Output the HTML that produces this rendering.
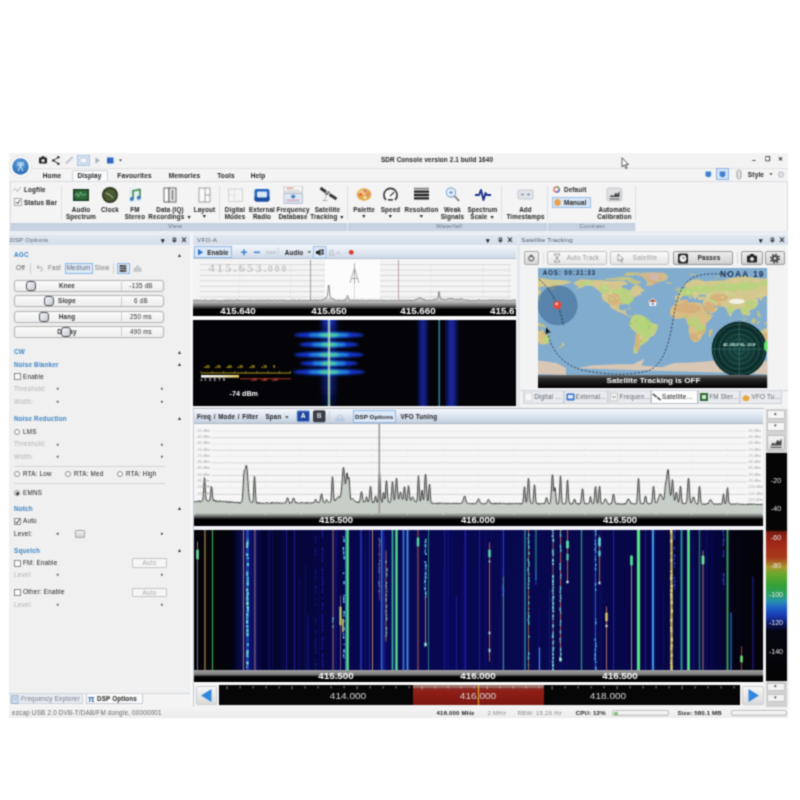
<!DOCTYPE html><html><head><meta charset="utf-8"><title>SDR Console</title><style>
*{margin:0;padding:0;box-sizing:border-box}
html,body{width:800px;height:800px;background:#fff;overflow:hidden}
body{position:relative;font-family:"Liberation Sans",sans-serif;font-size:6px;color:#222;line-height:1}
.a{position:absolute}
.t{position:absolute;white-space:nowrap;transform:translateX(-50%);text-align:center}
.l{position:absolute;white-space:nowrap}
.b{font-weight:bold}
.hdr{position:absolute;height:11px;background:linear-gradient(#e4eaf2,#d6dfea);color:#667;font-size:6px}
.blue{color:#3d84c6;font-weight:bold;font-size:6px}
.gray{color:#aaa}
</style></head><body><div id="app" style="position:absolute;left:0;top:0;width:800px;height:800px;background:#fff;filter:url(#softblur)">
<div class="a" style="left:9px;top:153px;width:779px;height:565px;background:#f3f3f3"></div>
<div class="t b" style="left:437px;top:157px;font-size:6.40px;color:#222;letter-spacing:0.1px">SDR Console version 2.1 build 1640</div>
<div class="l b" style="left:752px;top:156px;font-size:7.00px;color:#222;">–</div>
<div class="l b" style="left:765px;top:156px;font-size:6.30px;color:#222;letter-spacing:0.15px;">❐</div>
<div class="l b" style="left:778px;top:156px;font-size:6.30px;color:#222;letter-spacing:0.15px;">✕</div>
<svg class="a" style="left:38px;top:155px" width="90" height="11" viewBox="0 0 90 11"><rect x="1" y="2.5" width="8" height="6" rx="1" fill="#222"/><rect x="3.5" y="1.3" width="3" height="2" fill="#222"/><circle cx="5" cy="5.6" r="1.7" fill="#f1f1f1"/><path d="M20 2.5L15.5 5.5L20 8.5" stroke="#333" stroke-width="1" fill="none"/><circle cx="20.3" cy="2.3" r="1.3" fill="#333"/><circle cx="20.3" cy="8.7" r="1.3" fill="#333"/><circle cx="15.3" cy="5.5" r="1.3" fill="#333"/><path d="M28.5 8L34 2.5" stroke="#c4c8cc" stroke-width="2.2" stroke-linecap="round"/><rect x="39.5" y="0.5" width="12" height="10" fill="#d6e4f5" stroke="#9cbde4" stroke-width="0.8"/><rect x="42" y="3" width="7" height="5" rx="1" fill="#f4f8fc" stroke="#9aa9bb" stroke-width="0.6"/><path d="M57.5 2.5L62 5.5L57.5 8.5Z" fill="#a8adb3"/><rect x="69" y="2.5" width="6.5" height="6" fill="#2f66c4"/><path d="M81 4.5h3l-1.5 2z" fill="#333"/></svg>
<div class="a" style="left:9px;top:168px;width:779px;height:13px;background:#f4f4f4;border-top:1px solid #e3e3e3"></div>
<div class="a" style="left:72px;top:170px;width:36px;height:12px;background:#f8f9fa;border:1px solid #d0d4d9;border-bottom:none;border-radius:2px 2px 0 0"></div>
<div class="t b" style="left:52px;top:172.5px;font-size:6.51px;color:#222;letter-spacing:0.15px;">Home</div>
<div class="t b" style="left:89.5px;top:172.5px;font-size:6.51px;color:#222;letter-spacing:0.15px;">Display</div>
<div class="t b" style="left:134.5px;top:172.5px;font-size:6.51px;color:#222;letter-spacing:0.15px;">Favourites</div>
<div class="t b" style="left:184.5px;top:172.5px;font-size:6.51px;color:#222;letter-spacing:0.15px;">Memories</div>
<div class="t b" style="left:226px;top:172.5px;font-size:6.51px;color:#222;letter-spacing:0.15px;">Tools</div>
<div class="t b" style="left:258px;top:172.5px;font-size:6.51px;color:#222;letter-spacing:0.15px;">Help</div>
<div class="a" style="left:9px;top:155px;width:23px;height:23px;border-radius:50%;background:#fbfbfb;border:1px solid #e2e2e2"></div>
<svg class="a" style="left:12px;top:158px" width="17" height="17" viewBox="0 0 17 17"><defs><radialGradient id="ab" cx="50%" cy="35%" r="65%"><stop offset="0" stop-color="#6aa9e0"/><stop offset="1" stop-color="#2568b0"/></radialGradient></defs><circle cx="8.5" cy="8.5" r="8.2" fill="url(#ab)"/><path d="M5 5h7M5 7h7M8.5 5v4M6 13l2.5-5 2.5 5" stroke="#dbe9f8" stroke-width="1" fill="none"/></svg>
<div class="a" style="left:716px;top:168px;width:13px;height:12px;background:#d6e4f5;border:1px solid #8db4e6"></div>
<svg class="a" style="left:702px;top:168px" width="86" height="13" viewBox="0 0 86 13"><path d="M3.5 3.5h5.6v4.6l-2.8 1.4L3.5 8.1z" fill="#3f7fd0"/><path d="M17.7 3.5h5.6v4.6l-2.8 1.4l-2.8-1.4z" fill="#3f7fd0"/><rect x="35" y="2" width="4" height="9" rx="2" fill="none" stroke="#999" stroke-width="0.9"/><path d="M35 5h4M35 8h4" stroke="#999" stroke-width="0.6"/><path d="M67.5 5.2h3l-1.5 2z" fill="#333"/><circle cx="79" cy="6.5" r="3.2" fill="#c9cdd2"/><circle cx="79" cy="6.5" r="1.2" fill="#f1f1f1"/></svg>
<div class="t b" style="left:756px;top:171.5px;font-size:6.51px;color:#222;letter-spacing:0.15px;">Style</div>
<div class="a" style="left:10px;top:181px;width:778px;height:51px;background:#f4f4f5;border:1px solid #d9dce0;border-radius:0 0 3px 3px"></div>
<div class="a" style="left:10px;top:222.5px;width:625px;height:8px;background:linear-gradient(#c3d0df,#c8d4e2)"></div>
<div class="a" style="left:9px;top:231px;width:779px;height:2.5px;background:#e9eef4"></div>
<div class="t" style="left:175px;top:223.3px;font-size:6.20px;color:#6c7c94;letter-spacing:0.22px;">View</div>
<div class="t" style="left:449px;top:223.3px;font-size:6.20px;color:#6c7c94;letter-spacing:0.22px;">Waterfall</div>
<div class="t" style="left:592px;top:223.3px;font-size:6.20px;color:#6c7c94;letter-spacing:0.22px;">Contrast</div>
<div class="a" style="left:60.5px;top:186px;width:1px;height:34px;background:#dcdfe3"></div>
<div class="a" style="left:219px;top:186px;width:1px;height:34px;background:#dcdfe3"></div>
<div class="a" style="left:346.5px;top:186px;width:1px;height:34px;background:#dcdfe3"></div>
<div class="a" style="left:500.5px;top:186px;width:1px;height:34px;background:#dcdfe3"></div>
<div class="a" style="left:547px;top:186px;width:1px;height:34px;background:#dcdfe3"></div>
<div class="a" style="left:635px;top:186px;width:1px;height:34px;background:#dcdfe3"></div>
<div class="a" style="left:346.5px;top:222.5px;width:1px;height:8px;background:#e4e9f0"></div>
<div class="a" style="left:547px;top:222.5px;width:1px;height:8px;background:#e4e9f0"></div>
<div class="a" style="left:635px;top:222.5px;width:1px;height:8px;background:#e4e9f0"></div>
<svg class="a" style="left:12px;top:185px" width="12" height="22" viewBox="0 0 12 22"><path d="M1 6c2-3 3-3 4 0M5 7l4-5" stroke="#aaa" stroke-width="0.9" fill="none"/><rect x="2.5" y="13.5" width="7" height="7" fill="#fafafa" stroke="#9a9a9a" stroke-width="0.8"/><path d="M4 17l1.6 2L8 14.8" stroke="#444" stroke-width="1" fill="none"/></svg>
<div class="l b" style="left:24px;top:187px;font-size:6.30px;color:#222;letter-spacing:0.15px;">Logfile</div>
<div class="l b" style="left:24px;top:199.5px;font-size:6.30px;color:#222;letter-spacing:0.15px;">Status Bar</div>
<div class="t b" style="left:81px;top:207px;font-size:6.30px;color:#222;letter-spacing:0.15px;">Audio</div>
<div class="t b" style="left:81px;top:214px;font-size:6.30px;color:#222;letter-spacing:0.15px;">Spectrum</div>
<div class="t b" style="left:110px;top:207px;font-size:6.30px;color:#222;letter-spacing:0.15px;">Clock</div>
<div class="t b" style="left:135px;top:207px;font-size:6.30px;color:#222;letter-spacing:0.15px;">FM</div>
<div class="t b" style="left:135px;top:214px;font-size:6.30px;color:#222;letter-spacing:0.15px;">Stereo</div>
<div class="t b" style="left:170px;top:207px;font-size:6.30px;color:#222;letter-spacing:0.15px;">Data (IQ)</div>
<div class="t b" style="left:170px;top:214px;font-size:6.30px;color:#222;letter-spacing:0.15px;">Recordings <span style="font-size:5.2px;vertical-align:0.5px">▼</span></div>
<div class="t b" style="left:204.5px;top:207px;font-size:6.30px;color:#222;letter-spacing:0.15px;">Layout</div>
<div class="t b" style="left:204.5px;top:214px;font-size:6.30px;color:#222;letter-spacing:0.15px;"><span style="font-size:5.2px;vertical-align:1.5px">▼</span></div>
<div class="t b" style="left:235px;top:207px;font-size:6.30px;color:#222;letter-spacing:0.15px;">Digital</div>
<div class="t b" style="left:235px;top:214px;font-size:6.30px;color:#222;letter-spacing:0.15px;">Modes</div>
<div class="t b" style="left:262px;top:207px;font-size:6.30px;color:#222;letter-spacing:0.15px;">External</div>
<div class="t b" style="left:262px;top:214px;font-size:6.30px;color:#222;letter-spacing:0.15px;">Radio</div>
<div class="t b" style="left:293px;top:207px;font-size:6.30px;color:#222;letter-spacing:0.15px;">Frequency</div>
<div class="t b" style="left:293px;top:214px;font-size:6.30px;color:#222;letter-spacing:0.15px;">Database</div>
<div class="t b" style="left:327.5px;top:207px;font-size:6.30px;color:#222;letter-spacing:0.15px;">Satellite</div>
<div class="t b" style="left:327.5px;top:214px;font-size:6.30px;color:#222;letter-spacing:0.15px;">Tracking <span style="font-size:5.2px;vertical-align:0.5px">▼</span></div>
<div class="t b" style="left:364px;top:207px;font-size:6.30px;color:#222;letter-spacing:0.15px;">Palette</div>
<div class="t b" style="left:364px;top:214px;font-size:6.30px;color:#222;letter-spacing:0.15px;"><span style="font-size:5.2px;vertical-align:1.5px">▼</span></div>
<div class="t b" style="left:390.5px;top:207px;font-size:6.30px;color:#222;letter-spacing:0.15px;">Speed</div>
<div class="t b" style="left:390.5px;top:214px;font-size:6.30px;color:#222;letter-spacing:0.15px;"><span style="font-size:5.2px;vertical-align:1.5px">▼</span></div>
<div class="t b" style="left:421.5px;top:207px;font-size:6.30px;color:#222;letter-spacing:0.15px;">Resolution</div>
<div class="t b" style="left:421.5px;top:214px;font-size:6.30px;color:#222;letter-spacing:0.15px;"><span style="font-size:5.2px;vertical-align:1.5px">▼</span></div>
<div class="t b" style="left:452.5px;top:207px;font-size:6.30px;color:#222;letter-spacing:0.15px;">Weak</div>
<div class="t b" style="left:452.5px;top:214px;font-size:6.30px;color:#222;letter-spacing:0.15px;">Signals</div>
<div class="t b" style="left:482.5px;top:207px;font-size:6.30px;color:#222;letter-spacing:0.15px;">Spectrum</div>
<div class="t b" style="left:482.5px;top:214px;font-size:6.30px;color:#222;letter-spacing:0.15px;">Scale <span style="font-size:5.2px;vertical-align:0.5px">▼</span></div>
<div class="t b" style="left:525.5px;top:207px;font-size:6.30px;color:#222;letter-spacing:0.15px;">Add</div>
<div class="t b" style="left:525.5px;top:214px;font-size:6.30px;color:#222;letter-spacing:0.15px;">Timestamps</div>
<div class="t b" style="left:614.5px;top:207px;font-size:6.30px;color:#222;letter-spacing:0.15px;">Automatic</div>
<div class="t b" style="left:614.5px;top:214px;font-size:6.30px;color:#222;letter-spacing:0.15px;">Calibration</div>
<svg class="a" style="left:9px;top:186px" width="640" height="20" viewBox="0 0 640 20"><rect x="64" y="3" width="16" height="12" fill="#1f3b22"/><rect x="65.5" y="4.5" width="13" height="9" fill="#2f6a3a"/><path d="M66 10l2-3 1.5 4 2-5 2 4 2-2 2 1" stroke="#8fd39a" stroke-width="0.7" fill="none"/><circle cx="101" cy="9" r="8" fill="#2b3320"/><circle cx="101" cy="9" r="6.3" fill="#4a5a33"/><path d="M101 9l-4-2M101 9l3 3" stroke="#cfd8b0" stroke-width="0.9"/><rect x="120" y="2" width="12" height="14" fill="#e4eef2"/><path d="M124 13V5l7-1.5v8" stroke="#3d8a4a" stroke-width="1.6" fill="none"/><circle cx="122.8" cy="13" r="2" fill="#3c79c0"/><circle cx="129.8" cy="11.8" r="2" fill="#3c79c0"/><rect x="155" y="2" width="5" height="14" fill="#fff" stroke="#555" stroke-width="0.9"/><rect x="160" y="2" width="7" height="14" fill="#e8e8e8" stroke="#555" stroke-width="0.9"/><path d="M163.5 4v10" stroke="#777" stroke-width="1.5"/><rect x="190" y="2" width="11" height="14" fill="#fbfbfb" stroke="#8a8a8a" stroke-width="0.8"/><path d="M196 2v14M196 9h5" stroke="#8a8a8a" stroke-width="0.8"/><rect x="219.5" y="3" width="14" height="12.5" fill="#f3f3f3" stroke="#cbcbcb" stroke-width="0.8"/><path d="M225.5 3v12.5M219.5 9h6" stroke="#dadada" stroke-width="0.7"/><rect x="245.5" y="3" width="15" height="12.5" rx="2" fill="#2460c0"/><rect x="245.5" y="10" width="15" height="5.5" rx="2" fill="#1a4a9e"/><rect x="248" y="5.5" width="10" height="6" rx="1" fill="#dce9f8"/><rect x="275" y="0" width="18.5" height="6" fill="#f6f6f6" stroke="#aaa" stroke-width="0.6"/><path d="M277.5 2.2h7" stroke="#d55" stroke-width="0.8"/><path d="M277.5 4.2h13" stroke="#bbb" stroke-width="0.6"/><rect x="275" y="7.5" width="18.5" height="10" fill="#dfe9f5" stroke="#9aa4b5" stroke-width="0.6"/><circle cx="284.2" cy="10.5" r="2.1" fill="#4a86cc"/><path d="M277.5 14h13" stroke="#d77" stroke-width="0.7"/><path d="M277.5 15.8h13" stroke="#aab" stroke-width="0.6"/><path d="M311.5 2l5.5 4" stroke="#333" stroke-width="2.8"/><path d="M320.5 8.5l7 4.5" stroke="#333" stroke-width="2.8"/><path d="M316.5 8.8l4-3" stroke="#777" stroke-width="2.4"/><path d="M317 10.5l-1.5 3M313.5 14.5h5" stroke="#888" stroke-width="0.7"/><ellipse cx="355" cy="8.5" rx="7.3" ry="6.2" fill="#e2a94c"/><ellipse cx="353" cy="6.5" rx="4" ry="2.5" fill="#f0c878"/><circle cx="351.5" cy="8.5" r="1.6" fill="#d8605a"/><circle cx="356" cy="5.2" r="1.4" fill="#c87a9a"/><circle cx="359" cy="8.5" r="1.5" fill="#d88a8a"/><circle cx="356" cy="11.5" r="1.6" fill="#f3e3c2"/><path d="M376.6 13.4a6.6 6.6 0 1 1 9.8 0" fill="#f8f8f8" stroke="#2e2e2e" stroke-width="1.6" stroke-linecap="round"/><path d="M381.5 9.6l3.4-3.2" stroke="#2e2e2e" stroke-width="1.3" stroke-linecap="round"/><path d="M379 13.8h5" stroke="#2e2e2e" stroke-width="1.5"/><path d="M405 2.6h15" stroke="#777" stroke-width="1.6"/><path d="M405 5.6h15M405 9h15M405 12.4h15" stroke="#1c1c1c" stroke-width="2.3"/><circle cx="442" cy="6.5" r="4.6" fill="#eaf3fb" stroke="#7fa6cc" stroke-width="1.1"/><path d="M440 6.5h4M442 4.5v4" stroke="#4a86cc" stroke-width="0.9"/><path d="M445.5 10l4.5 5" stroke="#777" stroke-width="1.8"/><path d="M466 9h4l2-5 2.5 10 2-7 1.5 2h4" stroke="#1c2f8a" stroke-width="1.9" fill="none" stroke-linejoin="round"/><rect x="509" y="4" width="15" height="9" rx="1" fill="#e2e4e8" stroke="#b3b7bd" stroke-width="0.7"/><path d="M512 8.5h3M518 8.5h3" stroke="#7d93b5" stroke-width="1.6"/><rect x="598" y="2" width="15" height="13" rx="2" fill="#dedfe1" stroke="#b9bbbf" stroke-width="0.7"/><path d="M600.5 11l2-2 2 1 2-3 2 1 2-3v6h-10z" fill="#444"/><path d="M600.5 13h10" stroke="#444" stroke-width="1"/><circle cx="547.5" cy="3.4" r="2.6" fill="none" stroke="#d66" stroke-width="1.3"/><path d="M547.5 0.8a2.6 2.6 0 0 1 2.6 2.6" stroke="#5a5" stroke-width="1.3" fill="none"/><path d="M550.1 3.4a2.6 2.6 0 0 1 -2.6 2.6" stroke="#46c" stroke-width="1.3" fill="none"/></svg>
<div class="l b" style="left:564px;top:186.5px;font-size:6.30px;color:#222;letter-spacing:0.15px;">Default</div>
<div class="a" style="left:552px;top:197px;width:39px;height:11px;background:#d8e6f6;border:1px solid #9cc0ea"></div>
<svg class="a" style="left:553px;top:198px" width="9" height="9" viewBox="0 0 9 9"><ellipse cx="4.5" cy="4.5" rx="3.2" ry="3.6" fill="#e6a24a"/></svg>
<div class="l b" style="left:564px;top:199.5px;font-size:6.30px;color:#222;letter-spacing:0.15px;">Manual</div>
<svg class="a" style="left:621px;top:157px" width="9" height="13" viewBox="0 0 9 13"><path d="M1 0.8v9.2l2.2-2 1.6 3.6 1.4-.6-1.6-3.5h3z" fill="#fff" stroke="#333" stroke-width="0.8"/></svg>
<div class="a" style="left:9px;top:233.5px;width:181px;height:473px;background:#f0f0f0"></div>
<div class="a" style="left:9px;top:234.5px;width:181px;height:10.5px;background:linear-gradient(#e0e7f0,#d4deea)"></div>
<div class="l" style="left:10px;top:237px;font-size:6.25px;color:#5b6472;letter-spacing:0.22px;">DSP Options</div>
<div class="l b" style="left:160.5px;top:236.5px;font-size:7.00px;color:#222;">▾</div>
<svg class="a" style="left:171px;top:236px" width="18" height="8" viewBox="0 0 18 8"><path d="M2.2 2h2.4v2.8H2.2zM1.5 4.9h3.8M3.4 4.9v1.8" stroke="#222" stroke-width="0.9" fill="none"/><path d="M11 1.5l4 4.5M15 1.5l-4 4.5" stroke="#222" stroke-width="1.1"/></svg>
<div class="a" style="left:190px;top:233.5px;width:2.5px;height:473px;background:#f5f6f8"></div>
<div class="l b" style="left:14px;top:252.4px;font-size:6.41px;color:#3d86c8;letter-spacing:0.15px;">AGC</div>
<div class="l" style="left:177.5px;top:252.6px;font-size:5.78px;color:#333;letter-spacing:0.22px;">▴</div>
<div class="t" style="left:20.5px;top:265px;font-size:6.30px;color:#555;letter-spacing:0.22px;">Off</div>
<div class="a" style="left:29.5px;top:263px;width:1px;height:11px;background:#cfcfcf"></div>
<svg class="a" style="left:35px;top:264px" width="9" height="8" viewBox="0 0 9 8"><path d="M2 3.2h3.2a2 2 0 0 1 0 4M2 3.2l2-1.8M2 3.2l2 1.6" stroke="#999" stroke-width="0.8" fill="none"/></svg>
<div class="t" style="left:54.5px;top:265px;font-size:6.30px;color:#777;letter-spacing:0.22px;">Fast</div>
<div class="a" style="left:64.5px;top:262.7px;width:28px;height:11px;background:#dde9f6;border:1px solid #8eb6e4"></div>
<div class="t" style="left:78.5px;top:265px;font-size:6.30px;color:#667;letter-spacing:0.22px;">Medium</div>
<div class="t" style="left:102px;top:265px;font-size:6.30px;color:#777;letter-spacing:0.22px;">Slow</div>
<div class="a" style="left:113px;top:263px;width:1px;height:11px;background:#cfcfcf"></div>
<div class="a" style="left:116.5px;top:262.7px;width:13px;height:11px;background:#dde9f6;border:1px solid #8eb6e4"></div>
<svg class="a" style="left:118px;top:264px" width="26" height="9" viewBox="0 0 26 9"><path d="M1.5 2h7M1.5 4.5h7M1.5 7h7" stroke="#333" stroke-width="1.3"/><path d="M3 1v2M6.5 3.5v2M4 6v2" stroke="#333" stroke-width="1.3"/><path d="M16 8V4.5h2V8M18.5 8V2h2v6M21 8V4h2v4" stroke="#b5b9bd" stroke-width="0.8" fill="#d5d8db"/></svg>
<div class="a" style="left:14px;top:280.0px;width:150px;height:12px;background:linear-gradient(#fbfbfb,#ededed);border:1px solid #b4b4b4;border-radius:3px;box-shadow:0 0 1px #c4c4c4"></div>
<div class="a" style="left:120.5px;top:281.5px;width:1px;height:9px;background:#cdcdcd"></div>
<div class="t b" style="left:67px;top:283.0px;font-size:6.30px;color:#333;letter-spacing:0.15px;">Knee</div>
<div class="t" style="left:141px;top:283.0px;font-size:6.30px;color:#333;letter-spacing:0.22px;">-135 dB</div>
<div class="a" style="left:25.5px;top:281.0px;width:10px;height:10px;background:linear-gradient(135deg,#f6f6f8,#c4c8d0);border:1.4px solid #4c5058;border-radius:3px"></div>
<div class="a" style="left:14px;top:295.3px;width:150px;height:12px;background:linear-gradient(#fbfbfb,#ededed);border:1px solid #b4b4b4;border-radius:3px;box-shadow:0 0 1px #c4c4c4"></div>
<div class="a" style="left:120.5px;top:296.8px;width:1px;height:9px;background:#cdcdcd"></div>
<div class="t b" style="left:67px;top:298.3px;font-size:6.30px;color:#333;letter-spacing:0.15px;">Slope</div>
<div class="t" style="left:141px;top:298.3px;font-size:6.30px;color:#333;letter-spacing:0.22px;">6 dB</div>
<div class="a" style="left:43.5px;top:296.3px;width:10px;height:10px;background:linear-gradient(135deg,#f6f6f8,#c4c8d0);border:1.4px solid #4c5058;border-radius:3px"></div>
<div class="a" style="left:14px;top:310.6px;width:150px;height:12px;background:linear-gradient(#fbfbfb,#ededed);border:1px solid #b4b4b4;border-radius:3px;box-shadow:0 0 1px #c4c4c4"></div>
<div class="a" style="left:120.5px;top:312.1px;width:1px;height:9px;background:#cdcdcd"></div>
<div class="t b" style="left:67px;top:313.6px;font-size:6.30px;color:#333;letter-spacing:0.15px;">Hang</div>
<div class="t" style="left:141px;top:313.6px;font-size:6.30px;color:#333;letter-spacing:0.22px;">250 ms</div>
<div class="a" style="left:38.5px;top:311.6px;width:10px;height:10px;background:linear-gradient(135deg,#f6f6f8,#c4c8d0);border:1.4px solid #4c5058;border-radius:3px"></div>
<div class="a" style="left:14px;top:325.9px;width:150px;height:12px;background:linear-gradient(#fbfbfb,#ededed);border:1px solid #b4b4b4;border-radius:3px;box-shadow:0 0 1px #c4c4c4"></div>
<div class="a" style="left:120.5px;top:327.4px;width:1px;height:9px;background:#cdcdcd"></div>
<div class="t b" style="left:67px;top:328.9px;font-size:6.30px;color:#333;letter-spacing:0.15px;">Decay</div>
<div class="t" style="left:141px;top:328.9px;font-size:6.30px;color:#333;letter-spacing:0.22px;">490 ms</div>
<div class="a" style="left:61px;top:326.9px;width:10px;height:10px;background:linear-gradient(135deg,#f6f6f8,#c4c8d0);border:1.4px solid #4c5058;border-radius:3px"></div>
<div class="l b" style="left:14px;top:349.3px;font-size:6.41px;color:#3d86c8;letter-spacing:0.15px;">CW</div>
<div class="l" style="left:177.5px;top:349.5px;font-size:5.78px;color:#333;letter-spacing:0.22px;">▴</div>
<div class="l b" style="left:14px;top:361.8px;font-size:6.41px;color:#3d86c8;letter-spacing:0.15px;">Noise Blanker</div>
<div class="l" style="left:177.5px;top:362px;font-size:5.78px;color:#333;letter-spacing:0.22px;">▴</div>
<div class="a" style="left:14px;top:373.2px;width:7px;height:7px;background:#fafafa;border:0.8px solid #8e8e8e"></div>
<div class="l" style="left:23px;top:373.6px;font-size:6.30px;color:#222;letter-spacing:0.22px;">Enable</div>
<div class="l" style="left:14px;top:385.7px;font-size:6.30px;color:#b3b3b3;letter-spacing:0.22px;">Threshold:</div>
<div class="l" style="left:55.5px;top:386.09999999999997px;font-size:5.25px;color:#555;letter-spacing:0.22px;">◂</div>
<div class="l" style="left:160.5px;top:386.09999999999997px;font-size:5.25px;color:#555;letter-spacing:0.22px;">▸</div>
<div class="l" style="left:14px;top:399px;font-size:6.30px;color:#b3b3b3;letter-spacing:0.22px;">Width:</div>
<div class="l" style="left:55.5px;top:399.4px;font-size:5.25px;color:#555;letter-spacing:0.22px;">◂</div>
<div class="l" style="left:160.5px;top:399.4px;font-size:5.25px;color:#555;letter-spacing:0.22px;">▸</div>
<div class="l b" style="left:14px;top:416.1px;font-size:6.41px;color:#3d86c8;letter-spacing:0.15px;">Noise Reduction</div>
<div class="l" style="left:177.5px;top:416.3px;font-size:5.78px;color:#333;letter-spacing:0.22px;">▴</div>
<div class="a" style="left:14px;top:428.8px;width:6px;height:6px;background:#fafafa;border:0.8px solid #8e8e8e;border-radius:50%"></div>
<div class="l" style="left:23px;top:428.7px;font-size:6.30px;color:#222;letter-spacing:0.22px;">LMS</div>
<div class="l" style="left:14px;top:441.3px;font-size:6.30px;color:#b3b3b3;letter-spacing:0.22px;">Threshold:</div>
<div class="l" style="left:55.5px;top:441.7px;font-size:5.25px;color:#555;letter-spacing:0.22px;">◂</div>
<div class="l" style="left:160.5px;top:441.7px;font-size:5.25px;color:#555;letter-spacing:0.22px;">▸</div>
<div class="l" style="left:14px;top:454px;font-size:6.30px;color:#b3b3b3;letter-spacing:0.22px;">Width:</div>
<div class="l" style="left:55.5px;top:454.4px;font-size:5.25px;color:#555;letter-spacing:0.22px;">◂</div>
<div class="l" style="left:160.5px;top:454.4px;font-size:5.25px;color:#555;letter-spacing:0.22px;">▸</div>
<div class="a" style="left:14px;top:465.5px;width:151px;height:1px;background:#d4d4d4"></div>
<div class="a" style="left:14px;top:471.3px;width:6px;height:6px;background:#fafafa;border:0.8px solid #8e8e8e;border-radius:50%"></div>
<div class="l" style="left:23px;top:471.2px;font-size:6.30px;color:#222;letter-spacing:0.22px;">RTA: Low</div>
<div class="a" style="left:65px;top:471.3px;width:6px;height:6px;background:#fafafa;border:0.8px solid #8e8e8e;border-radius:50%"></div>
<div class="l" style="left:74px;top:471.2px;font-size:6.30px;color:#222;letter-spacing:0.22px;">RTA: Med</div>
<div class="a" style="left:117px;top:471.3px;width:6px;height:6px;background:#fafafa;border:0.8px solid #8e8e8e;border-radius:50%"></div>
<div class="l" style="left:126px;top:471.2px;font-size:6.30px;color:#222;letter-spacing:0.22px;">RTA: High</div>
<div class="a" style="left:14px;top:483px;width:151px;height:1px;background:#d4d4d4"></div>
<div class="a" style="left:14px;top:490.3px;width:6px;height:6px;background:#fafafa;border:0.8px solid #8e8e8e;border-radius:50%"></div>
<div class="a" style="left:15.5px;top:491.8px;width:3px;height:3px;background:#333;border-radius:50%"></div>
<div class="l" style="left:23px;top:490.2px;font-size:6.30px;color:#222;letter-spacing:0.22px;">EMNS</div>
<div class="l b" style="left:14px;top:506.1px;font-size:6.41px;color:#3d86c8;letter-spacing:0.15px;">Notch</div>
<div class="l" style="left:177.5px;top:506.3px;font-size:5.78px;color:#333;letter-spacing:0.22px;">▴</div>
<div class="a" style="left:14px;top:517.8px;width:7px;height:7px;background:#fafafa;border:0.8px solid #8e8e8e"></div>
<svg class="a" style="left:14px;top:517.8px" width="7" height="7" viewBox="0 0 7 7"><path d="M1.4 3.6l1.5 1.8L5.6 1.2" stroke="#333" stroke-width="1" fill="none"/></svg>
<div class="l" style="left:23px;top:518.2px;font-size:6.30px;color:#222;letter-spacing:0.22px;">Auto</div>
<div class="l" style="left:14px;top:530.7px;font-size:6.30px;color:#222;letter-spacing:0.22px;">Level:</div>
<div class="l" style="left:55.5px;top:531.1999999999999px;font-size:5.25px;color:#333;letter-spacing:0.22px;">◂</div>
<div class="l" style="left:160.5px;top:531.1999999999999px;font-size:5.25px;color:#333;letter-spacing:0.22px;">▸</div>
<div class="a" style="left:75px;top:529.5px;width:10px;height:8.5px;background:linear-gradient(#f0f0f0,#cfcfcf);border:1px solid #aaa;border-radius:1px"></div>
<div class="l b" style="left:14px;top:547.5999999999999px;font-size:6.41px;color:#3d86c8;letter-spacing:0.15px;">Squelch</div>
<div class="l" style="left:177.5px;top:547.8px;font-size:5.78px;color:#333;letter-spacing:0.22px;">▴</div>
<div class="a" style="left:14px;top:559.5px;width:7px;height:7px;background:#fafafa;border:0.8px solid #8e8e8e"></div>
<div class="l" style="left:23px;top:559.9px;font-size:6.30px;color:#222;letter-spacing:0.22px;">FM: Enable</div>
<div class="a" style="left:132px;top:558px;width:35px;height:9.5px;background:#f6f6f6;border:1px solid #c4c4c4;border-radius:1px"></div>
<div class="t" style="left:149.5px;top:560px;font-size:6.30px;color:#aaa;letter-spacing:0.22px;">Auto</div>
<div class="l" style="left:14px;top:572px;font-size:6.30px;color:#b3b3b3;letter-spacing:0.22px;">Level:</div>
<div class="l" style="left:55.5px;top:572.4px;font-size:5.25px;color:#555;letter-spacing:0.22px;">◂</div>
<div class="l" style="left:160.5px;top:572.4px;font-size:5.25px;color:#555;letter-spacing:0.22px;">▸</div>
<div class="a" style="left:14px;top:589.0px;width:7px;height:7px;background:#fafafa;border:0.8px solid #8e8e8e"></div>
<div class="l" style="left:23px;top:589.4px;font-size:6.30px;color:#222;letter-spacing:0.22px;">Other: Enable</div>
<div class="a" style="left:132px;top:587.5px;width:35px;height:9.5px;background:#f6f6f6;border:1px solid #c4c4c4;border-radius:1px"></div>
<div class="t" style="left:149.5px;top:589.5px;font-size:6.30px;color:#aaa;letter-spacing:0.22px;">Auto</div>
<div class="l" style="left:14px;top:602px;font-size:6.30px;color:#b3b3b3;letter-spacing:0.22px;">Level:</div>
<div class="l" style="left:55.5px;top:602.4px;font-size:5.25px;color:#555;letter-spacing:0.22px;">◂</div>
<div class="l" style="left:160.5px;top:602.4px;font-size:5.25px;color:#555;letter-spacing:0.22px;">▸</div>
<div class="a" style="left:9px;top:692.5px;width:181px;height:1px;background:#d2d6db"></div>
<div class="a" style="left:9px;top:693.5px;width:181px;height:13px;background:#f4f4f4"></div>
<div class="a" style="left:10px;top:693.5px;width:73px;height:10.5px;background:#e6ebf1;border:1px solid #d0d5dc;border-top:none"></div>
<div class="a" style="left:86px;top:693.5px;width:57px;height:10.5px;background:#fbfbfb;border:1px solid #c5cad1;border-top:none"></div>
<svg class="a" style="left:11px;top:695px" width="8" height="9" viewBox="0 0 8 9"><rect x="1" y="0.8" width="6" height="7.4" fill="#dfe9f5" stroke="#6f8fb8" stroke-width="0.7"/><path d="M2.3 3h3.4M2.3 5h3.4" stroke="#6f8fb8" stroke-width="0.6"/></svg>
<div class="l" style="left:21px;top:696px;font-size:6.30px;color:#778;letter-spacing:0.22px;">Frequency Explorer</div>
<div class="l b" style="left:88px;top:694.5px;font-size:8.50px;color:#2d5f9e;">π</div>
<div class="l b" style="left:97px;top:696px;font-size:6.30px;color:#222;letter-spacing:0.15px;">DSP Options</div>
<div class="a" style="left:192.5px;top:233.5px;width:324px;height:174px;background:#f3f3f3"></div>
<div class="a" style="left:192.5px;top:234.5px;width:324px;height:10.5px;background:linear-gradient(#e0e7f0,#d4deea)"></div>
<div class="l" style="left:197px;top:237px;font-size:6.25px;color:#5b6472;letter-spacing:0.22px;">VFO-A</div>
<div class="l b" style="left:486px;top:236.5px;font-size:7.00px;color:#222;">▾</div>
<svg class="a" style="left:496.5px;top:236px" width="18" height="8" viewBox="0 0 18 8"><path d="M2.2 2h2.4v2.8H2.2zM1.5 4.9h3.8M3.4 4.9v1.8" stroke="#222" stroke-width="0.9" fill="none"/><path d="M11 1.5l4 4.5M15 1.5l-4 4.5" stroke="#222" stroke-width="1.1"/></svg>
<div class="a" style="left:516.5px;top:233.5px;width:3px;height:174px;background:#e3e8ee"></div>
<div class="a" style="left:193px;top:245.5px;width:323px;height:13.5px;background:linear-gradient(#f1f5fa,#cfdae8);border-bottom:1px solid #b8c4d3"></div>
<div class="a" style="left:194px;top:246.3px;width:38px;height:12px;background:#dbe8f7;border:1px solid #95b9e6"></div>
<svg class="a" style="left:193px;top:246px" width="165" height="13" viewBox="0 0 165 13"><path d="M5 3l5 3.3L5 9.6z" fill="#2a72d0"/><path d="M48 6.3h6M51 3.3v6" stroke="#3c7fd2" stroke-width="1.5"/><path d="M61 6.3h6" stroke="#3c7fd2" stroke-width="1.5"/><path d="M85 1.5v10" stroke="#c5ccd6" stroke-width="0.8"/><path d="M114.8 5.3h3l-1.5 2z" fill="#333"/><rect x="120.5" y="0.5" width="12.5" height="11.5" fill="#dbe8f7" stroke="#95b9e6" stroke-width="0.8"/><path d="M123 5h2l2.5-2v7L125 8h-2z" fill="#222"/><rect x="128.3" y="3.5" width="2.5" height="2" fill="#222"/><rect x="128.3" y="6.5" width="2.5" height="2" fill="#222"/><path d="M137 9V5.5a1.5 1.5 0 0 1 3 0V9M136 9h6" stroke="#b5bac2" stroke-width="0.9" fill="none"/><path d="M144 9V6h2.5v3" stroke="#c4c8ce" stroke-width="0.8" fill="none"/><circle cx="158.3" cy="6.3" r="2.4" fill="#d8392b"/></svg>
<div class="t b" style="left:218px;top:249.5px;font-size:6.30px;color:#222;letter-spacing:0.15px;">Enable</div>
<div class="t b" style="left:271px;top:249.8px;font-size:5.78px;color:#b8bcc4;letter-spacing:0.15px;">xxx</div>
<div class="t b" style="left:294px;top:249.5px;font-size:6.30px;color:#222;letter-spacing:0.15px;">Audio</div>
<svg class="a" style="left:193px;top:259.5px" width="323" height="56" viewBox="0 0 323 56"><rect x="0" y="0" width="323" height="56" fill="#f4f4f4"/><rect x="132" y="0" width="55" height="41" fill="#fcfcfc"/><path d="M7 4.6H132M187 4.6H318" stroke="#d9d9d9" stroke-width="0.9"/><path d="M7 10.0H132M187 10.0H318" stroke="#d9d9d9" stroke-width="0.9"/><path d="M7 15.4H132M187 15.4H318" stroke="#d9d9d9" stroke-width="0.9"/><path d="M7 20.800000000000004H132M187 20.800000000000004H318" stroke="#d9d9d9" stroke-width="0.9"/><path d="M7 26.200000000000003H132M187 26.200000000000003H318" stroke="#d9d9d9" stroke-width="0.9"/><path d="M7 31.6H132M187 31.6H318" stroke="#d9d9d9" stroke-width="0.9"/><path d="M7 37.00000000000001H132M187 37.00000000000001H318" stroke="#d9d9d9" stroke-width="0.9"/><path d="M46 4V40" stroke="#d0d0d0" stroke-width="0.7" stroke-dasharray="1.5 2"/><path d="M97.5 4V40" stroke="#d0d0d0" stroke-width="0.7" stroke-dasharray="1.5 2"/><path d="M238 4V40" stroke="#d0d0d0" stroke-width="0.7" stroke-dasharray="1.5 2"/><path d="M290 4V40" stroke="#d0d0d0" stroke-width="0.7" stroke-dasharray="1.5 2"/><path d="M316 4V40" stroke="#d0d0d0" stroke-width="0.7" stroke-dasharray="1.5 2"/><defs><linearGradient id="vg" x1="0" y1="0" x2="0" y2="1"><stop offset="0" stop-color="#d2d2d2"/><stop offset="0.3" stop-color="#b4b4b4"/><stop offset="0.6" stop-color="#777"/><stop offset="0.9" stop-color="#1a1a1a"/><stop offset="1" stop-color="#000"/></linearGradient></defs><rect x="0" y="0" width="323" height="56" fill="#000"/><rect x="0" y="0" width="323" height="39.5" fill="#d0d0d0"/><rect x="0" y="39" width="323" height="10.5" fill="url(#vg)"/><polygon points="0,48 0,40.5 0.0,40.0 0.5,40.3 1.0,40.2 1.5,40.4 2.0,40.4 2.5,39.9 3.0,39.8 3.5,40.6 4.0,40.1 4.5,40.0 5.0,40.8 5.5,40.3 6.0,40.6 6.5,40.3 7.0,40.4 7.5,40.0 8.0,40.4 8.5,40.7 9.0,40.3 9.5,40.5 10.0,40.5 10.5,39.9 11.0,40.6 11.5,40.4 12.0,40.1 12.5,39.8 13.0,40.7 13.5,40.3 14.0,40.5 14.5,40.7 15.0,40.5 15.5,40.7 16.0,40.2 16.5,40.6 17.0,40.2 17.5,40.7 18.0,40.7 18.5,39.9 19.0,39.9 19.5,40.0 20.0,40.8 20.5,40.2 21.0,40.4 21.5,40.1 22.0,40.3 22.5,40.2 23.0,40.2 23.5,40.4 24.0,40.4 24.5,40.7 25.0,40.5 25.5,40.7 26.0,40.7 26.5,40.8 27.0,40.5 27.5,40.0 28.0,40.7 28.5,40.8 29.0,40.7 29.5,40.4 30.0,40.5 30.5,40.0 31.0,40.6 31.5,40.4 32.0,40.1 32.5,39.9 33.0,40.7 33.5,40.8 34.0,39.9 34.5,40.6 35.0,40.2 35.5,40.0 36.0,40.1 36.5,40.6 37.0,40.7 37.5,39.8 38.0,40.4 38.5,39.8 39.0,40.5 39.5,40.1 40.0,40.7 40.5,40.8 41.0,40.3 41.5,40.8 42.0,40.1 42.5,39.9 43.0,40.4 43.5,39.8 44.0,40.0 44.5,40.2 45.0,40.4 45.5,40.0 46.0,39.8 46.5,40.7 47.0,40.1 47.5,40.8 48.0,40.7 48.5,40.2 49.0,40.3 49.5,40.3 50.0,40.4 50.5,40.4 51.0,40.4 51.5,40.4 52.0,40.7 52.5,40.3 53.0,40.2 53.5,40.5 54.0,40.0 54.5,40.1 55.0,40.8 55.5,40.3 56.0,40.3 56.5,39.8 57.0,40.2 57.5,40.4 58.0,39.8 58.5,40.4 59.0,40.4 59.5,39.9 60.0,40.4 60.5,40.3 61.0,40.5 61.5,40.2 62.0,40.5 62.5,40.5 63.0,39.8 63.5,39.9 64.0,40.5 64.5,40.8 65.0,40.1 65.5,40.3 66.0,40.4 66.5,40.1 67.0,40.2 67.5,40.1 68.0,40.2 68.5,40.4 69.0,40.1 69.5,40.2 70.0,40.6 70.5,39.8 71.0,40.4 71.5,40.5 72.0,40.1 72.5,40.0 73.0,40.6 73.5,40.0 74.0,40.0 74.5,40.2 75.0,40.5 75.5,39.9 76.0,40.1 76.5,40.1 77.0,40.6 77.5,40.2 78.0,40.7 78.5,40.0 79.0,40.1 79.5,40.5 80.0,40.7 80.5,40.3 81.0,40.0 81.5,39.9 82.0,40.3 82.5,40.0 83.0,40.6 83.5,40.6 84.0,40.0 84.5,40.1 85.0,40.6 85.5,40.4 86.0,40.6 86.5,40.1 87.0,39.9 87.5,40.1 88.0,40.6 88.5,40.1 89.0,40.1 89.5,40.2 90.0,40.2 90.5,40.2 91.0,40.7 91.5,40.0 92.0,39.8 92.5,40.7 93.0,40.7 93.5,40.8 94.0,40.2 94.5,40.8 95.0,40.7 95.5,40.0 96.0,40.5 96.5,40.6 97.0,40.5 97.5,40.3 98.0,40.1 98.5,40.1 99.0,40.0 99.5,39.9 100.0,40.4 100.5,40.1 101.0,40.6 101.5,39.8 102.0,40.7 102.5,40.5 103.0,40.7 103.5,40.7 104.0,40.7 104.5,40.4 105.0,39.8 105.5,40.5 106.0,40.0 106.5,40.1 107.0,40.5 107.5,40.3 108.0,40.2 108.5,40.7 109.0,40.4 109.5,40.1 110.0,40.1 110.5,40.7 111.0,40.3 111.5,40.6 112.0,40.2 112.5,40.0 113.0,40.3 113.5,40.6 114.0,40.0 114.5,40.6 115.0,40.7 115.5,40.6 116.0,40.6 116.5,39.8 117.0,40.4 117.5,40.7 118.0,39.8 118.5,40.1 119.0,40.1 119.5,40.3 120.0,40.2 120.5,40.3 121.0,40.6 121.5,39.8 122.0,39.9 122.5,39.9 123.0,39.9 123.5,39.9 124.0,40.8 124.5,40.6 125.0,39.9 125.5,40.3 126.0,40.1 126.5,40.1 127.0,40.1 127.5,40.3 128.0,40.2 128.5,39.9 129.0,39.6 129.5,39.6 130.0,39.2 130.5,39.4 131.0,39.3 131.5,38.7 132.0,38.1 132.5,37.9 133.0,37.7 133.5,37.6 134.0,37.2 134.5,34.8 135.0,30.4 135.5,25.0 136.0,25.6 136.5,31.1 137.0,35.5 137.5,37.3 138.0,37.5 138.5,38.1 139.0,38.2 139.5,38.3 140.0,38.9 140.5,39.4 141.0,39.0 141.5,39.6 142.0,39.7 142.5,40.3 143.0,40.5 143.5,40.0 144.0,40.6 144.5,40.5 145.0,40.0 145.5,40.2 146.0,39.9 146.5,40.6 147.0,40.5 147.5,40.7 148.0,40.6 148.5,40.5 149.0,40.5 149.5,40.4 150.0,39.9 150.5,40.4 151.0,39.8 151.5,39.9 152.0,40.5 152.5,39.4 153.0,38.7 153.5,37.4 154.0,36.8 154.5,35.5 155.0,35.9 155.5,38.2 156.0,38.7 156.5,40.2 157.0,40.4 157.5,40.6 158.0,40.7 158.5,40.4 159.0,40.6 159.5,39.8 160.0,40.6 160.5,40.3 161.0,40.5 161.5,39.9 162.0,40.5 162.5,40.7 163.0,39.9 163.5,40.1 164.0,40.4 164.5,40.6 165.0,40.0 165.5,40.0 166.0,40.0 166.5,40.4 167.0,40.6 167.5,40.2 168.0,40.2 168.5,40.2 169.0,40.2 169.5,40.2 170.0,39.9 170.5,40.3 171.0,40.8 171.5,40.2 172.0,40.5 172.5,40.0 173.0,40.5 173.5,40.6 174.0,40.5 174.5,40.3 175.0,40.3 175.5,40.4 176.0,40.7 176.5,39.9 177.0,39.9 177.5,40.5 178.0,40.7 178.5,40.3 179.0,40.2 179.5,40.5 180.0,40.0 180.5,40.1 181.0,40.0 181.5,40.4 182.0,40.1 182.5,40.0 183.0,40.5 183.5,40.8 184.0,40.1 184.5,40.5 185.0,40.2 185.5,40.7 186.0,40.4 186.5,40.1 187.0,40.0 187.5,39.8 188.0,40.3 188.5,40.2 189.0,40.0 189.5,40.2 190.0,40.1 190.5,40.6 191.0,39.9 191.5,40.8 192.0,40.3 192.5,40.4 193.0,40.3 193.5,40.6 194.0,40.6 194.5,40.4 195.0,40.3 195.5,40.5 196.0,40.7 196.5,40.2 197.0,40.5 197.5,40.8 198.0,40.3 198.5,40.0 199.0,40.0 199.5,40.5 200.0,40.5 200.5,40.8 201.0,40.7 201.5,40.0 202.0,40.0 202.5,40.1 203.0,40.0 203.5,40.5 204.0,40.7 204.5,40.7 205.0,40.1 205.5,40.7 206.0,40.1 206.5,40.2 207.0,40.5 207.5,39.9 208.0,39.9 208.5,40.6 209.0,40.1 209.5,40.2 210.0,40.4 210.5,40.5 211.0,39.8 211.5,40.1 212.0,40.2 212.5,40.3 213.0,40.0 213.5,40.4 214.0,40.8 214.5,40.2 215.0,40.3 215.5,39.9 216.0,40.1 216.5,40.5 217.0,39.9 217.5,40.7 218.0,40.7 218.5,39.9 219.0,40.7 219.5,40.1 220.0,40.4 220.5,40.4 221.0,39.8 221.5,40.1 222.0,39.9 222.5,39.9 223.0,39.1 223.5,39.4 224.0,39.4 224.5,38.8 225.0,38.5 225.5,37.9 226.0,38.2 226.5,38.0 227.0,38.3 227.5,38.4 228.0,38.4 228.5,38.2 229.0,38.9 229.5,39.1 230.0,38.9 230.5,39.8 231.0,39.8 231.5,39.4 232.0,40.4 232.5,39.7 233.0,39.9 233.5,40.4 234.0,40.3 234.5,40.3 235.0,40.4 235.5,40.2 236.0,40.1 236.5,39.9 237.0,39.8 237.5,40.4 238.0,40.4 238.5,40.2 239.0,40.3 239.5,39.9 240.0,39.7 240.5,39.7 241.0,40.1 241.5,39.2 242.0,39.5 242.5,39.1 243.0,39.5 243.5,39.0 244.0,38.8 244.5,38.6 245.0,37.4 245.5,34.3 246.0,31.6 246.5,34.4 247.0,37.0 247.5,38.5 248.0,38.6 248.5,38.7 249.0,39.5 249.5,39.5 250.0,39.1 250.5,39.1 251.0,39.4 251.5,39.8 252.0,39.8 252.5,39.7 253.0,39.5 253.5,39.0 254.0,39.1 254.5,38.8 255.0,39.0 255.5,38.9 256.0,38.4 256.5,38.4 257.0,38.8 257.5,38.0 258.0,38.8 258.5,38.9 259.0,39.0 259.5,38.5 260.0,38.8 260.5,38.9 261.0,39.1 261.5,39.6 262.0,39.4 262.5,39.1 263.0,39.7 263.5,39.4 264.0,39.5 264.5,39.6 265.0,38.9 265.5,39.6 266.0,39.4 266.5,39.1 267.0,39.1 267.5,39.0 268.0,38.8 268.5,39.1 269.0,38.7 269.5,39.2 270.0,39.5 270.5,39.4 271.0,39.7 271.5,40.2 272.0,40.2 272.5,39.6 273.0,40.3 273.5,40.2 274.0,39.7 274.5,40.1 275.0,40.0 275.5,39.8 276.0,40.3 276.5,40.7 277.0,40.1 277.5,40.7 278.0,40.5 278.5,39.9 279.0,40.7 279.5,40.4 280.0,40.7 280.5,40.5 281.0,40.5 281.5,40.1 282.0,40.6 282.5,40.7 283.0,40.7 283.5,40.2 284.0,40.6 284.5,40.3 285.0,39.9 285.5,39.8 286.0,39.9 286.5,40.0 287.0,40.0 287.5,40.3 288.0,40.5 288.5,40.3 289.0,40.2 289.5,40.4 290.0,40.1 290.5,40.3 291.0,40.6 291.5,40.2 292.0,40.0 292.5,40.7 293.0,40.5 293.5,40.2 294.0,40.2 294.5,40.3 295.0,40.4 295.5,40.0 296.0,39.8 296.5,40.0 297.0,40.6 297.5,39.9 298.0,40.3 298.5,40.0 299.0,40.0 299.5,40.0 300.0,40.2 300.5,40.0 301.0,39.8 301.5,39.9 302.0,40.0 302.5,40.3 303.0,39.9 303.5,39.8 304.0,40.2 304.5,40.2 305.0,40.5 305.5,39.9 306.0,40.2 306.5,40.2 307.0,39.8 307.5,40.8 308.0,40.0 308.5,39.9 309.0,40.3 309.5,40.0 310.0,40.4 310.5,40.1 311.0,39.9 311.5,39.9 312.0,40.5 312.5,40.1 313.0,40.6 313.5,40.3 314.0,40.7 314.5,40.1 315.0,40.0 315.5,40.1 316.0,40.6 316.5,40.4 317.0,40.1 317.5,39.9 318.0,40.5 318.5,40.8 319.0,40.4 319.5,39.8 320.0,39.8 320.5,39.9 321.0,40.0 321.5,39.8 322.0,39.9 322.5,40.5 323.0,40.7 323,48 323,0 0,0" fill="none"/><polygon points="0,0 0,40.5 0.0,40.0 0.5,40.3 1.0,40.2 1.5,40.4 2.0,40.4 2.5,39.9 3.0,39.8 3.5,40.6 4.0,40.1 4.5,40.0 5.0,40.8 5.5,40.3 6.0,40.6 6.5,40.3 7.0,40.4 7.5,40.0 8.0,40.4 8.5,40.7 9.0,40.3 9.5,40.5 10.0,40.5 10.5,39.9 11.0,40.6 11.5,40.4 12.0,40.1 12.5,39.8 13.0,40.7 13.5,40.3 14.0,40.5 14.5,40.7 15.0,40.5 15.5,40.7 16.0,40.2 16.5,40.6 17.0,40.2 17.5,40.7 18.0,40.7 18.5,39.9 19.0,39.9 19.5,40.0 20.0,40.8 20.5,40.2 21.0,40.4 21.5,40.1 22.0,40.3 22.5,40.2 23.0,40.2 23.5,40.4 24.0,40.4 24.5,40.7 25.0,40.5 25.5,40.7 26.0,40.7 26.5,40.8 27.0,40.5 27.5,40.0 28.0,40.7 28.5,40.8 29.0,40.7 29.5,40.4 30.0,40.5 30.5,40.0 31.0,40.6 31.5,40.4 32.0,40.1 32.5,39.9 33.0,40.7 33.5,40.8 34.0,39.9 34.5,40.6 35.0,40.2 35.5,40.0 36.0,40.1 36.5,40.6 37.0,40.7 37.5,39.8 38.0,40.4 38.5,39.8 39.0,40.5 39.5,40.1 40.0,40.7 40.5,40.8 41.0,40.3 41.5,40.8 42.0,40.1 42.5,39.9 43.0,40.4 43.5,39.8 44.0,40.0 44.5,40.2 45.0,40.4 45.5,40.0 46.0,39.8 46.5,40.7 47.0,40.1 47.5,40.8 48.0,40.7 48.5,40.2 49.0,40.3 49.5,40.3 50.0,40.4 50.5,40.4 51.0,40.4 51.5,40.4 52.0,40.7 52.5,40.3 53.0,40.2 53.5,40.5 54.0,40.0 54.5,40.1 55.0,40.8 55.5,40.3 56.0,40.3 56.5,39.8 57.0,40.2 57.5,40.4 58.0,39.8 58.5,40.4 59.0,40.4 59.5,39.9 60.0,40.4 60.5,40.3 61.0,40.5 61.5,40.2 62.0,40.5 62.5,40.5 63.0,39.8 63.5,39.9 64.0,40.5 64.5,40.8 65.0,40.1 65.5,40.3 66.0,40.4 66.5,40.1 67.0,40.2 67.5,40.1 68.0,40.2 68.5,40.4 69.0,40.1 69.5,40.2 70.0,40.6 70.5,39.8 71.0,40.4 71.5,40.5 72.0,40.1 72.5,40.0 73.0,40.6 73.5,40.0 74.0,40.0 74.5,40.2 75.0,40.5 75.5,39.9 76.0,40.1 76.5,40.1 77.0,40.6 77.5,40.2 78.0,40.7 78.5,40.0 79.0,40.1 79.5,40.5 80.0,40.7 80.5,40.3 81.0,40.0 81.5,39.9 82.0,40.3 82.5,40.0 83.0,40.6 83.5,40.6 84.0,40.0 84.5,40.1 85.0,40.6 85.5,40.4 86.0,40.6 86.5,40.1 87.0,39.9 87.5,40.1 88.0,40.6 88.5,40.1 89.0,40.1 89.5,40.2 90.0,40.2 90.5,40.2 91.0,40.7 91.5,40.0 92.0,39.8 92.5,40.7 93.0,40.7 93.5,40.8 94.0,40.2 94.5,40.8 95.0,40.7 95.5,40.0 96.0,40.5 96.5,40.6 97.0,40.5 97.5,40.3 98.0,40.1 98.5,40.1 99.0,40.0 99.5,39.9 100.0,40.4 100.5,40.1 101.0,40.6 101.5,39.8 102.0,40.7 102.5,40.5 103.0,40.7 103.5,40.7 104.0,40.7 104.5,40.4 105.0,39.8 105.5,40.5 106.0,40.0 106.5,40.1 107.0,40.5 107.5,40.3 108.0,40.2 108.5,40.7 109.0,40.4 109.5,40.1 110.0,40.1 110.5,40.7 111.0,40.3 111.5,40.6 112.0,40.2 112.5,40.0 113.0,40.3 113.5,40.6 114.0,40.0 114.5,40.6 115.0,40.7 115.5,40.6 116.0,40.6 116.5,39.8 117.0,40.4 117.5,40.7 118.0,39.8 118.5,40.1 119.0,40.1 119.5,40.3 120.0,40.2 120.5,40.3 121.0,40.6 121.5,39.8 122.0,39.9 122.5,39.9 123.0,39.9 123.5,39.9 124.0,40.8 124.5,40.6 125.0,39.9 125.5,40.3 126.0,40.1 126.5,40.1 127.0,40.1 127.5,40.3 128.0,40.2 128.5,39.9 129.0,39.6 129.5,39.6 130.0,39.2 130.5,39.4 131.0,39.3 131.5,38.7 132.0,38.1 132.5,37.9 133.0,37.7 133.5,37.6 134.0,37.2 134.5,34.8 135.0,30.4 135.5,25.0 136.0,25.6 136.5,31.1 137.0,35.5 137.5,37.3 138.0,37.5 138.5,38.1 139.0,38.2 139.5,38.3 140.0,38.9 140.5,39.4 141.0,39.0 141.5,39.6 142.0,39.7 142.5,40.3 143.0,40.5 143.5,40.0 144.0,40.6 144.5,40.5 145.0,40.0 145.5,40.2 146.0,39.9 146.5,40.6 147.0,40.5 147.5,40.7 148.0,40.6 148.5,40.5 149.0,40.5 149.5,40.4 150.0,39.9 150.5,40.4 151.0,39.8 151.5,39.9 152.0,40.5 152.5,39.4 153.0,38.7 153.5,37.4 154.0,36.8 154.5,35.5 155.0,35.9 155.5,38.2 156.0,38.7 156.5,40.2 157.0,40.4 157.5,40.6 158.0,40.7 158.5,40.4 159.0,40.6 159.5,39.8 160.0,40.6 160.5,40.3 161.0,40.5 161.5,39.9 162.0,40.5 162.5,40.7 163.0,39.9 163.5,40.1 164.0,40.4 164.5,40.6 165.0,40.0 165.5,40.0 166.0,40.0 166.5,40.4 167.0,40.6 167.5,40.2 168.0,40.2 168.5,40.2 169.0,40.2 169.5,40.2 170.0,39.9 170.5,40.3 171.0,40.8 171.5,40.2 172.0,40.5 172.5,40.0 173.0,40.5 173.5,40.6 174.0,40.5 174.5,40.3 175.0,40.3 175.5,40.4 176.0,40.7 176.5,39.9 177.0,39.9 177.5,40.5 178.0,40.7 178.5,40.3 179.0,40.2 179.5,40.5 180.0,40.0 180.5,40.1 181.0,40.0 181.5,40.4 182.0,40.1 182.5,40.0 183.0,40.5 183.5,40.8 184.0,40.1 184.5,40.5 185.0,40.2 185.5,40.7 186.0,40.4 186.5,40.1 187.0,40.0 187.5,39.8 188.0,40.3 188.5,40.2 189.0,40.0 189.5,40.2 190.0,40.1 190.5,40.6 191.0,39.9 191.5,40.8 192.0,40.3 192.5,40.4 193.0,40.3 193.5,40.6 194.0,40.6 194.5,40.4 195.0,40.3 195.5,40.5 196.0,40.7 196.5,40.2 197.0,40.5 197.5,40.8 198.0,40.3 198.5,40.0 199.0,40.0 199.5,40.5 200.0,40.5 200.5,40.8 201.0,40.7 201.5,40.0 202.0,40.0 202.5,40.1 203.0,40.0 203.5,40.5 204.0,40.7 204.5,40.7 205.0,40.1 205.5,40.7 206.0,40.1 206.5,40.2 207.0,40.5 207.5,39.9 208.0,39.9 208.5,40.6 209.0,40.1 209.5,40.2 210.0,40.4 210.5,40.5 211.0,39.8 211.5,40.1 212.0,40.2 212.5,40.3 213.0,40.0 213.5,40.4 214.0,40.8 214.5,40.2 215.0,40.3 215.5,39.9 216.0,40.1 216.5,40.5 217.0,39.9 217.5,40.7 218.0,40.7 218.5,39.9 219.0,40.7 219.5,40.1 220.0,40.4 220.5,40.4 221.0,39.8 221.5,40.1 222.0,39.9 222.5,39.9 223.0,39.1 223.5,39.4 224.0,39.4 224.5,38.8 225.0,38.5 225.5,37.9 226.0,38.2 226.5,38.0 227.0,38.3 227.5,38.4 228.0,38.4 228.5,38.2 229.0,38.9 229.5,39.1 230.0,38.9 230.5,39.8 231.0,39.8 231.5,39.4 232.0,40.4 232.5,39.7 233.0,39.9 233.5,40.4 234.0,40.3 234.5,40.3 235.0,40.4 235.5,40.2 236.0,40.1 236.5,39.9 237.0,39.8 237.5,40.4 238.0,40.4 238.5,40.2 239.0,40.3 239.5,39.9 240.0,39.7 240.5,39.7 241.0,40.1 241.5,39.2 242.0,39.5 242.5,39.1 243.0,39.5 243.5,39.0 244.0,38.8 244.5,38.6 245.0,37.4 245.5,34.3 246.0,31.6 246.5,34.4 247.0,37.0 247.5,38.5 248.0,38.6 248.5,38.7 249.0,39.5 249.5,39.5 250.0,39.1 250.5,39.1 251.0,39.4 251.5,39.8 252.0,39.8 252.5,39.7 253.0,39.5 253.5,39.0 254.0,39.1 254.5,38.8 255.0,39.0 255.5,38.9 256.0,38.4 256.5,38.4 257.0,38.8 257.5,38.0 258.0,38.8 258.5,38.9 259.0,39.0 259.5,38.5 260.0,38.8 260.5,38.9 261.0,39.1 261.5,39.6 262.0,39.4 262.5,39.1 263.0,39.7 263.5,39.4 264.0,39.5 264.5,39.6 265.0,38.9 265.5,39.6 266.0,39.4 266.5,39.1 267.0,39.1 267.5,39.0 268.0,38.8 268.5,39.1 269.0,38.7 269.5,39.2 270.0,39.5 270.5,39.4 271.0,39.7 271.5,40.2 272.0,40.2 272.5,39.6 273.0,40.3 273.5,40.2 274.0,39.7 274.5,40.1 275.0,40.0 275.5,39.8 276.0,40.3 276.5,40.7 277.0,40.1 277.5,40.7 278.0,40.5 278.5,39.9 279.0,40.7 279.5,40.4 280.0,40.7 280.5,40.5 281.0,40.5 281.5,40.1 282.0,40.6 282.5,40.7 283.0,40.7 283.5,40.2 284.0,40.6 284.5,40.3 285.0,39.9 285.5,39.8 286.0,39.9 286.5,40.0 287.0,40.0 287.5,40.3 288.0,40.5 288.5,40.3 289.0,40.2 289.5,40.4 290.0,40.1 290.5,40.3 291.0,40.6 291.5,40.2 292.0,40.0 292.5,40.7 293.0,40.5 293.5,40.2 294.0,40.2 294.5,40.3 295.0,40.4 295.5,40.0 296.0,39.8 296.5,40.0 297.0,40.6 297.5,39.9 298.0,40.3 298.5,40.0 299.0,40.0 299.5,40.0 300.0,40.2 300.5,40.0 301.0,39.8 301.5,39.9 302.0,40.0 302.5,40.3 303.0,39.9 303.5,39.8 304.0,40.2 304.5,40.2 305.0,40.5 305.5,39.9 306.0,40.2 306.5,40.2 307.0,39.8 307.5,40.8 308.0,40.0 308.5,39.9 309.0,40.3 309.5,40.0 310.0,40.4 310.5,40.1 311.0,39.9 311.5,39.9 312.0,40.5 312.5,40.1 313.0,40.6 313.5,40.3 314.0,40.7 314.5,40.1 315.0,40.0 315.5,40.1 316.0,40.6 316.5,40.4 317.0,40.1 317.5,39.9 318.0,40.5 318.5,40.8 319.0,40.4 319.5,39.8 320.0,39.8 320.5,39.9 321.0,40.0 321.5,39.8 322.0,39.9 322.5,40.5 323.0,40.7 323,0" fill="#f4f4f4"/><rect x="132" y="0" width="55" height="38" fill="#fcfcfc"/><path d="M7 4.6H132M187 4.6H318" stroke="#d6d6d6" stroke-width="0.9"/><path d="M7 10.0H132M187 10.0H318" stroke="#d6d6d6" stroke-width="0.9"/><path d="M7 15.4H132M187 15.4H318" stroke="#d6d6d6" stroke-width="0.9"/><path d="M7 20.800000000000004H132M187 20.800000000000004H318" stroke="#d6d6d6" stroke-width="0.9"/><path d="M7 26.200000000000003H132M187 26.200000000000003H318" stroke="#d6d6d6" stroke-width="0.9"/><path d="M7 31.6H132M187 31.6H318" stroke="#d6d6d6" stroke-width="0.9"/><path d="M7 37.00000000000001H132M187 37.00000000000001H318" stroke="#d6d6d6" stroke-width="0.9"/><path d="M46 4V38" stroke="#cfcfcf" stroke-width="0.7" stroke-dasharray="1.5 2"/><path d="M97.5 4V38" stroke="#cfcfcf" stroke-width="0.7" stroke-dasharray="1.5 2"/><path d="M238 4V38" stroke="#cfcfcf" stroke-width="0.7" stroke-dasharray="1.5 2"/><path d="M290 4V38" stroke="#cfcfcf" stroke-width="0.7" stroke-dasharray="1.5 2"/><path d="M316 4V38" stroke="#cfcfcf" stroke-width="0.7" stroke-dasharray="1.5 2"/><polyline points="0.0,40.0 0.5,40.3 1.0,40.2 1.5,40.4 2.0,40.4 2.5,39.9 3.0,39.8 3.5,40.6 4.0,40.1 4.5,40.0 5.0,40.8 5.5,40.3 6.0,40.6 6.5,40.3 7.0,40.4 7.5,40.0 8.0,40.4 8.5,40.7 9.0,40.3 9.5,40.5 10.0,40.5 10.5,39.9 11.0,40.6 11.5,40.4 12.0,40.1 12.5,39.8 13.0,40.7 13.5,40.3 14.0,40.5 14.5,40.7 15.0,40.5 15.5,40.7 16.0,40.2 16.5,40.6 17.0,40.2 17.5,40.7 18.0,40.7 18.5,39.9 19.0,39.9 19.5,40.0 20.0,40.8 20.5,40.2 21.0,40.4 21.5,40.1 22.0,40.3 22.5,40.2 23.0,40.2 23.5,40.4 24.0,40.4 24.5,40.7 25.0,40.5 25.5,40.7 26.0,40.7 26.5,40.8 27.0,40.5 27.5,40.0 28.0,40.7 28.5,40.8 29.0,40.7 29.5,40.4 30.0,40.5 30.5,40.0 31.0,40.6 31.5,40.4 32.0,40.1 32.5,39.9 33.0,40.7 33.5,40.8 34.0,39.9 34.5,40.6 35.0,40.2 35.5,40.0 36.0,40.1 36.5,40.6 37.0,40.7 37.5,39.8 38.0,40.4 38.5,39.8 39.0,40.5 39.5,40.1 40.0,40.7 40.5,40.8 41.0,40.3 41.5,40.8 42.0,40.1 42.5,39.9 43.0,40.4 43.5,39.8 44.0,40.0 44.5,40.2 45.0,40.4 45.5,40.0 46.0,39.8 46.5,40.7 47.0,40.1 47.5,40.8 48.0,40.7 48.5,40.2 49.0,40.3 49.5,40.3 50.0,40.4 50.5,40.4 51.0,40.4 51.5,40.4 52.0,40.7 52.5,40.3 53.0,40.2 53.5,40.5 54.0,40.0 54.5,40.1 55.0,40.8 55.5,40.3 56.0,40.3 56.5,39.8 57.0,40.2 57.5,40.4 58.0,39.8 58.5,40.4 59.0,40.4 59.5,39.9 60.0,40.4 60.5,40.3 61.0,40.5 61.5,40.2 62.0,40.5 62.5,40.5 63.0,39.8 63.5,39.9 64.0,40.5 64.5,40.8 65.0,40.1 65.5,40.3 66.0,40.4 66.5,40.1 67.0,40.2 67.5,40.1 68.0,40.2 68.5,40.4 69.0,40.1 69.5,40.2 70.0,40.6 70.5,39.8 71.0,40.4 71.5,40.5 72.0,40.1 72.5,40.0 73.0,40.6 73.5,40.0 74.0,40.0 74.5,40.2 75.0,40.5 75.5,39.9 76.0,40.1 76.5,40.1 77.0,40.6 77.5,40.2 78.0,40.7 78.5,40.0 79.0,40.1 79.5,40.5 80.0,40.7 80.5,40.3 81.0,40.0 81.5,39.9 82.0,40.3 82.5,40.0 83.0,40.6 83.5,40.6 84.0,40.0 84.5,40.1 85.0,40.6 85.5,40.4 86.0,40.6 86.5,40.1 87.0,39.9 87.5,40.1 88.0,40.6 88.5,40.1 89.0,40.1 89.5,40.2 90.0,40.2 90.5,40.2 91.0,40.7 91.5,40.0 92.0,39.8 92.5,40.7 93.0,40.7 93.5,40.8 94.0,40.2 94.5,40.8 95.0,40.7 95.5,40.0 96.0,40.5 96.5,40.6 97.0,40.5 97.5,40.3 98.0,40.1 98.5,40.1 99.0,40.0 99.5,39.9 100.0,40.4 100.5,40.1 101.0,40.6 101.5,39.8 102.0,40.7 102.5,40.5 103.0,40.7 103.5,40.7 104.0,40.7 104.5,40.4 105.0,39.8 105.5,40.5 106.0,40.0 106.5,40.1 107.0,40.5 107.5,40.3 108.0,40.2 108.5,40.7 109.0,40.4 109.5,40.1 110.0,40.1 110.5,40.7 111.0,40.3 111.5,40.6 112.0,40.2 112.5,40.0 113.0,40.3 113.5,40.6 114.0,40.0 114.5,40.6 115.0,40.7 115.5,40.6 116.0,40.6 116.5,39.8 117.0,40.4 117.5,40.7 118.0,39.8 118.5,40.1 119.0,40.1 119.5,40.3 120.0,40.2 120.5,40.3 121.0,40.6 121.5,39.8 122.0,39.9 122.5,39.9 123.0,39.9 123.5,39.9 124.0,40.8 124.5,40.6 125.0,39.9 125.5,40.3 126.0,40.1 126.5,40.1 127.0,40.1 127.5,40.3 128.0,40.2 128.5,39.9 129.0,39.6 129.5,39.6 130.0,39.2 130.5,39.4 131.0,39.3 131.5,38.7 132.0,38.1 132.5,37.9 133.0,37.7 133.5,37.6 134.0,37.2 134.5,34.8 135.0,30.4 135.5,25.0 136.0,25.6 136.5,31.1 137.0,35.5 137.5,37.3 138.0,37.5 138.5,38.1 139.0,38.2 139.5,38.3 140.0,38.9 140.5,39.4 141.0,39.0 141.5,39.6 142.0,39.7 142.5,40.3 143.0,40.5 143.5,40.0 144.0,40.6 144.5,40.5 145.0,40.0 145.5,40.2 146.0,39.9 146.5,40.6 147.0,40.5 147.5,40.7 148.0,40.6 148.5,40.5 149.0,40.5 149.5,40.4 150.0,39.9 150.5,40.4 151.0,39.8 151.5,39.9 152.0,40.5 152.5,39.4 153.0,38.7 153.5,37.4 154.0,36.8 154.5,35.5 155.0,35.9 155.5,38.2 156.0,38.7 156.5,40.2 157.0,40.4 157.5,40.6 158.0,40.7 158.5,40.4 159.0,40.6 159.5,39.8 160.0,40.6 160.5,40.3 161.0,40.5 161.5,39.9 162.0,40.5 162.5,40.7 163.0,39.9 163.5,40.1 164.0,40.4 164.5,40.6 165.0,40.0 165.5,40.0 166.0,40.0 166.5,40.4 167.0,40.6 167.5,40.2 168.0,40.2 168.5,40.2 169.0,40.2 169.5,40.2 170.0,39.9 170.5,40.3 171.0,40.8 171.5,40.2 172.0,40.5 172.5,40.0 173.0,40.5 173.5,40.6 174.0,40.5 174.5,40.3 175.0,40.3 175.5,40.4 176.0,40.7 176.5,39.9 177.0,39.9 177.5,40.5 178.0,40.7 178.5,40.3 179.0,40.2 179.5,40.5 180.0,40.0 180.5,40.1 181.0,40.0 181.5,40.4 182.0,40.1 182.5,40.0 183.0,40.5 183.5,40.8 184.0,40.1 184.5,40.5 185.0,40.2 185.5,40.7 186.0,40.4 186.5,40.1 187.0,40.0 187.5,39.8 188.0,40.3 188.5,40.2 189.0,40.0 189.5,40.2 190.0,40.1 190.5,40.6 191.0,39.9 191.5,40.8 192.0,40.3 192.5,40.4 193.0,40.3 193.5,40.6 194.0,40.6 194.5,40.4 195.0,40.3 195.5,40.5 196.0,40.7 196.5,40.2 197.0,40.5 197.5,40.8 198.0,40.3 198.5,40.0 199.0,40.0 199.5,40.5 200.0,40.5 200.5,40.8 201.0,40.7 201.5,40.0 202.0,40.0 202.5,40.1 203.0,40.0 203.5,40.5 204.0,40.7 204.5,40.7 205.0,40.1 205.5,40.7 206.0,40.1 206.5,40.2 207.0,40.5 207.5,39.9 208.0,39.9 208.5,40.6 209.0,40.1 209.5,40.2 210.0,40.4 210.5,40.5 211.0,39.8 211.5,40.1 212.0,40.2 212.5,40.3 213.0,40.0 213.5,40.4 214.0,40.8 214.5,40.2 215.0,40.3 215.5,39.9 216.0,40.1 216.5,40.5 217.0,39.9 217.5,40.7 218.0,40.7 218.5,39.9 219.0,40.7 219.5,40.1 220.0,40.4 220.5,40.4 221.0,39.8 221.5,40.1 222.0,39.9 222.5,39.9 223.0,39.1 223.5,39.4 224.0,39.4 224.5,38.8 225.0,38.5 225.5,37.9 226.0,38.2 226.5,38.0 227.0,38.3 227.5,38.4 228.0,38.4 228.5,38.2 229.0,38.9 229.5,39.1 230.0,38.9 230.5,39.8 231.0,39.8 231.5,39.4 232.0,40.4 232.5,39.7 233.0,39.9 233.5,40.4 234.0,40.3 234.5,40.3 235.0,40.4 235.5,40.2 236.0,40.1 236.5,39.9 237.0,39.8 237.5,40.4 238.0,40.4 238.5,40.2 239.0,40.3 239.5,39.9 240.0,39.7 240.5,39.7 241.0,40.1 241.5,39.2 242.0,39.5 242.5,39.1 243.0,39.5 243.5,39.0 244.0,38.8 244.5,38.6 245.0,37.4 245.5,34.3 246.0,31.6 246.5,34.4 247.0,37.0 247.5,38.5 248.0,38.6 248.5,38.7 249.0,39.5 249.5,39.5 250.0,39.1 250.5,39.1 251.0,39.4 251.5,39.8 252.0,39.8 252.5,39.7 253.0,39.5 253.5,39.0 254.0,39.1 254.5,38.8 255.0,39.0 255.5,38.9 256.0,38.4 256.5,38.4 257.0,38.8 257.5,38.0 258.0,38.8 258.5,38.9 259.0,39.0 259.5,38.5 260.0,38.8 260.5,38.9 261.0,39.1 261.5,39.6 262.0,39.4 262.5,39.1 263.0,39.7 263.5,39.4 264.0,39.5 264.5,39.6 265.0,38.9 265.5,39.6 266.0,39.4 266.5,39.1 267.0,39.1 267.5,39.0 268.0,38.8 268.5,39.1 269.0,38.7 269.5,39.2 270.0,39.5 270.5,39.4 271.0,39.7 271.5,40.2 272.0,40.2 272.5,39.6 273.0,40.3 273.5,40.2 274.0,39.7 274.5,40.1 275.0,40.0 275.5,39.8 276.0,40.3 276.5,40.7 277.0,40.1 277.5,40.7 278.0,40.5 278.5,39.9 279.0,40.7 279.5,40.4 280.0,40.7 280.5,40.5 281.0,40.5 281.5,40.1 282.0,40.6 282.5,40.7 283.0,40.7 283.5,40.2 284.0,40.6 284.5,40.3 285.0,39.9 285.5,39.8 286.0,39.9 286.5,40.0 287.0,40.0 287.5,40.3 288.0,40.5 288.5,40.3 289.0,40.2 289.5,40.4 290.0,40.1 290.5,40.3 291.0,40.6 291.5,40.2 292.0,40.0 292.5,40.7 293.0,40.5 293.5,40.2 294.0,40.2 294.5,40.3 295.0,40.4 295.5,40.0 296.0,39.8 296.5,40.0 297.0,40.6 297.5,39.9 298.0,40.3 298.5,40.0 299.0,40.0 299.5,40.0 300.0,40.2 300.5,40.0 301.0,39.8 301.5,39.9 302.0,40.0 302.5,40.3 303.0,39.9 303.5,39.8 304.0,40.2 304.5,40.2 305.0,40.5 305.5,39.9 306.0,40.2 306.5,40.2 307.0,39.8 307.5,40.8 308.0,40.0 308.5,39.9 309.0,40.3 309.5,40.0 310.0,40.4 310.5,40.1 311.0,39.9 311.5,39.9 312.0,40.5 312.5,40.1 313.0,40.6 313.5,40.3 314.0,40.7 314.5,40.1 315.0,40.0 315.5,40.1 316.0,40.6 316.5,40.4 317.0,40.1 317.5,39.9 318.0,40.5 318.5,40.8 319.0,40.4 319.5,39.8 320.0,39.8 320.5,39.9 321.0,40.0 321.5,39.8 322.0,39.9 322.5,40.5 323.0,40.7" fill="none" stroke="#666" stroke-width="0.8"/><path d="M117.5 0V41" stroke="#9a8f8f" stroke-width="0.9"/><path d="M205.5 0V41" stroke="#b39c9c" stroke-width="0.9"/><path d="M161.5 3V40" stroke="#b4b4b4" stroke-width="0.8" stroke-dasharray="1.2 1"/><path d="M161.5 8l-4.5 15M161.5 8l4.5 15M158.3 18.5h6.4" fill="none" stroke="#a4a4a4" stroke-width="0.9"/><path d="M161.5 4V24" stroke="#a4a4a4" stroke-width="0.9"/></svg>
<div class="l b" style="left:208.5px;top:261.5px;font-family:'Liberation Serif',serif;font-size:12.5px;color:#c6c6c6;letter-spacing:2.1px">415.653<span style="font-size:9.5px;letter-spacing:1.9px">.000</span></div>
<div class="t b" style="left:237.7px;top:307px;font-size:8.40px;color:#fff;transform:translateX(-50%) scaleX(1.17)">415.640</div>
<div class="t b" style="left:328.7px;top:307px;font-size:8.40px;color:#fff;transform:translateX(-50%) scaleX(1.17)">415.650</div>
<div class="t b" style="left:418.4px;top:307px;font-size:8.40px;color:#fff;transform:translateX(-50%) scaleX(1.17)">415.660</div>
<div class="a" style="left:489px;top:307px;width:27px;height:9px;overflow:hidden"><div class="l b" style="left:1px;top:0px;font-size:8.4px;color:#fff;transform-origin:0 0;transform:scaleX(1.17)">415.670</div></div>
<div class="a" style="left:193px;top:315.5px;width:323px;height:4.5px;background:#fbfbfb"></div>
<svg class="a" style="left:193px;top:320px" width="323" height="86" viewBox="0 0 323 86"><defs><filter id="bl" x="-20%" y="-20%" width="140%" height="140%"><feGaussianBlur stdDeviation="1.2"/></filter><filter id="bl2" x="-50%" y="-10%" width="200%" height="120%"><feGaussianBlur stdDeviation="2.2 0.5"/></filter><linearGradient id="colg" x1="0" y1="0" x2="0" y2="1"><stop offset="0" stop-color="#1a2fd0" stop-opacity="0.9"/><stop offset="0.15" stop-color="#1428b0" stop-opacity="0.55"/><stop offset="0.8" stop-color="#1428b0" stop-opacity="0.5"/><stop offset="1" stop-color="#0a1570" stop-opacity="0.3"/></linearGradient></defs><rect width="323" height="86" fill="#040408"/><rect x="129" y="0" width="14" height="86" fill="url(#colg)" filter="url(#bl2)"/><rect x="226.5" y="0" width="7" height="86" fill="#1a2fc0" opacity="0.8" filter="url(#bl2)"/><rect x="254" y="0" width="9" height="86" fill="#1a2fc0" opacity="0.8" filter="url(#bl2)"/><rect x="245.6" y="0" width="1.2" height="86" fill="#3aa6c8"/><ellipse cx="136" cy="15" rx="35.0" ry="3.2" fill="#1838d8" opacity="0.95" filter="url(#bl)"/><ellipse cx="136" cy="15" rx="20.58823529411765" ry="2.2" fill="#25a6e0" opacity="0.9" filter="url(#bl)"/><ellipse cx="136" cy="15" rx="10.0" ry="1.8" fill="#5fe08a" opacity="0.9" filter="url(#bl)"/><ellipse cx="136" cy="24.6" rx="30.0" ry="3.2" fill="#1838d8" opacity="0.95" filter="url(#bl)"/><ellipse cx="136" cy="24.6" rx="17.647058823529413" ry="2.2" fill="#25a6e0" opacity="0.9" filter="url(#bl)"/><ellipse cx="136" cy="24.6" rx="8.571428571428571" ry="1.8" fill="#5fe08a" opacity="0.9" filter="url(#bl)"/><ellipse cx="136" cy="34.7" rx="35.0" ry="3.2" fill="#1838d8" opacity="0.95" filter="url(#bl)"/><ellipse cx="136" cy="34.7" rx="20.58823529411765" ry="2.2" fill="#25a6e0" opacity="0.9" filter="url(#bl)"/><ellipse cx="136" cy="34.7" rx="10.0" ry="1.8" fill="#5fe08a" opacity="0.9" filter="url(#bl)"/><ellipse cx="136" cy="43.4" rx="29.0" ry="3.2" fill="#1838d8" opacity="0.95" filter="url(#bl)"/><ellipse cx="136" cy="43.4" rx="17.058823529411764" ry="2.2" fill="#25a6e0" opacity="0.9" filter="url(#bl)"/><ellipse cx="136" cy="43.4" rx="8.285714285714286" ry="1.8" fill="#5fe08a" opacity="0.9" filter="url(#bl)"/><ellipse cx="136" cy="52" rx="36.0" ry="3.2" fill="#1838d8" opacity="0.95" filter="url(#bl)"/><ellipse cx="136" cy="52" rx="21.176470588235293" ry="2.2" fill="#25a6e0" opacity="0.9" filter="url(#bl)"/><ellipse cx="136" cy="52" rx="10.285714285714286" ry="1.8" fill="#5fe08a" opacity="0.9" filter="url(#bl)"/><rect x="135.3" y="0" width="1.4" height="86" fill="#f4e9a8"/><rect x="134.3" y="0" width="3.4" height="86" fill="#7fd7d0" opacity="0.35"/><defs><linearGradient id="smg" x1="0" y1="0" x2="1" y2="0"><stop offset="0" stop-color="#fff"/><stop offset="0.55" stop-color="#f4f0d0"/><stop offset="1" stop-color="#e8cc50"/></linearGradient></defs><path d="M8 53H98" stroke="#d8c020" stroke-width="0.8"/><path d="M8.0 51.2v1.8" stroke="#d8c020" stroke-width="0.6"/><path d="M19.2 51.2v1.8" stroke="#d8c020" stroke-width="0.6"/><path d="M30.4 51.2v1.8" stroke="#d8c020" stroke-width="0.6"/><path d="M41.6 51.2v1.8" stroke="#d8c020" stroke-width="0.6"/><path d="M52.8 51.2v1.8" stroke="#d8c020" stroke-width="0.6"/><path d="M64.0 51.2v1.8" stroke="#d8c020" stroke-width="0.6"/><path d="M75.2 51.2v1.8" stroke="#d8c020" stroke-width="0.6"/><path d="M86.4 51.2v1.8" stroke="#d8c020" stroke-width="0.6"/><path d="M97.6 51.2v1.8" stroke="#d8c020" stroke-width="0.6"/><rect x="8" y="55" width="38" height="2.6" fill="url(#smg)"/><path d="M47 58.8H98" stroke="#d8402a" stroke-width="0.8"/></svg>
<div class="l b" style="left:204px;top:366px;font-size:3.30px;color:#d8c020;">+60&nbsp;&nbsp;&nbsp;&nbsp;&nbsp;&nbsp;+50&nbsp;&nbsp;&nbsp;&nbsp;&nbsp;&nbsp;+40&nbsp;&nbsp;&nbsp;&nbsp;&nbsp;&nbsp;+30&nbsp;&nbsp;&nbsp;&nbsp;&nbsp;&nbsp;&nbsp;+20&nbsp;&nbsp;&nbsp;&nbsp;&nbsp;&nbsp;&nbsp;+10&nbsp;&nbsp;&nbsp;&nbsp;&nbsp;&nbsp;&nbsp;9</div>
<div class="l b" style="left:200.5px;top:379.3px;font-size:3.40px;color:#eee;">s&nbsp;&nbsp;1&nbsp;&nbsp;&nbsp;3&nbsp;&nbsp;&nbsp;5&nbsp;&nbsp;&nbsp;7&nbsp;&nbsp;&nbsp;9</div>
<div class="l b" style="left:251px;top:379.3px;font-size:3.40px;color:#e0503a;">+20&nbsp;&nbsp;&nbsp;&nbsp;&nbsp;+40&nbsp;&nbsp;&nbsp;&nbsp;&nbsp;+60</div>
<div class="t b" style="left:243.8px;top:390px;font-size:7.20px;color:#fff;">-74 dBm</div>
<div class="a" style="left:193px;top:406px;width:323px;height:2px;background:#f0f0f0"></div>
<div class="a" style="left:519.5px;top:233.5px;width:268.5px;height:174px;background:#f3f3f3"></div>
<div class="a" style="left:519.5px;top:234.5px;width:268.5px;height:10.5px;background:linear-gradient(#e0e7f0,#d4deea)"></div>
<div class="l" style="left:521.3px;top:237px;font-size:6.25px;color:#525b69;letter-spacing:0.22px;">Satellite Tracking</div>
<div class="l b" style="left:758.5px;top:236.5px;font-size:7.00px;color:#222;">▾</div>
<svg class="a" style="left:769px;top:236px" width="18" height="8" viewBox="0 0 18 8"><path d="M2.2 2h2.4v2.8H2.2zM1.5 4.9h3.8M3.4 4.9v1.8" stroke="#222" stroke-width="0.9" fill="none"/><path d="M11 1.5l4 4.5M15 1.5l-4 4.5" stroke="#222" stroke-width="1.1"/></svg>
<div class="a" style="left:523.5px;top:251px;width:15.5px;height:14px;background:linear-gradient(#fafafa,#e6e6e6);border:1px solid #c2c2c2;border-radius:2px;border-color:#a8a8a8;background:linear-gradient(#f0f0f0,#d8d8d8)"></div>
<div class="a" style="left:547px;top:251px;width:60px;height:14px;background:linear-gradient(#fafafa,#e6e6e6);border:1px solid #c2c2c2;border-radius:2px;"></div>
<div class="a" style="left:610px;top:251px;width:59px;height:14px;background:linear-gradient(#fafafa,#e6e6e6);border:1px solid #c2c2c2;border-radius:2px;"></div>
<div class="a" style="left:672.5px;top:251px;width:60.5px;height:14px;background:linear-gradient(#fafafa,#e6e6e6);border:1px solid #c2c2c2;border-radius:2px;border-color:#999;background:linear-gradient(#eee,#cfcfcf)"></div>
<div class="a" style="left:741px;top:251px;width:22px;height:14px;background:linear-gradient(#fafafa,#e6e6e6);border:1px solid #c2c2c2;border-radius:2px;border-color:#999;background:linear-gradient(#eee,#d2d2d2)"></div>
<div class="a" style="left:765px;top:251px;width:20px;height:14px;background:linear-gradient(#fafafa,#e6e6e6);border:1px solid #c2c2c2;border-radius:2px;border-color:#999;background:linear-gradient(#eee,#d2d2d2)"></div>
<div class="a" style="left:543px;top:252px;width:1px;height:12px;background:#e2e2e2"></div>
<div class="a" style="left:737px;top:252px;width:1px;height:12px;background:#d8d8d8"></div>
<svg class="a" style="left:519px;top:250px" width="269" height="16" viewBox="0 0 269 16"><circle cx="12.2" cy="8.3" r="2.6" fill="none" stroke="#444" stroke-width="1"/><path d="M12.2 4.6v3" stroke="#444" stroke-width="1.1"/><path d="M35 4l6 8h-6l6-8z" fill="none" stroke="#888" stroke-width="0.8"/><path d="M99 4v7l2-1.6 1.5 3 1-.5-1.4-2.8h2.4z" fill="#fff" stroke="#777" stroke-width="0.7"/><rect x="159" y="3.5" width="10" height="10" rx="1.5" fill="#222"/><circle cx="164" cy="8.5" r="3.4" fill="#f6f6f6"/><path d="M164 8.5V6.3M164 8.5h1.6" stroke="#222" stroke-width="0.6"/><rect x="228" y="5.5" width="10" height="7" rx="1" fill="#222"/><rect x="231" y="4" width="4" height="2" fill="#222"/><circle cx="233" cy="9" r="2" fill="#e8e8e8"/><circle cx="256" cy="8.5" r="3.6" fill="#444"/><circle cx="256" cy="8.5" r="4.3" fill="none" stroke="#444" stroke-width="1.6" stroke-dasharray="1.6 1.75"/><circle cx="256" cy="8.5" r="1.4" fill="#ddd"/></svg>
<div class="t" style="left:583px;top:254.5px;font-size:6.30px;color:#999;letter-spacing:0.22px;">Auto Track</div>
<div class="t" style="left:645px;top:254.5px;font-size:6.30px;color:#999;letter-spacing:0.22px;">Satellite</div>
<div class="t b" style="left:709px;top:254.5px;font-size:6.30px;color:#222;letter-spacing:0.15px;">Passes</div>
<svg class="a" style="left:538.4px;top:267.6px" width="229.4" height="120" viewBox="0 0 229.4 120"><defs><clipPath id="mc"><rect x="0" y="0" width="229.4" height="120"/></clipPath><filter id="mb"><feGaussianBlur stdDeviation="0.5"/></filter><radialGradient id="rg"><stop offset="0" stop-color="#16453f"/><stop offset="1" stop-color="#0b2a28"/></radialGradient><linearGradient id="bb" x1="0" y1="0" x2="0" y2="1"><stop offset="0" stop-color="#6e6e6e"/><stop offset="0.3" stop-color="#262626"/><stop offset="1" stop-color="#000"/></linearGradient></defs><g clip-path="url(#mc)"><rect width="229.4" height="120" fill="#82acce"/><g filter="url(#mb)"><polygon points="-423.1,14.3 -415.5,11.3 -405.3,11.9 -395.7,11.9 -386.2,13.1 -376.6,12.5 -372.1,13.1 -368.3,16.1 -375.3,17.8 -374.7,19.6 -368.3,22.0 -366.4,22.6 -365.1,19.6 -360.7,16.6 -357.5,17.8 -354.3,20.8 -351.7,22.6 -357.5,25.0 -354.3,26.2 -358.1,27.3 -360.7,28.5 -363.2,29.7 -364.5,32.7 -367.7,35.1 -367.0,38.0 -368.3,36.9 -369.6,35.7 -373.4,36.3 -376.0,36.3 -377.9,38.0 -377.9,41.0 -374.0,42.8 -371.5,41.0 -371.5,44.0 -369.0,47.6 -366.4,48.1 -365.1,48.7 -367.0,49.3 -370.2,47.6 -374.7,45.2 -377.9,44.0 -383.0,41.6 -386.2,39.2 -387.4,36.3 -389.3,35.1 -390.6,33.9 -393.2,32.7 -395.1,29.7 -395.1,25.6 -397.6,23.2 -400.8,20.2 -405.3,17.8 -410.4,17.2 -413.6,19.0 -418.0,20.2 -421.2,21.4 -418.0,18.4 -421.8,16.6" fill="#d4c68e"/><polygon points="-193.7,14.3 -186.1,11.3 -175.9,11.9 -166.3,11.9 -156.8,13.1 -147.2,12.5 -142.7,13.1 -138.9,16.1 -145.9,17.8 -145.3,19.6 -138.9,22.0 -137.0,22.6 -135.7,19.6 -131.3,16.6 -128.1,17.8 -124.9,20.8 -122.3,22.6 -128.1,25.0 -124.9,26.2 -128.7,27.3 -131.3,28.5 -133.8,29.7 -135.1,32.7 -138.3,35.1 -137.6,38.0 -138.9,36.9 -140.2,35.7 -144.0,36.3 -146.6,36.3 -148.5,38.0 -148.5,41.0 -144.6,42.8 -142.1,41.0 -142.1,44.0 -139.6,47.6 -137.0,48.1 -135.7,48.7 -137.6,49.3 -140.8,47.6 -145.3,45.2 -148.5,44.0 -153.6,41.6 -156.8,39.2 -158.0,36.3 -159.9,35.1 -161.2,33.9 -163.8,32.7 -165.7,29.7 -165.7,25.6 -168.2,23.2 -171.4,20.2 -175.9,17.8 -181.0,17.2 -184.2,19.0 -188.6,20.2 -191.8,21.4 -188.6,18.4 -192.4,16.6" fill="#d4c68e"/><polygon points="35.7,14.3 43.3,11.3 53.5,11.9 63.1,11.9 72.6,13.1 82.2,12.5 86.7,13.1 90.5,16.1 83.5,17.8 84.1,19.6 90.5,22.0 92.4,22.6 93.7,19.6 98.1,16.6 101.3,17.8 104.5,20.8 107.1,22.6 101.3,25.0 104.5,26.2 100.7,27.3 98.1,28.5 95.6,29.7 94.3,32.7 91.1,35.1 91.8,38.0 90.5,36.9 89.2,35.7 85.4,36.3 82.8,36.3 80.9,38.0 80.9,41.0 84.8,42.8 87.3,41.0 87.3,44.0 89.8,47.6 92.4,48.1 93.7,48.7 91.8,49.3 88.6,47.6 84.1,45.2 80.9,44.0 75.8,41.6 72.6,39.2 71.4,36.3 69.5,35.1 68.2,33.9 65.6,32.7 63.7,29.7 63.7,25.6 61.2,23.2 58.0,20.2 53.5,17.8 48.4,17.2 45.2,19.0 40.8,20.2 37.6,21.4 40.8,18.4 37.0,16.6" fill="#d4c68e"/><polygon points="265.1,14.3 272.7,11.3 282.9,11.9 292.5,11.9 302.0,13.1 311.6,12.5 316.1,13.1 319.9,16.1 312.9,17.8 313.5,19.6 319.9,22.0 321.8,22.6 323.1,19.6 327.5,16.6 330.7,17.8 333.9,20.8 336.5,22.6 330.7,25.0 333.9,26.2 330.1,27.3 327.5,28.5 325.0,29.7 323.7,32.7 320.5,35.1 321.2,38.0 319.9,36.9 318.6,35.7 314.8,36.3 312.2,36.3 310.3,38.0 310.3,41.0 314.2,42.8 316.7,41.0 316.7,44.0 319.2,47.6 321.8,48.1 323.1,48.7 321.2,49.3 318.0,47.6 313.5,45.2 310.3,44.0 305.2,41.6 302.0,39.2 300.8,36.3 298.9,35.1 297.6,33.9 295.0,32.7 293.1,29.7 293.1,25.6 290.6,23.2 287.4,20.2 282.9,17.8 277.8,17.2 274.6,19.0 270.2,20.2 267.0,21.4 270.2,18.4 266.4,16.6" fill="#d4c68e"/><polygon points="-351.1,17.8 -344.7,17.8 -341.6,14.9 -330.1,11.9 -328.8,8.3 -332.0,4.8 -344.7,4.2 -354.3,4.8 -360.7,7.1 -354.3,8.9 -351.1,11.9 -349.2,14.9" fill="#d2b88e"/><polygon points="-121.7,17.8 -115.3,17.8 -112.2,14.9 -100.7,11.9 -99.4,8.3 -102.6,4.8 -115.3,4.2 -124.9,4.8 -131.3,7.1 -124.9,8.9 -121.7,11.9 -119.8,14.9" fill="#d2b88e"/><polygon points="107.7,17.8 114.1,17.8 117.2,14.9 128.7,11.9 130.0,8.3 126.8,4.8 114.1,4.2 104.5,4.8 98.1,7.1 104.5,8.9 107.7,11.9 109.6,14.9" fill="#d2b88e"/><polygon points="337.1,17.8 343.5,17.8 346.6,14.9 358.1,11.9 359.4,8.3 356.2,4.8 343.5,4.2 333.9,4.8 327.5,7.1 333.9,8.9 337.1,11.9 339.0,14.9" fill="#d2b88e"/><polygon points="-392.5,10.7 -383.0,10.1 -376.6,8.9 -367.0,8.9 -363.9,10.7 -370.2,11.9 -379.8,11.9 -389.3,11.9" fill="#c3c283"/><polygon points="-163.1,10.7 -153.6,10.1 -147.2,8.9 -137.6,8.9 -134.5,10.7 -140.8,11.9 -150.4,11.9 -159.9,11.9" fill="#c3c283"/><polygon points="66.3,10.7 75.8,10.1 82.2,8.9 91.8,8.9 94.9,10.7 88.6,11.9 79.0,11.9 69.5,11.9" fill="#c3c283"/><polygon points="295.7,10.7 305.2,10.1 311.6,8.9 321.2,8.9 324.3,10.7 318.0,11.9 308.4,11.9 298.9,11.9" fill="#c3c283"/><polygon points="-367.0,10.1 -357.5,13.1 -355.6,14.9 -360.7,16.6 -365.8,14.9 -370.2,11.9" fill="#c3c283"/><polygon points="-137.6,10.1 -128.1,13.1 -126.2,14.9 -131.3,16.6 -136.4,14.9 -140.8,11.9" fill="#c3c283"/><polygon points="91.8,10.1 101.3,13.1 103.2,14.9 98.1,16.6 93.0,14.9 88.6,11.9" fill="#c3c283"/><polygon points="321.2,10.1 330.7,13.1 332.6,14.9 327.5,16.6 322.4,14.9 318.0,11.9" fill="#c3c283"/><polygon points="-373.4,7.7 -363.9,7.7 -355.6,4.8 -370.2,4.2" fill="#c3c283"/><polygon points="-144.0,7.7 -134.5,7.7 -126.2,4.8 -140.8,4.2" fill="#c3c283"/><polygon points="85.4,7.7 94.9,7.7 103.2,4.8 88.6,4.2" fill="#c3c283"/><polygon points="314.8,7.7 324.3,7.7 332.6,4.8 318.0,4.2" fill="#c3c283"/><polygon points="-365.1,48.7 -361.9,46.4 -355.6,47.0 -349.2,50.5 -347.9,53.5 -344.1,55.3 -338.4,57.1 -339.6,60.6 -340.9,64.2 -342.8,67.2 -346.6,69.0 -349.2,73.1 -353.0,76.1 -355.6,77.3 -357.5,80.2 -359.4,84.4 -360.7,86.2 -363.2,84.4 -363.2,80.2 -361.9,75.5 -361.3,71.3 -360.7,64.2 -364.5,61.8 -367.7,56.5 -367.0,53.5 -365.8,51.7" fill="#c2d084"/><polygon points="-135.7,48.7 -132.5,46.4 -126.2,47.0 -119.8,50.5 -118.5,53.5 -114.7,55.3 -109.0,57.1 -110.2,60.6 -111.5,64.2 -113.4,67.2 -117.2,69.0 -119.8,73.1 -123.6,76.1 -126.2,77.3 -128.1,80.2 -130.0,84.4 -131.3,86.2 -133.8,84.4 -133.8,80.2 -132.5,75.5 -131.9,71.3 -131.3,64.2 -135.1,61.8 -138.3,56.5 -137.6,53.5 -136.4,51.7" fill="#c2d084"/><polygon points="93.7,48.7 96.9,46.4 103.2,47.0 109.6,50.5 110.9,53.5 114.7,55.3 120.4,57.1 119.2,60.6 117.9,64.2 116.0,67.2 112.2,69.0 109.6,73.1 105.8,76.1 103.2,77.3 101.3,80.2 99.4,84.4 98.1,86.2 95.6,84.4 95.6,80.2 96.9,75.5 97.5,71.3 98.1,64.2 94.3,61.8 91.1,56.5 91.8,53.5 93.0,51.7" fill="#c2d084"/><polygon points="323.1,48.7 326.3,46.4 332.6,47.0 339.0,50.5 340.3,53.5 344.1,55.3 349.8,57.1 348.6,60.6 347.3,64.2 345.4,67.2 341.6,69.0 339.0,73.1 335.2,76.1 332.6,77.3 330.7,80.2 328.8,84.4 327.5,86.2 325.0,84.4 325.0,80.2 326.3,75.5 326.9,71.3 327.5,64.2 323.7,61.8 320.5,56.5 321.2,53.5 322.4,51.7" fill="#c2d084"/><polygon points="-326.9,44.6 -326.3,41.0 -322.4,36.3 -319.9,32.7 -316.1,32.1 -309.7,31.5 -309.1,33.9 -303.3,34.5 -300.1,34.5 -295.7,35.1 -294.4,36.9 -292.5,41.0 -288.7,46.4 -283.6,46.4 -285.5,50.5 -289.9,54.7 -291.2,58.3 -290.6,62.4 -293.8,66.6 -295.7,70.1 -298.9,73.7 -303.3,74.3 -305.2,71.3 -307.1,66.6 -308.4,62.4 -307.8,58.3 -310.3,54.1 -310.3,51.1 -312.9,49.9 -318.6,50.5 -321.2,51.1 -324.3,48.7 -326.9,46.4" fill="#d9bd86"/><polygon points="-97.5,44.6 -96.9,41.0 -93.0,36.3 -90.5,32.7 -86.7,32.1 -80.3,31.5 -79.7,33.9 -73.9,34.5 -70.7,34.5 -66.3,35.1 -65.0,36.9 -63.1,41.0 -59.3,46.4 -54.2,46.4 -56.1,50.5 -60.5,54.7 -61.8,58.3 -61.2,62.4 -64.4,66.6 -66.3,70.1 -69.5,73.7 -73.9,74.3 -75.8,71.3 -77.7,66.6 -79.0,62.4 -78.4,58.3 -80.9,54.1 -80.9,51.1 -83.5,49.9 -89.2,50.5 -91.8,51.1 -94.9,48.7 -97.5,46.4" fill="#d9bd86"/><polygon points="131.9,44.6 132.5,41.0 136.4,36.3 138.9,32.7 142.7,32.1 149.1,31.5 149.7,33.9 155.5,34.5 158.7,34.5 163.1,35.1 164.4,36.9 166.3,41.0 170.1,46.4 175.2,46.4 173.3,50.5 168.9,54.7 167.6,58.3 168.2,62.4 165.0,66.6 163.1,70.1 159.9,73.7 155.5,74.3 153.6,71.3 151.7,66.6 150.4,62.4 151.0,58.3 148.5,54.1 148.5,51.1 145.9,49.9 140.2,50.5 137.6,51.1 134.5,48.7 131.9,46.4" fill="#d9bd86"/><polygon points="361.3,44.6 361.9,41.0 365.8,36.3 368.3,32.7 372.1,32.1 378.5,31.5 379.1,33.9 384.9,34.5 388.1,34.5 392.5,35.1 393.8,36.9 395.7,41.0 399.5,46.4 404.6,46.4 402.7,50.5 398.3,54.7 397.0,58.3 397.6,62.4 394.4,66.6 392.5,70.1 389.3,73.7 384.9,74.3 383.0,71.3 381.1,66.6 379.8,62.4 380.4,58.3 377.9,54.1 377.9,51.1 375.3,49.9 369.6,50.5 367.0,51.1 363.9,48.7 361.3,46.4" fill="#d9bd86"/><polygon points="-288.0,68.4 -286.1,68.4 -284.2,62.4 -284.8,60.6 -288.0,63.6" fill="#c3c283"/><polygon points="-58.6,68.4 -56.7,68.4 -54.8,62.4 -55.4,60.6 -58.6,63.6" fill="#c3c283"/><polygon points="170.8,68.4 172.7,68.4 174.6,62.4 174.0,60.6 170.8,63.6" fill="#c3c283"/><polygon points="400.2,68.4 402.1,68.4 404.0,62.4 403.4,60.6 400.2,63.6" fill="#c3c283"/><polygon points="-321.8,31.5 -321.8,27.9 -317.3,27.3 -318.6,25.0 -314.8,23.2 -311.6,21.4 -310.3,19.6 -311.0,19.0 -312.9,18.4 -312.9,16.6 -308.4,14.3 -304.6,11.9 -298.2,11.3 -290.6,13.7 -288.0,13.1 -281.0,12.5 -272.7,12.5 -269.5,10.7 -265.1,10.1 -252.3,7.7 -246.0,9.5 -233.2,10.7 -226.9,10.1 -214.1,11.9 -207.7,11.9 -201.4,12.5 -195.0,14.3 -201.4,16.1 -207.7,17.8 -212.2,19.0 -212.8,20.8 -216.7,23.2 -216.7,19.6 -220.5,18.4 -225.6,18.4 -230.0,20.8 -226.2,22.6 -226.9,25.6 -230.0,27.9 -233.2,28.5 -234.5,30.9 -235.8,32.7 -238.3,29.7 -240.9,30.3 -238.3,31.5 -239.6,33.9 -238.3,35.7 -240.9,39.2 -246.0,41.0 -247.2,42.8 -246.6,46.4 -249.2,48.1 -252.3,45.8 -253.0,48.7 -250.4,52.3 -252.3,51.1 -253.6,48.1 -254.3,44.0 -257.4,40.4 -260.6,41.0 -265.1,44.6 -265.1,47.6 -267.0,48.7 -269.5,43.4 -270.2,41.0 -273.4,38.6 -277.8,38.6 -279.7,38.0 -282.9,36.9 -284.8,35.7 -283.6,38.6 -280.4,39.2 -278.5,40.4 -281.0,43.4 -287.4,45.8 -288.7,44.6 -291.2,40.4 -293.8,36.9 -293.8,34.5 -293.1,32.1 -296.9,32.1 -298.9,31.5 -299.5,29.7 -297.6,29.1 -293.8,28.5 -289.9,29.1 -291.8,26.8 -295.0,26.8 -296.9,26.2 -298.2,29.1 -300.8,29.7 -301.4,31.5 -303.3,29.7 -304.0,28.5 -307.1,26.8 -308.4,27.3 -305.9,29.1 -304.6,29.7 -305.9,30.9 -308.4,28.5 -310.3,27.3 -314.2,27.9 -316.1,30.3 -317.3,31.5 -319.2,32.1" fill="#d4c88e"/><polygon points="-92.4,31.5 -92.4,27.9 -87.9,27.3 -89.2,25.0 -85.4,23.2 -82.2,21.4 -80.9,19.6 -81.6,19.0 -83.5,18.4 -83.5,16.6 -79.0,14.3 -75.2,11.9 -68.8,11.3 -61.2,13.7 -58.6,13.1 -51.6,12.5 -43.3,12.5 -40.1,10.7 -35.7,10.1 -22.9,7.7 -16.6,9.5 -3.8,10.7 2.5,10.1 15.3,11.9 21.7,11.9 28.0,12.5 34.4,14.3 28.0,16.1 21.7,17.8 17.2,19.0 16.6,20.8 12.7,23.2 12.7,19.6 8.9,18.4 3.8,18.4 -0.6,20.8 3.2,22.6 2.5,25.6 -0.6,27.9 -3.8,28.5 -5.1,30.9 -6.4,32.7 -8.9,29.7 -11.5,30.3 -8.9,31.5 -10.2,33.9 -8.9,35.7 -11.5,39.2 -16.6,41.0 -17.8,42.8 -17.2,46.4 -19.8,48.1 -22.9,45.8 -23.6,48.7 -21.0,52.3 -22.9,51.1 -24.2,48.1 -24.9,44.0 -28.0,40.4 -31.2,41.0 -35.7,44.6 -35.7,47.6 -37.6,48.7 -40.1,43.4 -40.8,41.0 -44.0,38.6 -48.4,38.6 -50.3,38.0 -53.5,36.9 -55.4,35.7 -54.2,38.6 -51.0,39.2 -49.1,40.4 -51.6,43.4 -58.0,45.8 -59.3,44.6 -61.8,40.4 -64.4,36.9 -64.4,34.5 -63.7,32.1 -67.5,32.1 -69.5,31.5 -70.1,29.7 -68.2,29.1 -64.4,28.5 -60.5,29.1 -62.4,26.8 -65.6,26.8 -67.5,26.2 -68.8,29.1 -71.4,29.7 -72.0,31.5 -73.9,29.7 -74.6,28.5 -77.7,26.8 -79.0,27.3 -76.5,29.1 -75.2,29.7 -76.5,30.9 -79.0,28.5 -80.9,27.3 -84.8,27.9 -86.7,30.3 -87.9,31.5 -89.8,32.1" fill="#d4c88e"/><polygon points="137.0,31.5 137.0,27.9 141.5,27.3 140.2,25.0 144.0,23.2 147.2,21.4 148.5,19.6 147.8,19.0 145.9,18.4 145.9,16.6 150.4,14.3 154.2,11.9 160.6,11.3 168.2,13.7 170.8,13.1 177.8,12.5 186.1,12.5 189.3,10.7 193.7,10.1 206.5,7.7 212.8,9.5 225.6,10.7 231.9,10.1 244.7,11.9 251.1,11.9 257.4,12.5 263.8,14.3 257.4,16.1 251.1,17.8 246.6,19.0 246.0,20.8 242.1,23.2 242.1,19.6 238.3,18.4 233.2,18.4 228.8,20.8 232.6,22.6 231.9,25.6 228.8,27.9 225.6,28.5 224.3,30.9 223.0,32.7 220.5,29.7 217.9,30.3 220.5,31.5 219.2,33.9 220.5,35.7 217.9,39.2 212.8,41.0 211.6,42.8 212.2,46.4 209.6,48.1 206.5,45.8 205.8,48.7 208.4,52.3 206.5,51.1 205.2,48.1 204.5,44.0 201.4,40.4 198.2,41.0 193.7,44.6 193.7,47.6 191.8,48.7 189.3,43.4 188.6,41.0 185.4,38.6 181.0,38.6 179.1,38.0 175.9,36.9 174.0,35.7 175.2,38.6 178.4,39.2 180.3,40.4 177.8,43.4 171.4,45.8 170.1,44.6 167.6,40.4 165.0,36.9 165.0,34.5 165.7,32.1 161.9,32.1 159.9,31.5 159.3,29.7 161.2,29.1 165.0,28.5 168.9,29.1 167.0,26.8 163.8,26.8 161.9,26.2 160.6,29.1 158.0,29.7 157.4,31.5 155.5,29.7 154.8,28.5 151.7,26.8 150.4,27.3 152.9,29.1 154.2,29.7 152.9,30.9 150.4,28.5 148.5,27.3 144.6,27.9 142.7,30.3 141.5,31.5 139.6,32.1" fill="#d4c88e"/><polygon points="366.4,31.5 366.4,27.9 370.9,27.3 369.6,25.0 373.4,23.2 376.6,21.4 377.9,19.6 377.2,19.0 375.3,18.4 375.3,16.6 379.8,14.3 383.6,11.9 390.0,11.3 397.6,13.7 400.2,13.1 407.2,12.5 415.5,12.5 418.7,10.7 423.1,10.1 435.9,7.7 442.2,9.5 455.0,10.7 461.3,10.1 474.1,11.9 480.5,11.9 486.8,12.5 493.2,14.3 486.8,16.1 480.5,17.8 476.0,19.0 475.4,20.8 471.5,23.2 471.5,19.6 467.7,18.4 462.6,18.4 458.2,20.8 462.0,22.6 461.3,25.6 458.2,27.9 455.0,28.5 453.7,30.9 452.4,32.7 449.9,29.7 447.3,30.3 449.9,31.5 448.6,33.9 449.9,35.7 447.3,39.2 442.2,41.0 441.0,42.8 441.6,46.4 439.0,48.1 435.9,45.8 435.2,48.7 437.8,52.3 435.9,51.1 434.6,48.1 433.9,44.0 430.8,40.4 427.6,41.0 423.1,44.6 423.1,47.6 421.2,48.7 418.7,43.4 418.0,41.0 414.8,38.6 410.4,38.6 408.5,38.0 405.3,36.9 403.4,35.7 404.6,38.6 407.8,39.2 409.7,40.4 407.2,43.4 400.8,45.8 399.5,44.6 397.0,40.4 394.4,36.9 394.4,34.5 395.1,32.1 391.3,32.1 389.3,31.5 388.7,29.7 390.6,29.1 394.4,28.5 398.3,29.1 396.4,26.8 393.2,26.8 391.3,26.2 390.0,29.1 387.4,29.7 386.8,31.5 384.9,29.7 384.2,28.5 381.1,26.8 379.8,27.3 382.3,29.1 383.6,29.7 382.3,30.9 379.8,28.5 377.9,27.3 374.0,27.9 372.1,30.3 370.9,31.5 369.0,32.1" fill="#d4c88e"/><polygon points="-319.2,23.8 -315.4,23.2 -316.1,22.0 -317.3,20.2 -318.0,19.0 -319.9,19.6 -319.2,21.4 -318.0,22.0 -319.2,22.6" fill="#c3c283"/><polygon points="-89.8,23.8 -86.0,23.2 -86.7,22.0 -87.9,20.2 -88.6,19.0 -90.5,19.6 -89.8,21.4 -88.6,22.0 -89.8,22.6" fill="#c3c283"/><polygon points="139.6,23.8 143.4,23.2 142.7,22.0 141.5,20.2 140.8,19.0 138.9,19.6 139.6,21.4 140.8,22.0 139.6,22.6" fill="#c3c283"/><polygon points="369.0,23.8 372.8,23.2 372.1,22.0 370.9,20.2 370.2,19.0 368.3,19.6 369.0,21.4 370.2,22.0 369.0,22.6" fill="#c3c283"/><polygon points="-322.4,22.6 -319.9,22.6 -319.9,20.8 -321.8,21.4" fill="#c3c283"/><polygon points="-93.0,22.6 -90.5,22.6 -90.5,20.8 -92.4,21.4" fill="#c3c283"/><polygon points="136.4,22.6 138.9,22.6 138.9,20.8 137.0,21.4" fill="#c3c283"/><polygon points="365.8,22.6 368.3,22.6 368.3,20.8 366.4,21.4" fill="#c3c283"/><polygon points="-331.4,15.5 -325.0,15.5 -325.0,14.3 -330.1,14.3" fill="#c3c283"/><polygon points="-102.0,15.5 -95.6,15.5 -95.6,14.3 -100.7,14.3" fill="#c3c283"/><polygon points="127.4,15.5 133.8,15.5 133.8,14.3 128.7,14.3" fill="#c3c283"/><polygon points="356.8,15.5 363.2,15.5 363.2,14.3 358.1,14.3" fill="#c3c283"/><polygon points="-233.2,35.1 -231.9,33.3 -229.4,32.7 -226.9,32.7 -226.2,30.9 -226.2,29.1 -226.9,27.9 -223.7,27.3 -225.6,26.8 -226.9,28.5 -227.5,30.9 -229.4,31.5 -231.9,32.7 -233.2,33.9" fill="#c3c283"/><polygon points="-3.8,35.1 -2.5,33.3 0.0,32.7 2.5,32.7 3.2,30.9 3.2,29.1 2.5,27.9 5.7,27.3 3.8,26.8 2.5,28.5 1.9,30.9 0.0,31.5 -2.5,32.7 -3.8,33.9" fill="#c3c283"/><polygon points="225.6,35.1 226.9,33.3 229.4,32.7 231.9,32.7 232.6,30.9 232.6,29.1 231.9,27.9 235.1,27.3 233.2,26.8 231.9,28.5 231.3,30.9 229.4,31.5 226.9,32.7 225.6,33.9" fill="#c3c283"/><polygon points="455.0,35.1 456.3,33.3 458.8,32.7 461.3,32.7 462.0,30.9 462.0,29.1 461.3,27.9 464.5,27.3 462.6,26.8 461.3,28.5 460.7,30.9 458.8,31.5 456.3,32.7 455.0,33.9" fill="#c3c283"/><polygon points="-255.5,50.5 -249.8,55.3 -248.5,57.1 -251.7,55.3 -254.3,52.3" fill="#c3c283"/><polygon points="-26.1,50.5 -20.4,55.3 -19.1,57.1 -22.3,55.3 -24.9,52.3" fill="#c3c283"/><polygon points="203.3,50.5 209.0,55.3 210.3,57.1 207.1,55.3 204.5,52.3" fill="#c3c283"/><polygon points="432.7,50.5 438.4,55.3 439.7,57.1 436.5,55.3 433.9,52.3" fill="#c3c283"/><polygon points="-246.6,52.9 -244.1,55.3 -242.1,55.9 -240.9,52.9 -241.5,49.9 -244.1,51.1" fill="#c3c283"/><polygon points="-17.2,52.9 -14.7,55.3 -12.7,55.9 -11.5,52.9 -12.1,49.9 -14.7,51.1" fill="#c3c283"/><polygon points="212.2,52.9 214.7,55.3 216.7,55.9 217.9,52.9 217.3,49.9 214.7,51.1" fill="#c3c283"/><polygon points="441.6,52.9 444.1,55.3 446.1,55.9 447.3,52.9 446.7,49.9 444.1,51.1" fill="#c3c283"/><polygon points="-249.2,57.1 -243.4,58.3 -243.4,58.9 -248.5,58.3" fill="#c3c283"/><polygon points="-19.8,57.1 -14.0,58.3 -14.0,58.9 -19.1,58.3" fill="#c3c283"/><polygon points="209.6,57.1 215.4,58.3 215.4,58.9 210.3,58.3" fill="#c3c283"/><polygon points="439.0,57.1 444.8,58.3 444.8,58.9 439.7,58.3" fill="#c3c283"/><polygon points="-240.2,55.3 -239.0,53.5 -236.4,52.9 -238.3,55.9 -239.6,56.5" fill="#c3c283"/><polygon points="-10.8,55.3 -9.6,53.5 -7.0,52.9 -8.9,55.9 -10.2,56.5" fill="#c3c283"/><polygon points="218.6,55.3 219.8,53.5 222.4,52.9 220.5,55.9 219.2,56.5" fill="#c3c283"/><polygon points="448.0,55.3 449.2,53.5 451.8,52.9 449.9,55.9 448.6,56.5" fill="#c3c283"/><polygon points="-232.6,54.1 -228.1,54.7 -223.7,56.5 -220.5,59.4 -224.9,58.9 -228.1,58.3 -231.3,55.9" fill="#c3c283"/><polygon points="-3.2,54.1 1.3,54.7 5.7,56.5 8.9,59.4 4.5,58.9 1.3,58.3 -1.9,55.9" fill="#c3c283"/><polygon points="226.2,54.1 230.7,54.7 235.1,56.5 238.3,59.4 233.9,58.9 230.7,58.3 227.5,55.9" fill="#c3c283"/><polygon points="455.6,54.1 460.1,54.7 464.5,56.5 467.7,59.4 463.3,58.9 460.1,58.3 456.9,55.9" fill="#c3c283"/><polygon points="-239.6,42.8 -238.3,42.8 -237.0,45.8 -235.8,49.3 -238.3,49.3 -239.6,46.4" fill="#c3c283"/><polygon points="-10.2,42.8 -8.9,42.8 -7.6,45.8 -6.4,49.3 -8.9,49.3 -10.2,46.4" fill="#c3c283"/><polygon points="219.2,42.8 220.5,42.8 221.8,45.8 223.0,49.3 220.5,49.3 219.2,46.4" fill="#c3c283"/><polygon points="448.6,42.8 449.9,42.8 451.2,45.8 452.4,49.3 449.9,49.3 448.6,46.4" fill="#c3c283"/><polygon points="-243.4,66.6 -243.4,73.7 -240.9,74.3 -237.0,73.1 -232.6,71.9 -230.0,74.3 -226.9,76.1 -223.0,76.7 -220.5,75.5 -218.6,71.9 -218.6,68.4 -223.0,64.8 -225.6,60.0 -226.2,63.6 -229.4,62.4 -229.4,60.6 -232.6,60.6 -234.5,62.4 -238.3,63.6" fill="#d6c58a"/><polygon points="-14.0,66.6 -14.0,73.7 -11.5,74.3 -7.6,73.1 -3.2,71.9 -0.6,74.3 2.5,76.1 6.4,76.7 8.9,75.5 10.8,71.9 10.8,68.4 6.4,64.8 3.8,60.0 3.2,63.6 0.0,62.4 0.0,60.6 -3.2,60.6 -5.1,62.4 -8.9,63.6" fill="#d6c58a"/><polygon points="215.4,66.6 215.4,73.7 217.9,74.3 221.8,73.1 226.2,71.9 228.8,74.3 231.9,76.1 235.8,76.7 238.3,75.5 240.2,71.9 240.2,68.4 235.8,64.8 233.2,60.0 232.6,63.6 229.4,62.4 229.4,60.6 226.2,60.6 224.3,62.4 220.5,63.6" fill="#d6c58a"/><polygon points="444.8,66.6 444.8,73.7 447.3,74.3 451.2,73.1 455.6,71.9 458.2,74.3 461.3,76.1 465.2,76.7 467.7,75.5 469.6,71.9 469.6,68.4 465.2,64.8 462.6,60.0 462.0,63.6 458.8,62.4 458.8,60.6 455.6,60.6 453.7,62.4 449.9,63.6" fill="#d6c58a"/><polygon points="-205.8,74.3 -202.6,76.1 -204.5,77.9 -206.5,79.7 -209.6,80.8 -207.7,79.1 -205.2,77.3" fill="#c3c283"/><polygon points="23.6,74.3 26.8,76.1 24.9,77.9 22.9,79.7 19.8,80.8 21.7,79.1 24.2,77.3" fill="#c3c283"/><polygon points="253.0,74.3 256.2,76.1 254.3,77.9 252.3,79.7 249.2,80.8 251.1,79.1 253.6,77.3" fill="#c3c283"/><polygon points="482.4,74.3 485.6,76.1 483.7,77.9 481.7,79.7 478.6,80.8 480.5,79.1 483.0,77.3" fill="#c3c283"/><polygon points="-370.2,40.4 -363.9,41.6 -365.8,40.4 -368.3,39.8" fill="#c3c283"/><polygon points="-140.8,40.4 -134.5,41.6 -136.4,40.4 -138.9,39.8" fill="#c3c283"/><polygon points="88.6,40.4 94.9,41.6 93.0,40.4 90.5,39.8" fill="#c3c283"/><polygon points="318.0,40.4 324.3,41.6 322.4,40.4 319.9,39.8" fill="#c3c283"/><polygon points="-282.9,11.3 -279.1,9.5 -272.7,7.7 -277.8,8.3 -281.7,10.1" fill="#c3c283"/><polygon points="-53.5,11.3 -49.7,9.5 -43.3,7.7 -48.4,8.3 -52.3,10.1" fill="#c3c283"/><polygon points="175.9,11.3 179.7,9.5 186.1,7.7 181.0,8.3 177.1,10.1" fill="#c3c283"/><polygon points="405.3,11.3 409.1,9.5 415.5,7.7 410.4,8.3 406.5,10.1" fill="#c3c283"/><polygon points="-308.4,7.1 -300.1,7.1 -302.0,5.9 -307.1,5.9" fill="#c3c283"/><polygon points="-79.0,7.1 -70.7,7.1 -72.6,5.9 -77.7,5.9" fill="#c3c283"/><polygon points="150.4,7.1 158.7,7.1 156.8,5.9 151.7,5.9" fill="#c3c283"/><polygon points="379.8,7.1 388.1,7.1 386.2,5.9 381.1,5.9" fill="#c3c283"/><polygon points="-430.8,99.9 -418.0,99.9 -405.3,97.5 -379.8,96.3 -363.9,96.3 -354.3,91.5 -352.4,91.5 -355.6,97.5 -335.2,99.3 -322.4,95.1 -303.3,94.5 -284.2,92.7 -265.1,93.3 -246.0,92.7 -226.9,92.7 -210.9,95.1 -201.4,99.9 -201.4,107.0 -201.4,107.0" fill="#d9c7b5"/><polygon points="-201.4,99.9 -188.6,99.9 -175.9,97.5 -150.4,96.3 -134.5,96.3 -124.9,91.5 -123.0,91.5 -126.2,97.5 -105.8,99.3 -93.0,95.1 -73.9,94.5 -54.8,92.7 -35.7,93.3 -16.6,92.7 2.5,92.7 18.5,95.1 28.0,99.9 28.0,107.0 28.0,107.0" fill="#d9c7b5"/><polygon points="28.0,99.9 40.8,99.9 53.5,97.5 79.0,96.3 94.9,96.3 104.5,91.5 106.4,91.5 103.2,97.5 123.6,99.3 136.4,95.1 155.5,94.5 174.6,92.7 193.7,93.3 212.8,92.7 231.9,92.7 247.9,95.1 257.4,99.9 257.4,107.0 257.4,107.0" fill="#d9c7b5"/><ellipse cx="88.6" cy="30.9" rx="7" ry="5" fill="#b0d67a" opacity="0.75"/><ellipse cx="82.2" cy="23.8" rx="10" ry="3" fill="#b0d67a" opacity="0.75"/><ellipse cx="66.3" cy="20.8" rx="5" ry="4" fill="#b0d67a" opacity="0.75"/><ellipse cx="104.5" cy="56.5" rx="9" ry="7" fill="#b0d67a" opacity="0.75"/><ellipse cx="107.7" cy="65.4" rx="5" ry="6" fill="#b0d67a" opacity="0.75"/><ellipse cx="99.4" cy="50.5" rx="5" ry="3" fill="#b0d67a" opacity="0.75"/><ellipse cx="155.5" cy="53.5" rx="6" ry="5" fill="#b0d67a" opacity="0.75"/><ellipse cx="161.9" cy="60.6" rx="5" ry="5" fill="#b0d67a" opacity="0.75"/><ellipse cx="149.1" cy="23.8" rx="8" ry="4" fill="#b0d67a" opacity="0.75"/><ellipse cx="165.0" cy="20.8" rx="12" ry="4" fill="#b0d67a" opacity="0.75"/><ellipse cx="187.3" cy="19.0" rx="14" ry="4" fill="#b0d67a" opacity="0.75"/><ellipse cx="209.6" cy="17.8" rx="12" ry="4" fill="#b0d67a" opacity="0.75"/><ellipse cx="212.8" cy="36.9" rx="6" ry="5" fill="#b0d67a" opacity="0.75"/><ellipse cx="206.5" cy="42.8" rx="4" ry="4" fill="#b0d67a" opacity="0.75"/><ellipse cx="192.4" cy="41.6" rx="3" ry="4" fill="#b0d67a" opacity="0.75"/><ellipse cx="47.2" cy="15.5" rx="6" ry="2" fill="#b0d67a" opacity="0.75"/><ellipse cx="8.9" cy="71.3" rx="3" ry="5" fill="#b0d67a" opacity="0.75"/><ellipse cx="228.8" cy="14.9" rx="8" ry="3" fill="#b0d67a" opacity="0.75"/><ellipse cx="149.1" cy="40.4" rx="14" ry="5" fill="#d4ad78" opacity="0.8"/><ellipse cx="171.4" cy="39.2" rx="6" ry="5" fill="#d4ad78" opacity="0.8"/><ellipse cx="75.8" cy="30.9" rx="6" ry="6" fill="#d4ad78" opacity="0.8"/><ellipse cx="181.0" cy="29.7" rx="9" ry="4" fill="#d4ad78" opacity="0.8"/><ellipse cx="99.4" cy="74.3" rx="2.5" ry="9" fill="#d4ad78" opacity="0.8"/><ellipse cx="225.6" cy="68.4" rx="8" ry="4" fill="#d4ad78" opacity="0.8"/><ellipse cx="155.5" cy="68.4" rx="4" ry="4" fill="#d4ad78" opacity="0.8"/><ellipse cx="116.0" cy="10.7" rx="7" ry="5" fill="#d4ad78" opacity="0.8"/><clipPath id="landclip"><polygon points="-423.1,14.3 -415.5,11.3 -405.3,11.9 -395.7,11.9 -386.2,13.1 -376.6,12.5 -372.1,13.1 -368.3,16.1 -375.3,17.8 -374.7,19.6 -368.3,22.0 -366.4,22.6 -365.1,19.6 -360.7,16.6 -357.5,17.8 -354.3,20.8 -351.7,22.6 -357.5,25.0 -354.3,26.2 -358.1,27.3 -360.7,28.5 -363.2,29.7 -364.5,32.7 -367.7,35.1 -367.0,38.0 -368.3,36.9 -369.6,35.7 -373.4,36.3 -376.0,36.3 -377.9,38.0 -377.9,41.0 -374.0,42.8 -371.5,41.0 -371.5,44.0 -369.0,47.6 -366.4,48.1 -365.1,48.7 -367.0,49.3 -370.2,47.6 -374.7,45.2 -377.9,44.0 -383.0,41.6 -386.2,39.2 -387.4,36.3 -389.3,35.1 -390.6,33.9 -393.2,32.7 -395.1,29.7 -395.1,25.6 -397.6,23.2 -400.8,20.2 -405.3,17.8 -410.4,17.2 -413.6,19.0 -418.0,20.2 -421.2,21.4 -418.0,18.4 -421.8,16.6"/><polygon points="-193.7,14.3 -186.1,11.3 -175.9,11.9 -166.3,11.9 -156.8,13.1 -147.2,12.5 -142.7,13.1 -138.9,16.1 -145.9,17.8 -145.3,19.6 -138.9,22.0 -137.0,22.6 -135.7,19.6 -131.3,16.6 -128.1,17.8 -124.9,20.8 -122.3,22.6 -128.1,25.0 -124.9,26.2 -128.7,27.3 -131.3,28.5 -133.8,29.7 -135.1,32.7 -138.3,35.1 -137.6,38.0 -138.9,36.9 -140.2,35.7 -144.0,36.3 -146.6,36.3 -148.5,38.0 -148.5,41.0 -144.6,42.8 -142.1,41.0 -142.1,44.0 -139.6,47.6 -137.0,48.1 -135.7,48.7 -137.6,49.3 -140.8,47.6 -145.3,45.2 -148.5,44.0 -153.6,41.6 -156.8,39.2 -158.0,36.3 -159.9,35.1 -161.2,33.9 -163.8,32.7 -165.7,29.7 -165.7,25.6 -168.2,23.2 -171.4,20.2 -175.9,17.8 -181.0,17.2 -184.2,19.0 -188.6,20.2 -191.8,21.4 -188.6,18.4 -192.4,16.6"/><polygon points="35.7,14.3 43.3,11.3 53.5,11.9 63.1,11.9 72.6,13.1 82.2,12.5 86.7,13.1 90.5,16.1 83.5,17.8 84.1,19.6 90.5,22.0 92.4,22.6 93.7,19.6 98.1,16.6 101.3,17.8 104.5,20.8 107.1,22.6 101.3,25.0 104.5,26.2 100.7,27.3 98.1,28.5 95.6,29.7 94.3,32.7 91.1,35.1 91.8,38.0 90.5,36.9 89.2,35.7 85.4,36.3 82.8,36.3 80.9,38.0 80.9,41.0 84.8,42.8 87.3,41.0 87.3,44.0 89.8,47.6 92.4,48.1 93.7,48.7 91.8,49.3 88.6,47.6 84.1,45.2 80.9,44.0 75.8,41.6 72.6,39.2 71.4,36.3 69.5,35.1 68.2,33.9 65.6,32.7 63.7,29.7 63.7,25.6 61.2,23.2 58.0,20.2 53.5,17.8 48.4,17.2 45.2,19.0 40.8,20.2 37.6,21.4 40.8,18.4 37.0,16.6"/><polygon points="-351.1,17.8 -344.7,17.8 -341.6,14.9 -330.1,11.9 -328.8,8.3 -332.0,4.8 -344.7,4.2 -354.3,4.8 -360.7,7.1 -354.3,8.9 -351.1,11.9 -349.2,14.9"/><polygon points="-121.7,17.8 -115.3,17.8 -112.2,14.9 -100.7,11.9 -99.4,8.3 -102.6,4.8 -115.3,4.2 -124.9,4.8 -131.3,7.1 -124.9,8.9 -121.7,11.9 -119.8,14.9"/><polygon points="107.7,17.8 114.1,17.8 117.2,14.9 128.7,11.9 130.0,8.3 126.8,4.8 114.1,4.2 104.5,4.8 98.1,7.1 104.5,8.9 107.7,11.9 109.6,14.9"/><polygon points="-392.5,10.7 -383.0,10.1 -376.6,8.9 -367.0,8.9 -363.9,10.7 -370.2,11.9 -379.8,11.9 -389.3,11.9"/><polygon points="-163.1,10.7 -153.6,10.1 -147.2,8.9 -137.6,8.9 -134.5,10.7 -140.8,11.9 -150.4,11.9 -159.9,11.9"/><polygon points="66.3,10.7 75.8,10.1 82.2,8.9 91.8,8.9 94.9,10.7 88.6,11.9 79.0,11.9 69.5,11.9"/><polygon points="-367.0,10.1 -357.5,13.1 -355.6,14.9 -360.7,16.6 -365.8,14.9 -370.2,11.9"/><polygon points="-137.6,10.1 -128.1,13.1 -126.2,14.9 -131.3,16.6 -136.4,14.9 -140.8,11.9"/><polygon points="91.8,10.1 101.3,13.1 103.2,14.9 98.1,16.6 93.0,14.9 88.6,11.9"/><polygon points="-373.4,7.7 -363.9,7.7 -355.6,4.8 -370.2,4.2"/><polygon points="-144.0,7.7 -134.5,7.7 -126.2,4.8 -140.8,4.2"/><polygon points="85.4,7.7 94.9,7.7 103.2,4.8 88.6,4.2"/><polygon points="-365.1,48.7 -361.9,46.4 -355.6,47.0 -349.2,50.5 -347.9,53.5 -344.1,55.3 -338.4,57.1 -339.6,60.6 -340.9,64.2 -342.8,67.2 -346.6,69.0 -349.2,73.1 -353.0,76.1 -355.6,77.3 -357.5,80.2 -359.4,84.4 -360.7,86.2 -363.2,84.4 -363.2,80.2 -361.9,75.5 -361.3,71.3 -360.7,64.2 -364.5,61.8 -367.7,56.5 -367.0,53.5 -365.8,51.7"/><polygon points="-135.7,48.7 -132.5,46.4 -126.2,47.0 -119.8,50.5 -118.5,53.5 -114.7,55.3 -109.0,57.1 -110.2,60.6 -111.5,64.2 -113.4,67.2 -117.2,69.0 -119.8,73.1 -123.6,76.1 -126.2,77.3 -128.1,80.2 -130.0,84.4 -131.3,86.2 -133.8,84.4 -133.8,80.2 -132.5,75.5 -131.9,71.3 -131.3,64.2 -135.1,61.8 -138.3,56.5 -137.6,53.5 -136.4,51.7"/><polygon points="93.7,48.7 96.9,46.4 103.2,47.0 109.6,50.5 110.9,53.5 114.7,55.3 120.4,57.1 119.2,60.6 117.9,64.2 116.0,67.2 112.2,69.0 109.6,73.1 105.8,76.1 103.2,77.3 101.3,80.2 99.4,84.4 98.1,86.2 95.6,84.4 95.6,80.2 96.9,75.5 97.5,71.3 98.1,64.2 94.3,61.8 91.1,56.5 91.8,53.5 93.0,51.7"/><polygon points="-326.9,44.6 -326.3,41.0 -322.4,36.3 -319.9,32.7 -316.1,32.1 -309.7,31.5 -309.1,33.9 -303.3,34.5 -300.1,34.5 -295.7,35.1 -294.4,36.9 -292.5,41.0 -288.7,46.4 -283.6,46.4 -285.5,50.5 -289.9,54.7 -291.2,58.3 -290.6,62.4 -293.8,66.6 -295.7,70.1 -298.9,73.7 -303.3,74.3 -305.2,71.3 -307.1,66.6 -308.4,62.4 -307.8,58.3 -310.3,54.1 -310.3,51.1 -312.9,49.9 -318.6,50.5 -321.2,51.1 -324.3,48.7 -326.9,46.4"/><polygon points="-97.5,44.6 -96.9,41.0 -93.0,36.3 -90.5,32.7 -86.7,32.1 -80.3,31.5 -79.7,33.9 -73.9,34.5 -70.7,34.5 -66.3,35.1 -65.0,36.9 -63.1,41.0 -59.3,46.4 -54.2,46.4 -56.1,50.5 -60.5,54.7 -61.8,58.3 -61.2,62.4 -64.4,66.6 -66.3,70.1 -69.5,73.7 -73.9,74.3 -75.8,71.3 -77.7,66.6 -79.0,62.4 -78.4,58.3 -80.9,54.1 -80.9,51.1 -83.5,49.9 -89.2,50.5 -91.8,51.1 -94.9,48.7 -97.5,46.4"/><polygon points="131.9,44.6 132.5,41.0 136.4,36.3 138.9,32.7 142.7,32.1 149.1,31.5 149.7,33.9 155.5,34.5 158.7,34.5 163.1,35.1 164.4,36.9 166.3,41.0 170.1,46.4 175.2,46.4 173.3,50.5 168.9,54.7 167.6,58.3 168.2,62.4 165.0,66.6 163.1,70.1 159.9,73.7 155.5,74.3 153.6,71.3 151.7,66.6 150.4,62.4 151.0,58.3 148.5,54.1 148.5,51.1 145.9,49.9 140.2,50.5 137.6,51.1 134.5,48.7 131.9,46.4"/><polygon points="-288.0,68.4 -286.1,68.4 -284.2,62.4 -284.8,60.6 -288.0,63.6"/><polygon points="-58.6,68.4 -56.7,68.4 -54.8,62.4 -55.4,60.6 -58.6,63.6"/><polygon points="170.8,68.4 172.7,68.4 174.6,62.4 174.0,60.6 170.8,63.6"/><polygon points="-321.8,31.5 -321.8,27.9 -317.3,27.3 -318.6,25.0 -314.8,23.2 -311.6,21.4 -310.3,19.6 -311.0,19.0 -312.9,18.4 -312.9,16.6 -308.4,14.3 -304.6,11.9 -298.2,11.3 -290.6,13.7 -288.0,13.1 -281.0,12.5 -272.7,12.5 -269.5,10.7 -265.1,10.1 -252.3,7.7 -246.0,9.5 -233.2,10.7 -226.9,10.1 -214.1,11.9 -207.7,11.9 -201.4,12.5 -195.0,14.3 -201.4,16.1 -207.7,17.8 -212.2,19.0 -212.8,20.8 -216.7,23.2 -216.7,19.6 -220.5,18.4 -225.6,18.4 -230.0,20.8 -226.2,22.6 -226.9,25.6 -230.0,27.9 -233.2,28.5 -234.5,30.9 -235.8,32.7 -238.3,29.7 -240.9,30.3 -238.3,31.5 -239.6,33.9 -238.3,35.7 -240.9,39.2 -246.0,41.0 -247.2,42.8 -246.6,46.4 -249.2,48.1 -252.3,45.8 -253.0,48.7 -250.4,52.3 -252.3,51.1 -253.6,48.1 -254.3,44.0 -257.4,40.4 -260.6,41.0 -265.1,44.6 -265.1,47.6 -267.0,48.7 -269.5,43.4 -270.2,41.0 -273.4,38.6 -277.8,38.6 -279.7,38.0 -282.9,36.9 -284.8,35.7 -283.6,38.6 -280.4,39.2 -278.5,40.4 -281.0,43.4 -287.4,45.8 -288.7,44.6 -291.2,40.4 -293.8,36.9 -293.8,34.5 -293.1,32.1 -296.9,32.1 -298.9,31.5 -299.5,29.7 -297.6,29.1 -293.8,28.5 -289.9,29.1 -291.8,26.8 -295.0,26.8 -296.9,26.2 -298.2,29.1 -300.8,29.7 -301.4,31.5 -303.3,29.7 -304.0,28.5 -307.1,26.8 -308.4,27.3 -305.9,29.1 -304.6,29.7 -305.9,30.9 -308.4,28.5 -310.3,27.3 -314.2,27.9 -316.1,30.3 -317.3,31.5 -319.2,32.1"/><polygon points="-92.4,31.5 -92.4,27.9 -87.9,27.3 -89.2,25.0 -85.4,23.2 -82.2,21.4 -80.9,19.6 -81.6,19.0 -83.5,18.4 -83.5,16.6 -79.0,14.3 -75.2,11.9 -68.8,11.3 -61.2,13.7 -58.6,13.1 -51.6,12.5 -43.3,12.5 -40.1,10.7 -35.7,10.1 -22.9,7.7 -16.6,9.5 -3.8,10.7 2.5,10.1 15.3,11.9 21.7,11.9 28.0,12.5 34.4,14.3 28.0,16.1 21.7,17.8 17.2,19.0 16.6,20.8 12.7,23.2 12.7,19.6 8.9,18.4 3.8,18.4 -0.6,20.8 3.2,22.6 2.5,25.6 -0.6,27.9 -3.8,28.5 -5.1,30.9 -6.4,32.7 -8.9,29.7 -11.5,30.3 -8.9,31.5 -10.2,33.9 -8.9,35.7 -11.5,39.2 -16.6,41.0 -17.8,42.8 -17.2,46.4 -19.8,48.1 -22.9,45.8 -23.6,48.7 -21.0,52.3 -22.9,51.1 -24.2,48.1 -24.9,44.0 -28.0,40.4 -31.2,41.0 -35.7,44.6 -35.7,47.6 -37.6,48.7 -40.1,43.4 -40.8,41.0 -44.0,38.6 -48.4,38.6 -50.3,38.0 -53.5,36.9 -55.4,35.7 -54.2,38.6 -51.0,39.2 -49.1,40.4 -51.6,43.4 -58.0,45.8 -59.3,44.6 -61.8,40.4 -64.4,36.9 -64.4,34.5 -63.7,32.1 -67.5,32.1 -69.5,31.5 -70.1,29.7 -68.2,29.1 -64.4,28.5 -60.5,29.1 -62.4,26.8 -65.6,26.8 -67.5,26.2 -68.8,29.1 -71.4,29.7 -72.0,31.5 -73.9,29.7 -74.6,28.5 -77.7,26.8 -79.0,27.3 -76.5,29.1 -75.2,29.7 -76.5,30.9 -79.0,28.5 -80.9,27.3 -84.8,27.9 -86.7,30.3 -87.9,31.5 -89.8,32.1"/><polygon points="137.0,31.5 137.0,27.9 141.5,27.3 140.2,25.0 144.0,23.2 147.2,21.4 148.5,19.6 147.8,19.0 145.9,18.4 145.9,16.6 150.4,14.3 154.2,11.9 160.6,11.3 168.2,13.7 170.8,13.1 177.8,12.5 186.1,12.5 189.3,10.7 193.7,10.1 206.5,7.7 212.8,9.5 225.6,10.7 231.9,10.1 244.7,11.9 251.1,11.9 257.4,12.5 263.8,14.3 257.4,16.1 251.1,17.8 246.6,19.0 246.0,20.8 242.1,23.2 242.1,19.6 238.3,18.4 233.2,18.4 228.8,20.8 232.6,22.6 231.9,25.6 228.8,27.9 225.6,28.5 224.3,30.9 223.0,32.7 220.5,29.7 217.9,30.3 220.5,31.5 219.2,33.9 220.5,35.7 217.9,39.2 212.8,41.0 211.6,42.8 212.2,46.4 209.6,48.1 206.5,45.8 205.8,48.7 208.4,52.3 206.5,51.1 205.2,48.1 204.5,44.0 201.4,40.4 198.2,41.0 193.7,44.6 193.7,47.6 191.8,48.7 189.3,43.4 188.6,41.0 185.4,38.6 181.0,38.6 179.1,38.0 175.9,36.9 174.0,35.7 175.2,38.6 178.4,39.2 180.3,40.4 177.8,43.4 171.4,45.8 170.1,44.6 167.6,40.4 165.0,36.9 165.0,34.5 165.7,32.1 161.9,32.1 159.9,31.5 159.3,29.7 161.2,29.1 165.0,28.5 168.9,29.1 167.0,26.8 163.8,26.8 161.9,26.2 160.6,29.1 158.0,29.7 157.4,31.5 155.5,29.7 154.8,28.5 151.7,26.8 150.4,27.3 152.9,29.1 154.2,29.7 152.9,30.9 150.4,28.5 148.5,27.3 144.6,27.9 142.7,30.3 141.5,31.5 139.6,32.1"/><polygon points="-319.2,23.8 -315.4,23.2 -316.1,22.0 -317.3,20.2 -318.0,19.0 -319.9,19.6 -319.2,21.4 -318.0,22.0 -319.2,22.6"/><polygon points="-89.8,23.8 -86.0,23.2 -86.7,22.0 -87.9,20.2 -88.6,19.0 -90.5,19.6 -89.8,21.4 -88.6,22.0 -89.8,22.6"/><polygon points="139.6,23.8 143.4,23.2 142.7,22.0 141.5,20.2 140.8,19.0 138.9,19.6 139.6,21.4 140.8,22.0 139.6,22.6"/><polygon points="-322.4,22.6 -319.9,22.6 -319.9,20.8 -321.8,21.4"/><polygon points="-93.0,22.6 -90.5,22.6 -90.5,20.8 -92.4,21.4"/><polygon points="136.4,22.6 138.9,22.6 138.9,20.8 137.0,21.4"/><polygon points="-331.4,15.5 -325.0,15.5 -325.0,14.3 -330.1,14.3"/><polygon points="-102.0,15.5 -95.6,15.5 -95.6,14.3 -100.7,14.3"/><polygon points="127.4,15.5 133.8,15.5 133.8,14.3 128.7,14.3"/><polygon points="-233.2,35.1 -231.9,33.3 -229.4,32.7 -226.9,32.7 -226.2,30.9 -226.2,29.1 -226.9,27.9 -223.7,27.3 -225.6,26.8 -226.9,28.5 -227.5,30.9 -229.4,31.5 -231.9,32.7 -233.2,33.9"/><polygon points="-3.8,35.1 -2.5,33.3 0.0,32.7 2.5,32.7 3.2,30.9 3.2,29.1 2.5,27.9 5.7,27.3 3.8,26.8 2.5,28.5 1.9,30.9 0.0,31.5 -2.5,32.7 -3.8,33.9"/><polygon points="225.6,35.1 226.9,33.3 229.4,32.7 231.9,32.7 232.6,30.9 232.6,29.1 231.9,27.9 235.1,27.3 233.2,26.8 231.9,28.5 231.3,30.9 229.4,31.5 226.9,32.7 225.6,33.9"/><polygon points="-255.5,50.5 -249.8,55.3 -248.5,57.1 -251.7,55.3 -254.3,52.3"/><polygon points="-26.1,50.5 -20.4,55.3 -19.1,57.1 -22.3,55.3 -24.9,52.3"/><polygon points="203.3,50.5 209.0,55.3 210.3,57.1 207.1,55.3 204.5,52.3"/><polygon points="-246.6,52.9 -244.1,55.3 -242.1,55.9 -240.9,52.9 -241.5,49.9 -244.1,51.1"/><polygon points="-17.2,52.9 -14.7,55.3 -12.7,55.9 -11.5,52.9 -12.1,49.9 -14.7,51.1"/><polygon points="212.2,52.9 214.7,55.3 216.7,55.9 217.9,52.9 217.3,49.9 214.7,51.1"/><polygon points="-249.2,57.1 -243.4,58.3 -243.4,58.9 -248.5,58.3"/><polygon points="-19.8,57.1 -14.0,58.3 -14.0,58.9 -19.1,58.3"/><polygon points="209.6,57.1 215.4,58.3 215.4,58.9 210.3,58.3"/><polygon points="-240.2,55.3 -239.0,53.5 -236.4,52.9 -238.3,55.9 -239.6,56.5"/><polygon points="-10.8,55.3 -9.6,53.5 -7.0,52.9 -8.9,55.9 -10.2,56.5"/><polygon points="218.6,55.3 219.8,53.5 222.4,52.9 220.5,55.9 219.2,56.5"/><polygon points="-232.6,54.1 -228.1,54.7 -223.7,56.5 -220.5,59.4 -224.9,58.9 -228.1,58.3 -231.3,55.9"/><polygon points="-3.2,54.1 1.3,54.7 5.7,56.5 8.9,59.4 4.5,58.9 1.3,58.3 -1.9,55.9"/><polygon points="226.2,54.1 230.7,54.7 235.1,56.5 238.3,59.4 233.9,58.9 230.7,58.3 227.5,55.9"/><polygon points="-239.6,42.8 -238.3,42.8 -237.0,45.8 -235.8,49.3 -238.3,49.3 -239.6,46.4"/><polygon points="-10.2,42.8 -8.9,42.8 -7.6,45.8 -6.4,49.3 -8.9,49.3 -10.2,46.4"/><polygon points="219.2,42.8 220.5,42.8 221.8,45.8 223.0,49.3 220.5,49.3 219.2,46.4"/><polygon points="-243.4,66.6 -243.4,73.7 -240.9,74.3 -237.0,73.1 -232.6,71.9 -230.0,74.3 -226.9,76.1 -223.0,76.7 -220.5,75.5 -218.6,71.9 -218.6,68.4 -223.0,64.8 -225.6,60.0 -226.2,63.6 -229.4,62.4 -229.4,60.6 -232.6,60.6 -234.5,62.4 -238.3,63.6"/><polygon points="-14.0,66.6 -14.0,73.7 -11.5,74.3 -7.6,73.1 -3.2,71.9 -0.6,74.3 2.5,76.1 6.4,76.7 8.9,75.5 10.8,71.9 10.8,68.4 6.4,64.8 3.8,60.0 3.2,63.6 0.0,62.4 0.0,60.6 -3.2,60.6 -5.1,62.4 -8.9,63.6"/><polygon points="215.4,66.6 215.4,73.7 217.9,74.3 221.8,73.1 226.2,71.9 228.8,74.3 231.9,76.1 235.8,76.7 238.3,75.5 240.2,71.9 240.2,68.4 235.8,64.8 233.2,60.0 232.6,63.6 229.4,62.4 229.4,60.6 226.2,60.6 224.3,62.4 220.5,63.6"/><polygon points="-205.8,74.3 -202.6,76.1 -204.5,77.9 -206.5,79.7 -209.6,80.8 -207.7,79.1 -205.2,77.3"/><polygon points="23.6,74.3 26.8,76.1 24.9,77.9 22.9,79.7 19.8,80.8 21.7,79.1 24.2,77.3"/><polygon points="253.0,74.3 256.2,76.1 254.3,77.9 252.3,79.7 249.2,80.8 251.1,79.1 253.6,77.3"/><polygon points="-370.2,40.4 -363.9,41.6 -365.8,40.4 -368.3,39.8"/><polygon points="-140.8,40.4 -134.5,41.6 -136.4,40.4 -138.9,39.8"/><polygon points="88.6,40.4 94.9,41.6 93.0,40.4 90.5,39.8"/><polygon points="-282.9,11.3 -279.1,9.5 -272.7,7.7 -277.8,8.3 -281.7,10.1"/><polygon points="-53.5,11.3 -49.7,9.5 -43.3,7.7 -48.4,8.3 -52.3,10.1"/><polygon points="175.9,11.3 179.7,9.5 186.1,7.7 181.0,8.3 177.1,10.1"/><polygon points="-308.4,7.1 -300.1,7.1 -302.0,5.9 -307.1,5.9"/><polygon points="-79.0,7.1 -70.7,7.1 -72.6,5.9 -77.7,5.9"/><polygon points="150.4,7.1 158.7,7.1 156.8,5.9 151.7,5.9"/></clipPath><g clip-path="url(#landclip)"><ellipse cx="37.8" cy="62.6" rx="1.9" ry="1.2" fill="#e2c890" opacity="0.85"/><ellipse cx="108.9" cy="85.0" rx="1.1" ry="1.2" fill="#b6da82" opacity="0.46"/><ellipse cx="214.0" cy="41.1" rx="1.1" ry="1.5" fill="#e2c890" opacity="0.73"/><ellipse cx="100.2" cy="87.6" rx="2.2" ry="1.1" fill="#a8d474" opacity="0.46"/><ellipse cx="75.5" cy="46.8" rx="1.0" ry="1.7" fill="#c8d68a" opacity="0.46"/><ellipse cx="170.0" cy="13.3" rx="2.3" ry="0.6" fill="#d8cc98" opacity="0.67"/><ellipse cx="78.7" cy="45.7" rx="1.1" ry="0.6" fill="#e2c890" opacity="0.48"/><ellipse cx="45.3" cy="61.3" rx="2.2" ry="1.4" fill="#d8a86c" opacity="0.85"/><ellipse cx="16.3" cy="51.9" rx="1.8" ry="1.1" fill="#c8d68a" opacity="0.82"/><ellipse cx="203.6" cy="39.6" rx="1.5" ry="1.1" fill="#c8d088" opacity="0.58"/><ellipse cx="111.1" cy="27.8" rx="2.3" ry="0.8" fill="#a8d474" opacity="0.45"/><ellipse cx="16.1" cy="55.1" rx="1.7" ry="1.3" fill="#c8d68a" opacity="0.67"/><ellipse cx="142.8" cy="20.8" rx="1.1" ry="1.0" fill="#dccf96" opacity="0.59"/><ellipse cx="137.0" cy="31.1" rx="1.0" ry="0.7" fill="#cfd892" opacity="0.76"/><ellipse cx="86.0" cy="62.0" rx="2.0" ry="1.7" fill="#e2c890" opacity="0.61"/><ellipse cx="226.9" cy="84.8" rx="1.9" ry="1.7" fill="#a8d474" opacity="0.65"/><ellipse cx="153.0" cy="82.8" rx="1.2" ry="1.3" fill="#a8d474" opacity="0.77"/><ellipse cx="177.5" cy="45.6" rx="2.3" ry="0.7" fill="#d4c27e" opacity="0.71"/><ellipse cx="8.0" cy="26.4" rx="1.5" ry="1.6" fill="#cfd892" opacity="0.84"/><ellipse cx="171.1" cy="45.3" rx="1.3" ry="1.8" fill="#d8a86c" opacity="0.81"/><ellipse cx="109.9" cy="84.1" rx="2.4" ry="1.0" fill="#cfd892" opacity="0.80"/><ellipse cx="138.0" cy="40.9" rx="1.8" ry="1.6" fill="#d4c27e" opacity="0.51"/><ellipse cx="135.0" cy="17.4" rx="2.1" ry="1.1" fill="#d8cc98" opacity="0.83"/><ellipse cx="5.4" cy="54.7" rx="2.0" ry="1.6" fill="#8cc860" opacity="0.55"/><ellipse cx="93.0" cy="84.6" rx="2.4" ry="0.8" fill="#b6da82" opacity="0.61"/><ellipse cx="42.8" cy="58.6" rx="2.2" ry="0.7" fill="#9fd06a" opacity="0.71"/><ellipse cx="29.0" cy="50.2" rx="1.4" ry="1.2" fill="#b4dc80" opacity="0.70"/><ellipse cx="41.7" cy="76.3" rx="1.2" ry="1.5" fill="#b6da82" opacity="0.69"/><ellipse cx="115.8" cy="67.1" rx="0.9" ry="1.7" fill="#c8d088" opacity="0.64"/><ellipse cx="14.6" cy="68.6" rx="1.1" ry="1.5" fill="#d4c27e" opacity="0.84"/><ellipse cx="138.8" cy="67.2" rx="1.2" ry="0.8" fill="#d4c27e" opacity="0.78"/><ellipse cx="184.2" cy="46.2" rx="1.8" ry="1.3" fill="#dcb87a" opacity="0.65"/><ellipse cx="168.5" cy="85.3" rx="1.4" ry="1.4" fill="#e0d4a0" opacity="0.75"/><ellipse cx="43.5" cy="56.5" rx="1.4" ry="0.8" fill="#9fd06a" opacity="0.58"/><ellipse cx="227.8" cy="14.8" rx="0.9" ry="0.7" fill="#d0c090" opacity="0.65"/><ellipse cx="217.3" cy="61.8" rx="2.1" ry="1.2" fill="#d8a86c" opacity="0.61"/><ellipse cx="92.1" cy="24.5" rx="0.9" ry="1.1" fill="#cfd892" opacity="0.56"/><ellipse cx="135.2" cy="39.2" rx="1.6" ry="1.6" fill="#c8d088" opacity="0.60"/><ellipse cx="111.7" cy="57.8" rx="2.5" ry="0.7" fill="#8cc860" opacity="0.52"/><ellipse cx="85.6" cy="55.6" rx="1.2" ry="1.1" fill="#c8d68a" opacity="0.55"/><ellipse cx="210.3" cy="37.6" rx="1.9" ry="1.6" fill="#dcb87a" opacity="0.51"/><ellipse cx="46.3" cy="77.8" rx="2.1" ry="0.7" fill="#cfd892" opacity="0.48"/><ellipse cx="69.4" cy="83.4" rx="2.1" ry="1.2" fill="#b6da82" opacity="0.85"/><ellipse cx="38.2" cy="41.5" rx="2.0" ry="1.0" fill="#d8a86c" opacity="0.72"/><ellipse cx="59.8" cy="84.0" rx="1.4" ry="0.9" fill="#cfd892" opacity="0.81"/><ellipse cx="116.3" cy="25.5" rx="2.0" ry="1.5" fill="#cfd892" opacity="0.83"/><ellipse cx="107.1" cy="41.8" rx="1.9" ry="0.9" fill="#e2c890" opacity="0.72"/><ellipse cx="142.6" cy="14.1" rx="2.6" ry="0.9" fill="#b8d080" opacity="0.77"/><ellipse cx="214.4" cy="63.8" rx="0.8" ry="1.2" fill="#dcb87a" opacity="0.61"/><ellipse cx="101.2" cy="42.9" rx="2.6" ry="1.7" fill="#e2c890" opacity="0.49"/><ellipse cx="70.9" cy="43.2" rx="2.4" ry="1.0" fill="#e2c890" opacity="0.68"/><ellipse cx="209.2" cy="41.4" rx="2.3" ry="1.0" fill="#c8d088" opacity="0.61"/><ellipse cx="126.6" cy="24.5" rx="2.2" ry="1.6" fill="#a8d474" opacity="0.80"/><ellipse cx="4.0" cy="53.7" rx="0.9" ry="1.7" fill="#b4dc80" opacity="0.51"/><ellipse cx="114.1" cy="49.2" rx="1.8" ry="1.2" fill="#c8d68a" opacity="0.51"/><ellipse cx="35.2" cy="29.6" rx="2.0" ry="0.6" fill="#b6da82" opacity="0.72"/><ellipse cx="42.7" cy="14.0" rx="2.3" ry="1.0" fill="#b8d080" opacity="0.47"/><ellipse cx="8.5" cy="46.6" rx="2.0" ry="1.4" fill="#b4dc80" opacity="0.46"/><ellipse cx="53.4" cy="35.4" rx="1.3" ry="0.8" fill="#e2c890" opacity="0.74"/><ellipse cx="120.3" cy="12.4" rx="2.3" ry="0.9" fill="#c6d48c" opacity="0.74"/><ellipse cx="139.2" cy="57.9" rx="2.0" ry="0.6" fill="#c8d68a" opacity="0.65"/><ellipse cx="37.2" cy="75.8" rx="2.3" ry="1.7" fill="#b6da82" opacity="0.54"/><ellipse cx="178.4" cy="80.0" rx="1.8" ry="1.7" fill="#dccf96" opacity="0.61"/><ellipse cx="216.1" cy="82.8" rx="2.2" ry="0.6" fill="#dccf96" opacity="0.52"/><ellipse cx="60.8" cy="8.1" rx="1.5" ry="1.5" fill="#d8cc98" opacity="0.82"/><ellipse cx="123.0" cy="78.3" rx="1.2" ry="1.8" fill="#e0d4a0" opacity="0.56"/><ellipse cx="103.2" cy="68.9" rx="2.5" ry="1.7" fill="#e2c890" opacity="0.61"/><ellipse cx="40.9" cy="50.3" rx="2.3" ry="1.0" fill="#b4dc80" opacity="0.85"/><ellipse cx="209.1" cy="84.3" rx="2.2" ry="1.8" fill="#cfd892" opacity="0.75"/><ellipse cx="48.8" cy="49.7" rx="1.5" ry="1.8" fill="#c8d68a" opacity="0.50"/><ellipse cx="55.1" cy="40.8" rx="2.0" ry="1.5" fill="#e2c890" opacity="0.71"/><ellipse cx="58.0" cy="41.3" rx="1.5" ry="1.2" fill="#d4c27e" opacity="0.47"/><ellipse cx="197.0" cy="22.9" rx="2.2" ry="1.0" fill="#a8d474" opacity="0.77"/><ellipse cx="169.0" cy="65.9" rx="2.6" ry="1.1" fill="#c8d088" opacity="0.46"/><ellipse cx="178.4" cy="77.1" rx="1.3" ry="1.6" fill="#a8d474" opacity="0.53"/><ellipse cx="52.1" cy="66.2" rx="2.3" ry="1.2" fill="#dcb87a" opacity="0.46"/><ellipse cx="210.2" cy="16.8" rx="1.4" ry="1.0" fill="#d0c090" opacity="0.69"/><ellipse cx="159.0" cy="77.0" rx="2.2" ry="1.0" fill="#dccf96" opacity="0.74"/><ellipse cx="105.2" cy="16.2" rx="2.4" ry="1.3" fill="#b8d080" opacity="0.81"/><ellipse cx="17.7" cy="31.3" rx="1.9" ry="0.8" fill="#dccf96" opacity="0.49"/><ellipse cx="141.6" cy="59.0" rx="1.7" ry="0.8" fill="#8cc860" opacity="0.54"/><ellipse cx="157.5" cy="33.5" rx="2.0" ry="1.0" fill="#cfd892" opacity="0.79"/><ellipse cx="65.1" cy="27.5" rx="2.3" ry="0.7" fill="#e0d4a0" opacity="0.71"/><ellipse cx="4.9" cy="65.4" rx="1.9" ry="1.1" fill="#d8a86c" opacity="0.67"/><ellipse cx="125.9" cy="41.5" rx="0.8" ry="1.7" fill="#e2c890" opacity="0.59"/><ellipse cx="173.2" cy="58.1" rx="1.6" ry="1.2" fill="#b4dc80" opacity="0.63"/><ellipse cx="53.3" cy="75.9" rx="2.4" ry="1.6" fill="#e0d4a0" opacity="0.81"/><ellipse cx="171.9" cy="34.3" rx="1.1" ry="0.6" fill="#d4c27e" opacity="0.58"/><ellipse cx="75.3" cy="23.7" rx="0.9" ry="0.8" fill="#cfd892" opacity="0.45"/><ellipse cx="36.3" cy="18.6" rx="1.8" ry="0.8" fill="#c6d48c" opacity="0.70"/><ellipse cx="28.1" cy="16.2" rx="2.1" ry="0.8" fill="#c6d48c" opacity="0.48"/><ellipse cx="55.6" cy="55.2" rx="1.0" ry="0.8" fill="#9fd06a" opacity="0.61"/><ellipse cx="220.1" cy="72.1" rx="2.0" ry="1.7" fill="#c8d088" opacity="0.46"/><ellipse cx="114.3" cy="79.1" rx="2.2" ry="1.3" fill="#cfd892" opacity="0.47"/><ellipse cx="146.9" cy="69.9" rx="1.3" ry="1.2" fill="#d4c27e" opacity="0.66"/><ellipse cx="37.6" cy="34.0" rx="2.0" ry="1.4" fill="#c8d088" opacity="0.82"/><ellipse cx="67.2" cy="15.5" rx="1.9" ry="1.2" fill="#d8cc98" opacity="0.75"/><ellipse cx="34.3" cy="31.3" rx="1.0" ry="1.4" fill="#a8d474" opacity="0.81"/><ellipse cx="11.3" cy="67.2" rx="2.3" ry="1.2" fill="#dcb87a" opacity="0.70"/><ellipse cx="108.6" cy="51.6" rx="1.5" ry="0.8" fill="#8cc860" opacity="0.70"/><ellipse cx="139.5" cy="41.7" rx="2.2" ry="0.6" fill="#d8a86c" opacity="0.53"/><ellipse cx="7.3" cy="23.6" rx="2.4" ry="1.0" fill="#cfd892" opacity="0.79"/><ellipse cx="221.2" cy="26.4" rx="1.4" ry="1.6" fill="#cfd892" opacity="0.56"/><ellipse cx="136.3" cy="74.2" rx="2.0" ry="1.2" fill="#dccf96" opacity="0.60"/><ellipse cx="207.1" cy="59.5" rx="1.3" ry="1.5" fill="#9fd06a" opacity="0.80"/><ellipse cx="56.4" cy="87.7" rx="1.4" ry="1.1" fill="#cfd892" opacity="0.74"/><ellipse cx="6.4" cy="53.4" rx="2.4" ry="0.9" fill="#b4dc80" opacity="0.77"/><ellipse cx="200.1" cy="79.3" rx="2.3" ry="1.8" fill="#a8d474" opacity="0.71"/><ellipse cx="152.7" cy="23.4" rx="1.1" ry="1.7" fill="#a8d474" opacity="0.72"/><ellipse cx="67.6" cy="16.6" rx="1.5" ry="0.8" fill="#c6d48c" opacity="0.75"/><ellipse cx="38.1" cy="15.1" rx="1.7" ry="0.7" fill="#b8d080" opacity="0.49"/><ellipse cx="117.1" cy="30.3" rx="1.6" ry="1.5" fill="#a8d474" opacity="0.76"/><ellipse cx="218.2" cy="51.4" rx="1.3" ry="0.6" fill="#8cc860" opacity="0.78"/><ellipse cx="224.7" cy="27.1" rx="1.9" ry="1.0" fill="#dccf96" opacity="0.79"/><ellipse cx="31.0" cy="34.3" rx="2.5" ry="1.0" fill="#e2c890" opacity="0.78"/><ellipse cx="63.9" cy="70.2" rx="0.8" ry="1.0" fill="#e2c890" opacity="0.77"/><ellipse cx="159.0" cy="47.4" rx="0.9" ry="0.6" fill="#c8d68a" opacity="0.68"/><ellipse cx="127.1" cy="75.7" rx="2.3" ry="1.3" fill="#cfd892" opacity="0.69"/><ellipse cx="45.6" cy="20.3" rx="2.1" ry="1.1" fill="#dccf96" opacity="0.54"/><ellipse cx="90.9" cy="70.9" rx="2.3" ry="1.5" fill="#dcb87a" opacity="0.55"/><ellipse cx="73.7" cy="30.9" rx="1.6" ry="1.6" fill="#b6da82" opacity="0.70"/><ellipse cx="206.4" cy="44.1" rx="2.1" ry="1.7" fill="#e2c890" opacity="0.52"/><ellipse cx="141.3" cy="86.5" rx="2.4" ry="1.7" fill="#b6da82" opacity="0.81"/><ellipse cx="127.4" cy="80.2" rx="2.5" ry="1.6" fill="#b6da82" opacity="0.70"/><ellipse cx="2.0" cy="68.8" rx="2.6" ry="1.2" fill="#dcb87a" opacity="0.70"/><ellipse cx="14.4" cy="84.0" rx="2.5" ry="1.1" fill="#e0d4a0" opacity="0.61"/><ellipse cx="225.7" cy="76.8" rx="2.2" ry="1.2" fill="#dccf96" opacity="0.52"/><ellipse cx="68.4" cy="68.6" rx="1.2" ry="0.7" fill="#e2c890" opacity="0.51"/><ellipse cx="94.3" cy="31.7" rx="1.3" ry="1.0" fill="#e0d4a0" opacity="0.75"/><ellipse cx="84.5" cy="47.9" rx="2.4" ry="1.4" fill="#b4dc80" opacity="0.63"/><ellipse cx="108.4" cy="48.3" rx="1.2" ry="1.3" fill="#c8d68a" opacity="0.76"/><ellipse cx="157.3" cy="31.9" rx="1.9" ry="1.5" fill="#e0d4a0" opacity="0.62"/><ellipse cx="52.7" cy="79.6" rx="2.4" ry="0.8" fill="#cfd892" opacity="0.84"/><ellipse cx="121.1" cy="80.2" rx="1.0" ry="1.5" fill="#dccf96" opacity="0.78"/><ellipse cx="110.4" cy="54.9" rx="1.3" ry="1.2" fill="#9fd06a" opacity="0.80"/><ellipse cx="147.6" cy="57.6" rx="1.0" ry="1.0" fill="#9fd06a" opacity="0.53"/><ellipse cx="123.4" cy="63.1" rx="1.7" ry="1.3" fill="#e2c890" opacity="0.71"/><ellipse cx="160.2" cy="87.7" rx="2.3" ry="1.1" fill="#e0d4a0" opacity="0.73"/><ellipse cx="98.9" cy="7.3" rx="1.3" ry="1.1" fill="#d8cc98" opacity="0.81"/><ellipse cx="150.7" cy="27.4" rx="2.1" ry="1.4" fill="#a8d474" opacity="0.65"/><ellipse cx="134.6" cy="79.3" rx="0.9" ry="1.0" fill="#dccf96" opacity="0.83"/><ellipse cx="121.5" cy="48.1" rx="1.3" ry="0.8" fill="#b4dc80" opacity="0.80"/><ellipse cx="23.7" cy="59.7" rx="2.4" ry="0.8" fill="#b4dc80" opacity="0.58"/><ellipse cx="120.8" cy="81.4" rx="1.9" ry="0.6" fill="#b6da82" opacity="0.79"/><ellipse cx="110.3" cy="76.5" rx="1.9" ry="0.8" fill="#a8d474" opacity="0.60"/><ellipse cx="69.4" cy="70.4" rx="2.6" ry="0.8" fill="#d8a86c" opacity="0.60"/><ellipse cx="143.6" cy="19.5" rx="2.2" ry="1.1" fill="#b6da82" opacity="0.72"/><ellipse cx="46.9" cy="48.2" rx="1.1" ry="0.7" fill="#c8d68a" opacity="0.47"/><ellipse cx="221.6" cy="71.6" rx="1.4" ry="1.1" fill="#c8d088" opacity="0.56"/><ellipse cx="186.2" cy="81.1" rx="0.9" ry="1.5" fill="#e0d4a0" opacity="0.68"/><ellipse cx="33.7" cy="48.3" rx="1.0" ry="1.6" fill="#8cc860" opacity="0.61"/><ellipse cx="150.5" cy="72.9" rx="2.2" ry="1.7" fill="#dcb87a" opacity="0.61"/><ellipse cx="147.8" cy="10.4" rx="2.2" ry="1.4" fill="#b8d080" opacity="0.55"/><ellipse cx="60.5" cy="53.1" rx="1.8" ry="0.9" fill="#8cc860" opacity="0.60"/><ellipse cx="78.6" cy="83.6" rx="2.4" ry="0.8" fill="#dccf96" opacity="0.79"/><ellipse cx="65.2" cy="73.6" rx="2.0" ry="0.6" fill="#b6da82" opacity="0.84"/><ellipse cx="16.0" cy="15.6" rx="1.7" ry="1.4" fill="#b8d080" opacity="0.77"/><ellipse cx="223.0" cy="33.0" rx="1.2" ry="0.9" fill="#cfd892" opacity="0.52"/><ellipse cx="172.0" cy="12.3" rx="1.5" ry="1.1" fill="#d0c090" opacity="0.65"/><ellipse cx="207.3" cy="67.7" rx="1.1" ry="1.6" fill="#c8d088" opacity="0.83"/><ellipse cx="164.1" cy="82.9" rx="1.1" ry="1.6" fill="#cfd892" opacity="0.56"/><ellipse cx="47.3" cy="19.8" rx="2.1" ry="0.7" fill="#e0d4a0" opacity="0.61"/><ellipse cx="159.7" cy="22.2" rx="1.0" ry="1.1" fill="#b6da82" opacity="0.78"/><ellipse cx="210.1" cy="77.9" rx="2.2" ry="0.6" fill="#cfd892" opacity="0.82"/><ellipse cx="182.9" cy="40.7" rx="0.9" ry="1.8" fill="#d4c27e" opacity="0.46"/><ellipse cx="123.7" cy="16.5" rx="2.5" ry="1.3" fill="#d0c090" opacity="0.58"/><ellipse cx="161.9" cy="64.2" rx="2.4" ry="1.3" fill="#d4c27e" opacity="0.78"/><ellipse cx="157.5" cy="27.5" rx="1.4" ry="0.8" fill="#b6da82" opacity="0.50"/><ellipse cx="137.1" cy="19.9" rx="0.9" ry="0.9" fill="#cfd892" opacity="0.61"/><ellipse cx="119.9" cy="70.8" rx="2.6" ry="0.9" fill="#dcb87a" opacity="0.77"/><ellipse cx="79.6" cy="44.9" rx="2.2" ry="0.9" fill="#c8d088" opacity="0.84"/><ellipse cx="169.5" cy="33.9" rx="1.8" ry="1.0" fill="#dcb87a" opacity="0.51"/><ellipse cx="109.4" cy="59.1" rx="2.0" ry="1.7" fill="#b4dc80" opacity="0.45"/><ellipse cx="3.5" cy="86.3" rx="2.5" ry="0.7" fill="#cfd892" opacity="0.55"/><ellipse cx="9.3" cy="58.8" rx="2.0" ry="0.9" fill="#b4dc80" opacity="0.53"/><ellipse cx="84.0" cy="45.6" rx="0.9" ry="0.8" fill="#d4c27e" opacity="0.56"/><ellipse cx="154.0" cy="29.0" rx="1.4" ry="1.0" fill="#e0d4a0" opacity="0.52"/><ellipse cx="194.5" cy="34.0" rx="1.8" ry="1.7" fill="#d4c27e" opacity="0.55"/><ellipse cx="59.3" cy="50.5" rx="2.3" ry="0.9" fill="#c8d68a" opacity="0.59"/><ellipse cx="126.4" cy="66.9" rx="0.9" ry="0.6" fill="#c8d088" opacity="0.51"/><ellipse cx="154.4" cy="43.2" rx="1.7" ry="1.6" fill="#d8a86c" opacity="0.62"/><ellipse cx="157.1" cy="24.7" rx="1.8" ry="1.8" fill="#e0d4a0" opacity="0.47"/><ellipse cx="110.4" cy="83.5" rx="2.6" ry="1.1" fill="#dccf96" opacity="0.62"/><ellipse cx="28.6" cy="79.6" rx="1.3" ry="1.0" fill="#cfd892" opacity="0.48"/><ellipse cx="76.7" cy="65.7" rx="1.4" ry="0.8" fill="#c8d088" opacity="0.59"/><ellipse cx="188.2" cy="24.2" rx="2.0" ry="0.8" fill="#e0d4a0" opacity="0.78"/><ellipse cx="165.5" cy="46.2" rx="1.9" ry="1.1" fill="#dcb87a" opacity="0.59"/><ellipse cx="34.5" cy="42.5" rx="1.8" ry="1.0" fill="#c8d088" opacity="0.60"/><ellipse cx="72.4" cy="22.2" rx="1.4" ry="1.3" fill="#cfd892" opacity="0.66"/><ellipse cx="181.3" cy="36.6" rx="2.0" ry="1.6" fill="#d8a86c" opacity="0.70"/><ellipse cx="39.8" cy="68.1" rx="1.5" ry="1.1" fill="#e2c890" opacity="0.72"/><ellipse cx="166.0" cy="8.5" rx="1.2" ry="1.4" fill="#d0c090" opacity="0.48"/><ellipse cx="140.9" cy="38.6" rx="1.9" ry="0.7" fill="#dcb87a" opacity="0.68"/><ellipse cx="179.6" cy="61.7" rx="1.5" ry="0.6" fill="#c8d088" opacity="0.72"/><ellipse cx="206.7" cy="22.2" rx="2.2" ry="1.6" fill="#b6da82" opacity="0.68"/><ellipse cx="148.0" cy="34.3" rx="2.2" ry="1.0" fill="#d8a86c" opacity="0.82"/><ellipse cx="174.3" cy="76.8" rx="1.7" ry="1.0" fill="#a8d474" opacity="0.59"/><ellipse cx="90.9" cy="64.8" rx="1.3" ry="1.3" fill="#c8d088" opacity="0.62"/><ellipse cx="215.8" cy="9.4" rx="1.2" ry="0.7" fill="#b8d080" opacity="0.81"/><ellipse cx="146.2" cy="43.6" rx="0.9" ry="1.4" fill="#d8a86c" opacity="0.59"/><ellipse cx="163.4" cy="49.6" rx="1.0" ry="1.6" fill="#c8d68a" opacity="0.54"/><ellipse cx="60.4" cy="40.8" rx="1.0" ry="1.7" fill="#dcb87a" opacity="0.79"/><ellipse cx="35.1" cy="51.2" rx="1.6" ry="1.6" fill="#b4dc80" opacity="0.77"/><ellipse cx="79.8" cy="42.4" rx="1.0" ry="1.0" fill="#e2c890" opacity="0.51"/><ellipse cx="42.3" cy="43.6" rx="2.0" ry="1.6" fill="#d8a86c" opacity="0.50"/><ellipse cx="102.4" cy="52.2" rx="1.1" ry="1.8" fill="#c8d68a" opacity="0.48"/><ellipse cx="18.4" cy="70.8" rx="2.0" ry="1.7" fill="#dcb87a" opacity="0.54"/><ellipse cx="52.9" cy="47.0" rx="2.5" ry="0.8" fill="#c8d68a" opacity="0.48"/><ellipse cx="70.5" cy="41.7" rx="2.2" ry="1.1" fill="#c8d088" opacity="0.46"/><ellipse cx="199.4" cy="71.0" rx="1.3" ry="1.1" fill="#c8d088" opacity="0.67"/><ellipse cx="150.0" cy="77.7" rx="2.2" ry="1.8" fill="#cfd892" opacity="0.48"/><ellipse cx="183.2" cy="42.9" rx="2.1" ry="0.7" fill="#d8a86c" opacity="0.83"/><ellipse cx="184.7" cy="30.7" rx="1.0" ry="0.8" fill="#b6da82" opacity="0.48"/><ellipse cx="0.8" cy="87.6" rx="1.4" ry="0.7" fill="#a8d474" opacity="0.75"/><ellipse cx="126.4" cy="33.1" rx="1.7" ry="1.2" fill="#b6da82" opacity="0.79"/><ellipse cx="68.9" cy="84.0" rx="2.2" ry="0.6" fill="#e0d4a0" opacity="0.70"/><ellipse cx="196.7" cy="43.4" rx="2.4" ry="1.8" fill="#c8d088" opacity="0.46"/><ellipse cx="190.2" cy="26.3" rx="1.7" ry="1.2" fill="#cfd892" opacity="0.63"/><ellipse cx="30.9" cy="22.7" rx="2.4" ry="1.6" fill="#cfd892" opacity="0.51"/><ellipse cx="68.5" cy="71.7" rx="1.1" ry="1.1" fill="#d8a86c" opacity="0.65"/><ellipse cx="6.8" cy="51.7" rx="2.3" ry="1.1" fill="#9fd06a" opacity="0.63"/><ellipse cx="82.4" cy="35.4" rx="1.2" ry="1.2" fill="#d8a86c" opacity="0.72"/><ellipse cx="112.7" cy="15.8" rx="0.9" ry="0.7" fill="#c6d48c" opacity="0.66"/><ellipse cx="210.9" cy="6.7" rx="2.2" ry="0.8" fill="#b8d080" opacity="0.57"/><ellipse cx="138.0" cy="66.6" rx="2.5" ry="1.4" fill="#d8a86c" opacity="0.56"/><ellipse cx="153.0" cy="65.2" rx="0.8" ry="0.6" fill="#c8d088" opacity="0.64"/><ellipse cx="23.2" cy="49.2" rx="1.0" ry="1.0" fill="#9fd06a" opacity="0.82"/><ellipse cx="104.0" cy="63.8" rx="1.5" ry="0.7" fill="#e2c890" opacity="0.46"/><ellipse cx="29.1" cy="86.6" rx="0.9" ry="1.5" fill="#a8d474" opacity="0.71"/><ellipse cx="217.2" cy="81.2" rx="1.5" ry="1.1" fill="#a8d474" opacity="0.72"/><ellipse cx="188.4" cy="18.2" rx="2.5" ry="0.7" fill="#d8cc98" opacity="0.66"/><ellipse cx="135.5" cy="13.4" rx="1.2" ry="1.0" fill="#d8cc98" opacity="0.74"/><ellipse cx="7.6" cy="11.9" rx="1.2" ry="1.1" fill="#c6d48c" opacity="0.83"/><ellipse cx="56.0" cy="48.0" rx="1.6" ry="1.5" fill="#b4dc80" opacity="0.51"/><ellipse cx="15.9" cy="41.6" rx="2.6" ry="0.6" fill="#e2c890" opacity="0.84"/><ellipse cx="23.6" cy="85.7" rx="2.5" ry="1.1" fill="#b6da82" opacity="0.69"/><ellipse cx="10.9" cy="42.7" rx="1.3" ry="0.8" fill="#dcb87a" opacity="0.54"/><ellipse cx="171.9" cy="81.0" rx="2.1" ry="1.6" fill="#dccf96" opacity="0.71"/><ellipse cx="120.8" cy="24.8" rx="2.5" ry="0.6" fill="#a8d474" opacity="0.56"/><ellipse cx="206.3" cy="55.8" rx="1.6" ry="0.9" fill="#c8d68a" opacity="0.82"/><ellipse cx="205.3" cy="60.7" rx="1.4" ry="1.3" fill="#d4c27e" opacity="0.70"/><ellipse cx="129.5" cy="46.4" rx="0.9" ry="1.7" fill="#b4dc80" opacity="0.53"/><ellipse cx="76.9" cy="13.0" rx="1.4" ry="0.8" fill="#b8d080" opacity="0.66"/><ellipse cx="124.9" cy="13.3" rx="1.8" ry="1.1" fill="#d8cc98" opacity="0.70"/><ellipse cx="113.4" cy="36.7" rx="2.3" ry="1.3" fill="#e2c890" opacity="0.48"/><ellipse cx="188.6" cy="7.8" rx="2.4" ry="0.8" fill="#d0c090" opacity="0.59"/><ellipse cx="98.2" cy="53.0" rx="2.4" ry="0.8" fill="#9fd06a" opacity="0.77"/><ellipse cx="58.8" cy="31.0" rx="2.4" ry="1.7" fill="#cfd892" opacity="0.59"/><ellipse cx="78.6" cy="14.6" rx="2.3" ry="0.7" fill="#d8cc98" opacity="0.47"/><ellipse cx="43.9" cy="56.6" rx="1.4" ry="0.7" fill="#c8d68a" opacity="0.73"/><ellipse cx="197.0" cy="12.2" rx="1.6" ry="1.8" fill="#d8cc98" opacity="0.67"/><ellipse cx="65.4" cy="20.8" rx="1.5" ry="1.5" fill="#a8d474" opacity="0.71"/><ellipse cx="174.7" cy="43.1" rx="0.9" ry="1.3" fill="#dcb87a" opacity="0.56"/><ellipse cx="170.7" cy="46.8" rx="1.2" ry="1.4" fill="#b4dc80" opacity="0.53"/><ellipse cx="89.5" cy="71.1" rx="1.8" ry="0.8" fill="#d8a86c" opacity="0.77"/><ellipse cx="86.9" cy="78.7" rx="1.3" ry="1.6" fill="#b6da82" opacity="0.65"/><ellipse cx="2.9" cy="84.9" rx="1.3" ry="1.3" fill="#cfd892" opacity="0.62"/><ellipse cx="175.6" cy="18.7" rx="1.6" ry="1.5" fill="#d0c090" opacity="0.76"/><ellipse cx="172.9" cy="80.2" rx="1.7" ry="1.2" fill="#b6da82" opacity="0.51"/><ellipse cx="143.2" cy="44.3" rx="1.9" ry="1.4" fill="#dcb87a" opacity="0.84"/><ellipse cx="188.6" cy="24.2" rx="1.0" ry="1.3" fill="#cfd892" opacity="0.75"/><ellipse cx="147.3" cy="76.6" rx="2.1" ry="1.5" fill="#a8d474" opacity="0.83"/><ellipse cx="216.0" cy="12.7" rx="1.0" ry="1.7" fill="#d8cc98" opacity="0.84"/><ellipse cx="219.8" cy="32.4" rx="1.8" ry="1.7" fill="#e0d4a0" opacity="0.78"/><ellipse cx="11.8" cy="55.8" rx="0.8" ry="1.4" fill="#9fd06a" opacity="0.60"/><ellipse cx="138.7" cy="61.5" rx="1.0" ry="1.7" fill="#c8d088" opacity="0.80"/><ellipse cx="170.9" cy="26.7" rx="1.2" ry="1.3" fill="#cfd892" opacity="0.82"/><ellipse cx="190.4" cy="15.0" rx="1.1" ry="1.0" fill="#d8cc98" opacity="0.63"/><ellipse cx="40.3" cy="61.3" rx="2.2" ry="1.1" fill="#c8d088" opacity="0.60"/><ellipse cx="129.1" cy="56.8" rx="1.0" ry="1.3" fill="#9fd06a" opacity="0.59"/><ellipse cx="109.2" cy="69.9" rx="2.4" ry="1.6" fill="#c8d088" opacity="0.69"/><ellipse cx="78.3" cy="24.1" rx="2.1" ry="1.3" fill="#b6da82" opacity="0.58"/><ellipse cx="15.1" cy="43.2" rx="1.7" ry="1.8" fill="#e2c890" opacity="0.54"/><ellipse cx="170.6" cy="66.8" rx="1.9" ry="1.4" fill="#dcb87a" opacity="0.46"/><ellipse cx="46.6" cy="70.3" rx="1.1" ry="1.4" fill="#c8d088" opacity="0.79"/><ellipse cx="57.3" cy="34.2" rx="0.9" ry="1.7" fill="#e2c890" opacity="0.67"/><ellipse cx="23.3" cy="33.4" rx="2.5" ry="0.9" fill="#e0d4a0" opacity="0.69"/><ellipse cx="66.4" cy="77.3" rx="2.2" ry="0.8" fill="#a8d474" opacity="0.49"/><ellipse cx="182.6" cy="53.2" rx="2.5" ry="1.2" fill="#c8d68a" opacity="0.52"/><ellipse cx="174.5" cy="39.5" rx="0.9" ry="1.7" fill="#dcb87a" opacity="0.66"/><ellipse cx="47.0" cy="76.4" rx="2.1" ry="0.8" fill="#a8d474" opacity="0.83"/><ellipse cx="228.4" cy="28.0" rx="2.4" ry="1.2" fill="#dccf96" opacity="0.53"/><ellipse cx="159.2" cy="76.8" rx="1.8" ry="1.7" fill="#e0d4a0" opacity="0.71"/><ellipse cx="54.7" cy="68.0" rx="2.2" ry="1.3" fill="#d4c27e" opacity="0.83"/><ellipse cx="184.3" cy="44.8" rx="0.9" ry="0.8" fill="#dcb87a" opacity="0.48"/><ellipse cx="166.3" cy="63.0" rx="2.4" ry="1.5" fill="#d8a86c" opacity="0.67"/><ellipse cx="99.7" cy="34.1" rx="1.3" ry="1.5" fill="#d8a86c" opacity="0.67"/><ellipse cx="30.6" cy="87.3" rx="2.1" ry="1.5" fill="#e0d4a0" opacity="0.63"/><ellipse cx="161.6" cy="64.7" rx="2.2" ry="1.6" fill="#d8a86c" opacity="0.58"/><ellipse cx="25.3" cy="6.9" rx="1.2" ry="0.8" fill="#b8d080" opacity="0.65"/><ellipse cx="66.1" cy="19.7" rx="2.1" ry="1.8" fill="#e0d4a0" opacity="0.51"/><ellipse cx="159.5" cy="71.6" rx="1.8" ry="1.4" fill="#d8a86c" opacity="0.64"/><ellipse cx="162.1" cy="19.9" rx="2.3" ry="1.3" fill="#cfd892" opacity="0.57"/><ellipse cx="22.4" cy="87.6" rx="1.4" ry="1.4" fill="#b6da82" opacity="0.85"/><ellipse cx="220.5" cy="31.4" rx="1.7" ry="1.1" fill="#cfd892" opacity="0.56"/><ellipse cx="164.4" cy="68.2" rx="1.0" ry="0.8" fill="#d8a86c" opacity="0.85"/><ellipse cx="46.5" cy="21.2" rx="0.9" ry="1.4" fill="#dccf96" opacity="0.70"/><ellipse cx="201.0" cy="11.9" rx="2.2" ry="1.1" fill="#d8cc98" opacity="0.66"/><ellipse cx="50.4" cy="68.7" rx="1.2" ry="0.7" fill="#d4c27e" opacity="0.52"/><ellipse cx="70.1" cy="39.1" rx="2.4" ry="0.9" fill="#d8a86c" opacity="0.50"/><ellipse cx="51.2" cy="23.0" rx="1.6" ry="1.1" fill="#cfd892" opacity="0.82"/><ellipse cx="119.1" cy="35.6" rx="1.7" ry="0.9" fill="#e2c890" opacity="0.75"/><ellipse cx="195.2" cy="28.0" rx="1.3" ry="1.4" fill="#b6da82" opacity="0.73"/><ellipse cx="73.8" cy="17.6" rx="2.4" ry="1.2" fill="#d0c090" opacity="0.54"/><ellipse cx="146.4" cy="28.1" rx="1.2" ry="1.0" fill="#cfd892" opacity="0.64"/><ellipse cx="89.5" cy="74.1" rx="1.5" ry="1.4" fill="#b6da82" opacity="0.61"/><ellipse cx="175.7" cy="68.9" rx="2.3" ry="1.4" fill="#dcb87a" opacity="0.75"/><ellipse cx="63.2" cy="54.3" rx="0.9" ry="1.0" fill="#c8d68a" opacity="0.59"/><ellipse cx="175.0" cy="32.9" rx="2.1" ry="1.7" fill="#b6da82" opacity="0.81"/><ellipse cx="62.8" cy="11.8" rx="1.3" ry="0.9" fill="#c6d48c" opacity="0.79"/><ellipse cx="226.2" cy="9.8" rx="2.3" ry="1.3" fill="#d8cc98" opacity="0.61"/><ellipse cx="171.6" cy="29.4" rx="2.3" ry="0.8" fill="#a8d474" opacity="0.58"/><ellipse cx="51.2" cy="16.5" rx="2.4" ry="1.7" fill="#c6d48c" opacity="0.75"/><ellipse cx="83.7" cy="74.7" rx="2.1" ry="1.6" fill="#e0d4a0" opacity="0.49"/><ellipse cx="198.0" cy="81.2" rx="1.5" ry="1.8" fill="#cfd892" opacity="0.81"/><ellipse cx="77.7" cy="70.3" rx="1.6" ry="1.5" fill="#d8a86c" opacity="0.49"/><ellipse cx="94.3" cy="32.4" rx="2.1" ry="1.7" fill="#a8d474" opacity="0.77"/><ellipse cx="98.5" cy="17.4" rx="2.5" ry="0.6" fill="#c6d48c" opacity="0.68"/><ellipse cx="156.2" cy="86.4" rx="2.5" ry="1.2" fill="#b6da82" opacity="0.50"/><ellipse cx="147.7" cy="85.3" rx="2.2" ry="1.6" fill="#cfd892" opacity="0.48"/><ellipse cx="87.7" cy="80.0" rx="1.3" ry="1.3" fill="#b6da82" opacity="0.56"/><ellipse cx="128.9" cy="55.9" rx="2.5" ry="1.1" fill="#9fd06a" opacity="0.68"/><ellipse cx="123.0" cy="27.5" rx="2.4" ry="0.6" fill="#a8d474" opacity="0.53"/><ellipse cx="9.7" cy="65.0" rx="1.6" ry="1.5" fill="#d8a86c" opacity="0.68"/><ellipse cx="219.1" cy="59.0" rx="1.1" ry="1.6" fill="#9fd06a" opacity="0.48"/><ellipse cx="144.5" cy="82.3" rx="2.1" ry="1.7" fill="#e0d4a0" opacity="0.50"/><ellipse cx="42.3" cy="44.2" rx="1.0" ry="1.2" fill="#d4c27e" opacity="0.81"/><ellipse cx="52.2" cy="9.0" rx="1.2" ry="1.8" fill="#c6d48c" opacity="0.65"/><ellipse cx="124.9" cy="7.3" rx="1.9" ry="0.9" fill="#d0c090" opacity="0.54"/><ellipse cx="84.6" cy="76.9" rx="0.9" ry="1.5" fill="#e0d4a0" opacity="0.69"/><ellipse cx="97.9" cy="18.6" rx="1.7" ry="1.2" fill="#d0c090" opacity="0.75"/><ellipse cx="2.7" cy="54.1" rx="1.7" ry="0.8" fill="#c8d68a" opacity="0.68"/><ellipse cx="43.1" cy="46.7" rx="1.7" ry="1.5" fill="#b4dc80" opacity="0.48"/><ellipse cx="201.1" cy="82.9" rx="1.1" ry="0.7" fill="#a8d474" opacity="0.71"/><ellipse cx="51.2" cy="71.8" rx="1.8" ry="0.9" fill="#d8a86c" opacity="0.53"/><ellipse cx="152.8" cy="57.2" rx="0.9" ry="1.4" fill="#9fd06a" opacity="0.83"/><ellipse cx="173.5" cy="65.8" rx="1.7" ry="1.2" fill="#d8a86c" opacity="0.70"/><ellipse cx="29.9" cy="76.2" rx="1.0" ry="1.3" fill="#e0d4a0" opacity="0.59"/><ellipse cx="186.4" cy="77.3" rx="1.2" ry="1.0" fill="#cfd892" opacity="0.49"/><ellipse cx="53.1" cy="72.7" rx="1.0" ry="1.5" fill="#dcb87a" opacity="0.76"/><ellipse cx="83.9" cy="12.6" rx="1.3" ry="1.5" fill="#d0c090" opacity="0.62"/><ellipse cx="144.7" cy="73.9" rx="1.1" ry="0.7" fill="#a8d474" opacity="0.54"/><ellipse cx="50.3" cy="46.5" rx="1.1" ry="0.9" fill="#b4dc80" opacity="0.53"/><ellipse cx="56.3" cy="82.1" rx="1.5" ry="1.6" fill="#e0d4a0" opacity="0.67"/><ellipse cx="127.2" cy="7.8" rx="1.4" ry="0.9" fill="#b8d080" opacity="0.73"/><ellipse cx="193.9" cy="61.4" rx="2.5" ry="1.2" fill="#d8a86c" opacity="0.84"/><ellipse cx="110.6" cy="59.9" rx="1.5" ry="1.5" fill="#8cc860" opacity="0.46"/><ellipse cx="16.3" cy="44.1" rx="1.5" ry="0.6" fill="#d4c27e" opacity="0.58"/><ellipse cx="84.4" cy="50.9" rx="1.3" ry="1.1" fill="#c8d68a" opacity="0.80"/><ellipse cx="82.1" cy="24.0" rx="2.4" ry="1.8" fill="#b6da82" opacity="0.56"/><ellipse cx="178.6" cy="62.8" rx="1.9" ry="1.2" fill="#d4c27e" opacity="0.68"/><ellipse cx="215.2" cy="14.7" rx="1.4" ry="0.8" fill="#d0c090" opacity="0.83"/><ellipse cx="121.7" cy="74.7" rx="2.4" ry="1.7" fill="#cfd892" opacity="0.70"/><ellipse cx="4.6" cy="24.0" rx="1.7" ry="1.4" fill="#e0d4a0" opacity="0.54"/><ellipse cx="221.3" cy="33.0" rx="1.9" ry="1.7" fill="#a8d474" opacity="0.68"/><ellipse cx="184.6" cy="29.0" rx="1.3" ry="1.2" fill="#e0d4a0" opacity="0.77"/><ellipse cx="28.3" cy="85.3" rx="2.0" ry="1.3" fill="#b6da82" opacity="0.73"/><ellipse cx="85.2" cy="11.9" rx="2.3" ry="1.2" fill="#c6d48c" opacity="0.84"/><ellipse cx="69.3" cy="52.8" rx="2.1" ry="1.4" fill="#c8d68a" opacity="0.47"/><ellipse cx="182.7" cy="9.1" rx="1.4" ry="1.0" fill="#c6d48c" opacity="0.81"/><ellipse cx="127.2" cy="51.6" rx="2.0" ry="0.6" fill="#c8d68a" opacity="0.71"/><ellipse cx="163.3" cy="78.9" rx="2.1" ry="0.8" fill="#cfd892" opacity="0.67"/><ellipse cx="26.0" cy="84.6" rx="2.0" ry="1.5" fill="#dccf96" opacity="0.49"/><ellipse cx="45.9" cy="78.0" rx="1.1" ry="1.4" fill="#e0d4a0" opacity="0.54"/><ellipse cx="43.4" cy="77.1" rx="1.1" ry="1.6" fill="#b6da82" opacity="0.81"/><ellipse cx="152.7" cy="84.6" rx="0.9" ry="1.2" fill="#cfd892" opacity="0.57"/><ellipse cx="79.2" cy="30.2" rx="1.5" ry="1.1" fill="#e0d4a0" opacity="0.56"/><ellipse cx="226.1" cy="57.4" rx="0.9" ry="1.0" fill="#8cc860" opacity="0.82"/><ellipse cx="162.8" cy="71.0" rx="2.4" ry="1.8" fill="#d4c27e" opacity="0.75"/><ellipse cx="107.7" cy="84.9" rx="0.9" ry="0.9" fill="#e0d4a0" opacity="0.50"/><ellipse cx="103.6" cy="40.9" rx="2.2" ry="0.8" fill="#dcb87a" opacity="0.65"/><ellipse cx="119.7" cy="59.7" rx="2.5" ry="0.7" fill="#9fd06a" opacity="0.63"/><ellipse cx="210.7" cy="80.9" rx="2.1" ry="1.5" fill="#b6da82" opacity="0.71"/><ellipse cx="91.6" cy="55.6" rx="2.5" ry="1.6" fill="#8cc860" opacity="0.71"/><ellipse cx="122.8" cy="34.1" rx="1.6" ry="1.0" fill="#d4c27e" opacity="0.81"/><ellipse cx="124.2" cy="48.0" rx="1.9" ry="1.5" fill="#c8d68a" opacity="0.53"/><ellipse cx="197.0" cy="74.6" rx="1.0" ry="1.2" fill="#dccf96" opacity="0.61"/><ellipse cx="30.3" cy="70.0" rx="2.0" ry="1.1" fill="#e2c890" opacity="0.78"/><ellipse cx="87.5" cy="86.4" rx="1.7" ry="1.0" fill="#b6da82" opacity="0.78"/><ellipse cx="116.5" cy="33.9" rx="2.4" ry="1.4" fill="#dcb87a" opacity="0.76"/><ellipse cx="205.4" cy="64.4" rx="2.4" ry="1.3" fill="#e2c890" opacity="0.69"/><ellipse cx="15.1" cy="63.3" rx="2.1" ry="1.5" fill="#d8a86c" opacity="0.66"/><ellipse cx="139.0" cy="51.6" rx="2.1" ry="1.4" fill="#9fd06a" opacity="0.72"/><ellipse cx="49.0" cy="7.6" rx="2.2" ry="1.4" fill="#c6d48c" opacity="0.60"/><ellipse cx="137.6" cy="9.2" rx="2.1" ry="1.4" fill="#d0c090" opacity="0.64"/><ellipse cx="211.0" cy="40.0" rx="0.8" ry="0.7" fill="#d4c27e" opacity="0.57"/><ellipse cx="53.8" cy="13.3" rx="2.0" ry="1.3" fill="#b8d080" opacity="0.51"/><ellipse cx="147.4" cy="58.0" rx="1.3" ry="1.2" fill="#9fd06a" opacity="0.78"/><ellipse cx="127.4" cy="35.3" rx="2.1" ry="1.1" fill="#c8d088" opacity="0.73"/><ellipse cx="130.5" cy="85.7" rx="1.1" ry="1.3" fill="#dccf96" opacity="0.72"/><ellipse cx="219.5" cy="28.8" rx="1.2" ry="1.2" fill="#dccf96" opacity="0.79"/><ellipse cx="4.1" cy="21.3" rx="2.5" ry="1.4" fill="#cfd892" opacity="0.64"/><ellipse cx="93.6" cy="23.9" rx="1.9" ry="1.2" fill="#b6da82" opacity="0.48"/><ellipse cx="180.7" cy="41.9" rx="1.8" ry="0.6" fill="#dcb87a" opacity="0.81"/><ellipse cx="136.2" cy="87.1" rx="2.6" ry="1.1" fill="#a8d474" opacity="0.80"/><ellipse cx="213.8" cy="13.2" rx="2.3" ry="1.3" fill="#d0c090" opacity="0.69"/><ellipse cx="89.1" cy="84.1" rx="1.5" ry="1.8" fill="#a8d474" opacity="0.61"/><ellipse cx="117.6" cy="77.0" rx="2.4" ry="1.8" fill="#a8d474" opacity="0.78"/><ellipse cx="35.4" cy="40.2" rx="0.9" ry="1.1" fill="#c8d088" opacity="0.55"/><ellipse cx="144.3" cy="29.4" rx="2.2" ry="1.0" fill="#b6da82" opacity="0.66"/><ellipse cx="130.5" cy="53.9" rx="1.3" ry="0.6" fill="#8cc860" opacity="0.66"/><ellipse cx="162.2" cy="32.6" rx="0.9" ry="1.5" fill="#e0d4a0" opacity="0.60"/><ellipse cx="171.7" cy="17.5" rx="1.0" ry="1.4" fill="#d0c090" opacity="0.68"/><ellipse cx="150.1" cy="24.7" rx="1.8" ry="1.4" fill="#cfd892" opacity="0.73"/><ellipse cx="189.9" cy="12.6" rx="1.4" ry="1.6" fill="#d0c090" opacity="0.52"/><ellipse cx="65.1" cy="33.5" rx="1.2" ry="1.6" fill="#dccf96" opacity="0.50"/><ellipse cx="151.3" cy="80.3" rx="0.8" ry="1.1" fill="#b6da82" opacity="0.65"/><ellipse cx="48.4" cy="57.4" rx="1.7" ry="0.9" fill="#8cc860" opacity="0.76"/><ellipse cx="4.0" cy="59.9" rx="2.4" ry="1.2" fill="#b4dc80" opacity="0.52"/><ellipse cx="63.3" cy="43.0" rx="2.4" ry="1.2" fill="#d4c27e" opacity="0.54"/><ellipse cx="41.4" cy="77.6" rx="2.2" ry="1.8" fill="#dccf96" opacity="0.46"/><ellipse cx="20.0" cy="77.1" rx="1.4" ry="1.8" fill="#cfd892" opacity="0.70"/><ellipse cx="39.1" cy="19.3" rx="1.7" ry="1.4" fill="#a8d474" opacity="0.59"/><ellipse cx="215.4" cy="39.0" rx="1.5" ry="1.1" fill="#c8d088" opacity="0.80"/><ellipse cx="135.8" cy="15.1" rx="1.8" ry="1.2" fill="#c6d48c" opacity="0.58"/><ellipse cx="12.9" cy="56.8" rx="2.2" ry="1.5" fill="#c8d68a" opacity="0.61"/><ellipse cx="169.1" cy="35.3" rx="2.2" ry="0.7" fill="#d8a86c" opacity="0.72"/><ellipse cx="14.1" cy="54.2" rx="2.1" ry="0.7" fill="#c8d68a" opacity="0.65"/><ellipse cx="80.0" cy="70.1" rx="1.4" ry="0.8" fill="#c8d088" opacity="0.72"/><ellipse cx="57.3" cy="7.8" rx="0.9" ry="0.9" fill="#d0c090" opacity="0.83"/><ellipse cx="16.9" cy="53.8" rx="1.7" ry="1.2" fill="#9fd06a" opacity="0.66"/><ellipse cx="114.3" cy="68.2" rx="1.6" ry="0.9" fill="#e2c890" opacity="0.78"/><ellipse cx="50.8" cy="76.5" rx="0.9" ry="0.8" fill="#a8d474" opacity="0.83"/><ellipse cx="43.8" cy="21.4" rx="0.8" ry="1.7" fill="#e0d4a0" opacity="0.53"/><ellipse cx="171.2" cy="48.3" rx="1.6" ry="0.6" fill="#9fd06a" opacity="0.69"/><ellipse cx="162.9" cy="72.0" rx="2.4" ry="1.0" fill="#c8d088" opacity="0.56"/><ellipse cx="36.1" cy="53.7" rx="1.4" ry="1.4" fill="#8cc860" opacity="0.62"/><ellipse cx="75.9" cy="27.2" rx="1.3" ry="0.9" fill="#dccf96" opacity="0.62"/><ellipse cx="220.3" cy="76.1" rx="1.3" ry="1.0" fill="#b6da82" opacity="0.77"/><ellipse cx="188.9" cy="6.7" rx="1.4" ry="0.8" fill="#d0c090" opacity="0.70"/><ellipse cx="51.3" cy="38.9" rx="2.3" ry="0.9" fill="#d8a86c" opacity="0.73"/><ellipse cx="109.5" cy="76.5" rx="2.4" ry="1.0" fill="#cfd892" opacity="0.74"/><ellipse cx="205.0" cy="12.2" rx="2.1" ry="1.2" fill="#d0c090" opacity="0.76"/><ellipse cx="146.8" cy="48.4" rx="2.4" ry="0.9" fill="#9fd06a" opacity="0.83"/><ellipse cx="98.0" cy="19.7" rx="1.0" ry="0.9" fill="#cfd892" opacity="0.72"/><ellipse cx="4.2" cy="70.0" rx="1.9" ry="1.1" fill="#dcb87a" opacity="0.52"/><ellipse cx="6.5" cy="67.8" rx="1.4" ry="0.7" fill="#d8a86c" opacity="0.53"/><ellipse cx="29.6" cy="82.7" rx="1.3" ry="1.1" fill="#e0d4a0" opacity="0.73"/><ellipse cx="110.9" cy="72.1" rx="1.3" ry="1.2" fill="#e2c890" opacity="0.62"/><ellipse cx="101.8" cy="24.9" rx="1.8" ry="1.4" fill="#e0d4a0" opacity="0.62"/><ellipse cx="130.5" cy="33.1" rx="2.2" ry="1.1" fill="#cfd892" opacity="0.51"/><ellipse cx="28.2" cy="45.7" rx="1.5" ry="1.8" fill="#e2c890" opacity="0.53"/><ellipse cx="8.1" cy="12.4" rx="1.4" ry="1.6" fill="#d8cc98" opacity="0.46"/><ellipse cx="111.2" cy="42.8" rx="1.1" ry="1.4" fill="#d8a86c" opacity="0.53"/><ellipse cx="18.2" cy="12.4" rx="2.1" ry="1.0" fill="#c6d48c" opacity="0.61"/><ellipse cx="185.5" cy="19.0" rx="1.3" ry="1.2" fill="#d0c090" opacity="0.81"/><ellipse cx="12.5" cy="21.0" rx="2.0" ry="1.5" fill="#dccf96" opacity="0.54"/><ellipse cx="105.2" cy="87.7" rx="2.4" ry="1.2" fill="#dccf96" opacity="0.70"/><ellipse cx="208.1" cy="81.1" rx="2.0" ry="0.6" fill="#dccf96" opacity="0.82"/><ellipse cx="208.5" cy="13.2" rx="2.0" ry="1.6" fill="#c6d48c" opacity="0.67"/><ellipse cx="64.8" cy="36.8" rx="1.0" ry="1.1" fill="#d8a86c" opacity="0.47"/><ellipse cx="166.8" cy="37.0" rx="2.6" ry="0.6" fill="#e2c890" opacity="0.64"/><ellipse cx="20.0" cy="48.7" rx="1.3" ry="1.7" fill="#b4dc80" opacity="0.69"/><ellipse cx="116.9" cy="73.2" rx="1.4" ry="0.8" fill="#cfd892" opacity="0.56"/><ellipse cx="162.1" cy="9.3" rx="1.8" ry="1.7" fill="#c6d48c" opacity="0.78"/><ellipse cx="72.5" cy="35.4" rx="1.3" ry="0.7" fill="#dcb87a" opacity="0.69"/><ellipse cx="24.1" cy="76.7" rx="2.0" ry="1.3" fill="#dccf96" opacity="0.69"/><ellipse cx="104.3" cy="35.4" rx="2.0" ry="1.6" fill="#e2c890" opacity="0.81"/><ellipse cx="63.8" cy="74.9" rx="2.5" ry="0.9" fill="#cfd892" opacity="0.72"/><ellipse cx="104.8" cy="18.5" rx="1.2" ry="1.0" fill="#c6d48c" opacity="0.65"/><ellipse cx="165.2" cy="17.2" rx="2.3" ry="1.1" fill="#d8cc98" opacity="0.71"/><ellipse cx="169.2" cy="28.2" rx="1.9" ry="1.0" fill="#e0d4a0" opacity="0.75"/><ellipse cx="85.8" cy="20.1" rx="2.4" ry="1.1" fill="#a8d474" opacity="0.72"/><ellipse cx="181.3" cy="54.1" rx="1.2" ry="1.2" fill="#9fd06a" opacity="0.69"/><ellipse cx="40.9" cy="25.4" rx="1.0" ry="0.7" fill="#e0d4a0" opacity="0.62"/><ellipse cx="64.5" cy="48.9" rx="1.3" ry="1.1" fill="#c8d68a" opacity="0.63"/><ellipse cx="127.0" cy="71.6" rx="1.2" ry="1.0" fill="#e2c890" opacity="0.50"/><ellipse cx="73.2" cy="25.5" rx="1.1" ry="1.4" fill="#e0d4a0" opacity="0.68"/><ellipse cx="88.9" cy="20.1" rx="2.0" ry="0.8" fill="#cfd892" opacity="0.58"/><ellipse cx="65.2" cy="79.6" rx="1.6" ry="0.7" fill="#e0d4a0" opacity="0.80"/><ellipse cx="183.0" cy="11.2" rx="2.2" ry="1.7" fill="#b8d080" opacity="0.53"/><ellipse cx="197.3" cy="44.8" rx="1.4" ry="1.5" fill="#e2c890" opacity="0.66"/><ellipse cx="198.9" cy="44.2" rx="1.2" ry="1.3" fill="#dcb87a" opacity="0.82"/><ellipse cx="127.4" cy="21.8" rx="1.8" ry="1.2" fill="#cfd892" opacity="0.77"/><ellipse cx="181.9" cy="70.3" rx="2.2" ry="1.6" fill="#dcb87a" opacity="0.73"/><ellipse cx="126.9" cy="24.5" rx="1.2" ry="1.4" fill="#b6da82" opacity="0.81"/><ellipse cx="32.3" cy="56.6" rx="2.1" ry="1.3" fill="#b4dc80" opacity="0.79"/><ellipse cx="127.5" cy="77.2" rx="0.9" ry="1.7" fill="#cfd892" opacity="0.50"/><ellipse cx="88.0" cy="16.1" rx="1.3" ry="1.6" fill="#b8d080" opacity="0.47"/><ellipse cx="109.6" cy="14.8" rx="2.1" ry="1.5" fill="#b8d080" opacity="0.58"/><ellipse cx="78.8" cy="37.0" rx="1.5" ry="1.7" fill="#dcb87a" opacity="0.79"/><ellipse cx="83.8" cy="71.3" rx="1.5" ry="1.2" fill="#d4c27e" opacity="0.64"/><ellipse cx="211.3" cy="68.8" rx="1.0" ry="1.3" fill="#dcb87a" opacity="0.84"/><ellipse cx="111.7" cy="26.3" rx="1.5" ry="1.5" fill="#e0d4a0" opacity="0.61"/><ellipse cx="32.1" cy="65.7" rx="1.6" ry="1.4" fill="#d8a86c" opacity="0.59"/><ellipse cx="164.6" cy="10.0" rx="1.7" ry="1.3" fill="#d8cc98" opacity="0.48"/><ellipse cx="50.1" cy="13.3" rx="1.9" ry="1.0" fill="#c6d48c" opacity="0.85"/><ellipse cx="58.8" cy="63.7" rx="2.5" ry="1.2" fill="#dcb87a" opacity="0.50"/><ellipse cx="66.6" cy="38.4" rx="1.1" ry="0.7" fill="#d4c27e" opacity="0.80"/><ellipse cx="57.0" cy="64.0" rx="1.5" ry="1.7" fill="#d8a86c" opacity="0.58"/><ellipse cx="24.1" cy="17.3" rx="1.4" ry="1.1" fill="#d0c090" opacity="0.49"/><ellipse cx="49.1" cy="66.9" rx="2.3" ry="0.9" fill="#d8a86c" opacity="0.61"/><ellipse cx="184.6" cy="34.1" rx="2.4" ry="1.0" fill="#e2c890" opacity="0.59"/><ellipse cx="207.6" cy="51.4" rx="2.4" ry="1.3" fill="#9fd06a" opacity="0.74"/><ellipse cx="201.5" cy="83.0" rx="1.6" ry="1.2" fill="#a8d474" opacity="0.71"/><ellipse cx="1.7" cy="35.3" rx="1.4" ry="0.8" fill="#e2c890" opacity="0.70"/><ellipse cx="103.3" cy="72.8" rx="1.5" ry="1.5" fill="#d8a86c" opacity="0.59"/><ellipse cx="5.7" cy="19.4" rx="2.3" ry="1.4" fill="#b6da82" opacity="0.62"/><ellipse cx="141.9" cy="7.8" rx="1.9" ry="1.6" fill="#b8d080" opacity="0.66"/><ellipse cx="158.9" cy="70.2" rx="1.5" ry="0.7" fill="#d8a86c" opacity="0.71"/><ellipse cx="215.7" cy="8.1" rx="1.8" ry="1.7" fill="#c6d48c" opacity="0.80"/><ellipse cx="23.6" cy="37.7" rx="1.9" ry="1.0" fill="#dcb87a" opacity="0.77"/><ellipse cx="49.6" cy="7.0" rx="2.1" ry="0.8" fill="#c6d48c" opacity="0.77"/><ellipse cx="207.5" cy="79.0" rx="1.5" ry="1.3" fill="#dccf96" opacity="0.84"/><ellipse cx="216.2" cy="80.0" rx="0.9" ry="1.2" fill="#b6da82" opacity="0.47"/><ellipse cx="54.7" cy="19.6" rx="1.5" ry="1.6" fill="#e0d4a0" opacity="0.48"/><ellipse cx="72.6" cy="50.3" rx="2.5" ry="1.1" fill="#b4dc80" opacity="0.63"/><ellipse cx="47.2" cy="46.9" rx="2.0" ry="1.0" fill="#b4dc80" opacity="0.68"/><ellipse cx="225.4" cy="77.4" rx="1.0" ry="1.7" fill="#b6da82" opacity="0.80"/><ellipse cx="145.0" cy="73.0" rx="1.4" ry="0.8" fill="#e2c890" opacity="0.52"/><ellipse cx="14.9" cy="87.1" rx="2.3" ry="0.7" fill="#a8d474" opacity="0.46"/><ellipse cx="153.2" cy="15.6" rx="0.9" ry="1.0" fill="#d0c090" opacity="0.81"/><ellipse cx="90.1" cy="8.6" rx="2.0" ry="1.2" fill="#c6d48c" opacity="0.54"/><ellipse cx="11.6" cy="84.7" rx="2.0" ry="0.8" fill="#e0d4a0" opacity="0.49"/><ellipse cx="191.0" cy="52.0" rx="1.2" ry="1.6" fill="#9fd06a" opacity="0.77"/><ellipse cx="142.2" cy="69.1" rx="2.1" ry="1.5" fill="#c8d088" opacity="0.62"/><ellipse cx="78.5" cy="74.0" rx="1.3" ry="0.9" fill="#e0d4a0" opacity="0.68"/><ellipse cx="183.7" cy="48.1" rx="1.4" ry="0.9" fill="#c8d68a" opacity="0.62"/><ellipse cx="228.5" cy="9.3" rx="2.2" ry="1.3" fill="#d8cc98" opacity="0.61"/><ellipse cx="130.6" cy="33.9" rx="0.9" ry="0.9" fill="#a8d474" opacity="0.63"/></g><ellipse cx="198.8" cy="33.3" rx="8" ry="2.6" fill="#f6f3ea" opacity="0.95"/><ellipse cx="116.0" cy="8.9" rx="5" ry="4" fill="#cfb8b5" opacity="0.8"/></g><circle cx="19.6" cy="37.2" r="20" fill="#3f6a94" opacity="0.62"/><path d="M-2 9C6 14 14 25 19.6 37.2C23 46 24.5 52 25.5 58" stroke="#1c2a3a" stroke-width="0.8" fill="none" stroke-dasharray="2.2 1.6"/><path d="M9.5 64C13 80 22 96 44 102C70 108 100 107 112 102C124 96 130 80 134 58C138 32 142 16 156 9C166 5 178 6 190 6" stroke="#1c2a3a" stroke-width="0.8" fill="none" stroke-dasharray="2.2 1.6"/><path d="M8.2 59.5l4.8 5.2-3.2-.4-2.3 2.4z" fill="#111"/><circle cx="19.4" cy="37" r="4" fill="#e6493a"/><circle cx="18.6" cy="35.8" r="1.6" fill="#f5b3a8"/><path d="M110.5 34.5l4.3-4 4.3 4z" fill="#b5532f"/><rect x="111.5" y="34" width="6.6" height="3.8" fill="#f7f7f7"/><rect x="113.8" y="34.8" width="2" height="2" fill="#4a7ac8"/><path d="M110.2 34.7l4.6-4.3 4.6 4.3" stroke="#fff" stroke-width="0.8" fill="none"/><circle cx="201.2" cy="81.1" r="27.5" fill="url(#rg)"/><circle cx="201.2" cy="81.1" r="5" fill="none" stroke="#3d6f68" stroke-width="0.6"/><circle cx="201.2" cy="81.1" r="10" fill="none" stroke="#3d6f68" stroke-width="0.6"/><circle cx="201.2" cy="81.1" r="15" fill="none" stroke="#3d6f68" stroke-width="0.6"/><circle cx="201.2" cy="81.1" r="20" fill="none" stroke="#3d6f68" stroke-width="0.6"/><circle cx="201.2" cy="81.1" r="25" fill="none" stroke="#3d6f68" stroke-width="0.6"/><path d="M173.7 81.1h55M201.2 53.6v55" stroke="#4f837b" stroke-width="0.5"/><ellipse cx="228.5" cy="78" rx="2.5" ry="5.5" fill="#5fe25f"/><rect x="0" y="107" width="229.4" height="13" fill="url(#bb)"/></g></svg>
<div class="l b" style="left:542.7px;top:269.6px;font-size:6.40px;color:#1c2f4d;letter-spacing:0.75px">AOS: 00:31:33</div>
<div class="l b" style="left:720px;top:270.3px;font-size:8.40px;color:#1c3052;letter-spacing:1.25px">NOAA 19</div>
<div class="t b" style="left:653.5px;top:376.5px;font-size:8.10px;color:#fff;">Satellite Tracking is OFF</div>
<div class="t b" style="left:739.6px;top:343.5px;font-size:3.40px;color:#dfe;">AZ: 029.2° EL: -53.8°</div>
<div class="a" style="left:519.5px;top:390px;width:268.5px;height:1px;background:#cfd4da"></div>
<div class="a" style="left:522.7px;top:391px;width:41.299999999999955px;height:12.5px;background:#e8eaed;border:1px solid #cfd3d8;border-top:none"></div>
<div class="l" style="left:534.2px;top:394px;font-size:6.30px;color:#5f6670;letter-spacing:0.22px;">Digital ...</div>
<div class="a" style="left:564px;top:391px;width:44px;height:12.5px;background:#e8eaed;border:1px solid #cfd3d8;border-top:none"></div>
<div class="l" style="left:575.5px;top:394px;font-size:6.30px;color:#5f6670;letter-spacing:0.22px;">External...</div>
<div class="a" style="left:608px;top:391px;width:42.60000000000002px;height:12.5px;background:#e8eaed;border:1px solid #cfd3d8;border-top:none"></div>
<div class="l" style="left:619.5px;top:394px;font-size:6.30px;color:#5f6670;letter-spacing:0.22px;">Frequen...</div>
<div class="a" style="left:650.6px;top:390.5px;width:47.10000000000002px;height:13px;background:#fdfdfd;border:1px solid #b9bfc7;border-top:none"></div>
<div class="l" style="left:662.1px;top:394px;font-size:6.30px;color:#111;letter-spacing:0.22px;">Satellite...</div>
<div class="a" style="left:697.7px;top:391px;width:42.299999999999955px;height:12.5px;background:#e8eaed;border:1px solid #cfd3d8;border-top:none"></div>
<div class="l" style="left:709.2px;top:394px;font-size:6.30px;color:#5f6670;letter-spacing:0.22px;">FM Ster...</div>
<div class="a" style="left:740px;top:391px;width:42px;height:12.5px;background:#e8eaed;border:1px solid #cfd3d8;border-top:none"></div>
<div class="l" style="left:751.5px;top:394px;font-size:6.30px;color:#5f6670;letter-spacing:0.22px;">VFO Tu...</div>
<svg class="a" style="left:522px;top:391px" width="262" height="12" viewBox="0 0 262 12"><rect x="3" y="2" width="7" height="8" fill="#f7f7f7" stroke="#c9c9c9" stroke-width="0.6"/><rect x="44.5" y="2.5" width="8" height="7" rx="1" fill="#2d6fd0"/><rect x="46" y="4" width="5" height="3.6" fill="#e8f1fb"/><rect x="88.5" y="2" width="7" height="8" fill="#f2f2f2" stroke="#aaa" stroke-width="0.6"/><path d="M90 5l2 2 2-2" stroke="#666" stroke-width="0.7" fill="none"/><path d="M131 3l3 2.5M135.5 6.5l3 2.5" stroke="#333" stroke-width="1.6"/><path d="M133.6 6.4l1.8-1.4" stroke="#777" stroke-width="1.2"/><rect x="178" y="2" width="8" height="8" fill="#2c6a3a"/><rect x="180" y="4" width="4" height="4" fill="#cfe8d2"/><path d="M220 7l3-3 3 1 2 2-2 3h-4z" fill="#e6a53c"/></svg>
<div class="a" style="left:192.5px;top:407.5px;width:596px;height:299px;background:#f1f1f1"></div>
<div class="a" style="left:192.5px;top:407.5px;width:571.5px;height:1px;background:#b9bec5"></div>
<div class="a" style="left:192.5px;top:408.5px;width:1px;height:298px;background:#c9cdd3"></div>
<div class="a" style="left:193.5px;top:409px;width:569.5px;height:14.5px;background:linear-gradient(#f4f7fb,#d9e2ee 55%,#c3cfdf);border-bottom:1px solid #aab4c2"></div>
<div class="l b" style="left:197px;top:413.5px;font-size:6.30px;color:#222;word-spacing:0.8px;letter-spacing:0.1px">Freq / Mode / Filter</div>
<div class="l b" style="left:265.5px;top:413.7px;font-size:6.30px;color:#222;letter-spacing:0.15px;">Span</div>
<svg class="a" style="left:280px;top:410px" width="70" height="13" viewBox="0 0 70 13"><path d="M5.3 6.3h3.2l-1.6 2.1z" fill="#333"/><rect x="17" y="0.8" width="12.5" height="11" rx="1" fill="#1f469e" stroke="#8fb4e8" stroke-width="0.9"/><rect x="33.5" y="0.8" width="11.5" height="11" rx="1" fill="#3a3d44" stroke="#1e2024" stroke-width="0.7"/><path d="M49.5 1.5v10" stroke="#c3cad4" stroke-width="0.8"/><path d="M55.5 8.5h9M57 8.5a3 3 0 0 1 6 0" stroke="#b9c2cf" stroke-width="0.9" fill="none"/><path d="M55.5 10.3h9" stroke="#9fc0ea" stroke-width="1.1"/></svg>
<div class="t b" style="left:303.3px;top:413px;font-size:6.80px;color:#fff;">A</div>
<div class="t b" style="left:319.3px;top:413px;font-size:6.80px;color:#d9d9d9;">B</div>
<div class="a" style="left:352.5px;top:409.5px;width:43px;height:13.5px;background:#dbe8f7;border:1px solid #95b9e6"></div>
<div class="l b" style="left:355px;top:413.7px;font-size:6.20px;color:#222;letter-spacing:0.05px">DSP Options</div>
<div class="l b" style="left:400.5px;top:413.7px;font-size:6.30px;color:#222;letter-spacing:0.15px;">VFO Tuning</div>
<svg class="a" style="left:193.5px;top:424px" width="569.5" height="102" viewBox="0 0 569.5 102"><defs><linearGradient id="mg" x1="0" y1="0" x2="0" y2="1"><stop offset="0" stop-color="#c6ccc6"/><stop offset="0.5" stop-color="#8d8f8d"/><stop offset="1" stop-color="#000"/></linearGradient></defs><rect width="569.5" height="102" fill="#000"/><rect width="569.5" height="89.5" fill="#c7cdc7"/><rect y="87" width="569.5" height="8.5" fill="url(#mg)"/><polygon points="0,0 0.0,77.6 0.4,77.7 0.8,78.1 1.2,77.5 1.6,77.5 2.0,77.6 2.4,77.1 2.8,77.5 3.2,77.6 3.6,77.8 4.0,76.9 4.4,77.1 4.8,76.8 5.2,77.7 5.6,77.5 6.0,76.7 6.4,77.8 6.8,77.8 7.2,77.4 7.6,77.3 8.0,76.7 8.4,76.2 8.8,75.8 9.2,72.3 9.6,66.4 10.0,58.8 10.4,53.7 10.8,55.9 11.2,62.8 11.6,70.4 12.0,74.4 12.4,76.3 12.8,76.7 13.2,76.9 13.6,76.7 14.0,76.4 14.4,77.3 14.8,77.2 15.2,77.0 15.6,76.5 16.0,74.8 16.4,71.9 16.8,67.4 17.2,62.7 17.6,62.5 18.0,65.1 18.4,70.5 18.8,73.7 19.2,76.2 19.6,76.7 20.0,75.8 20.4,76.1 20.8,77.0 21.2,76.4 21.6,77.8 22.0,77.1 22.4,76.8 22.8,77.4 23.2,77.6 23.6,77.0 24.0,76.8 24.4,77.1 24.8,77.9 25.2,77.6 25.6,76.9 26.0,77.1 26.4,76.9 26.8,76.9 27.2,77.8 27.6,77.1 28.0,77.5 28.4,77.4 28.8,77.1 29.2,77.8 29.6,77.1 30.0,77.8 30.4,77.2 30.8,77.6 31.2,77.3 31.6,77.4 32.0,78.3 32.4,78.1 32.8,77.6 33.2,78.3 33.6,77.5 34.0,77.8 34.4,78.4 34.8,78.1 35.2,77.5 35.6,78.6 36.0,77.7 36.4,77.8 36.8,78.4 37.2,77.9 37.6,77.9 38.0,77.7 38.4,77.7 38.8,78.4 39.2,78.0 39.6,78.4 40.0,78.2 40.4,78.3 40.8,79.0 41.2,78.4 41.6,78.5 42.0,78.9 42.4,78.1 42.8,78.1 43.2,79.0 43.6,78.9 44.0,78.3 44.4,78.2 44.8,78.9 45.2,79.2 45.6,78.3 46.0,79.2 46.4,79.1 46.8,78.8 47.2,78.4 47.6,77.6 48.0,76.2 48.4,74.3 48.8,68.2 49.2,61.5 49.6,53.4 50.0,48.7 50.4,46.1 50.8,45.5 51.2,45.2 51.6,44.6 52.0,41.9 52.4,41.2 52.8,42.7 53.2,46.7 53.6,51.8 54.0,57.6 54.4,64.4 54.8,68.7 55.2,72.4 55.6,75.3 56.0,77.1 56.4,77.6 56.8,78.2 57.2,78.6 57.6,78.9 58.0,78.4 58.4,78.4 58.8,77.9 59.2,74.5 59.6,67.1 60.0,58.2 60.4,52.4 60.8,53.9 61.2,61.9 61.6,70.3 62.0,76.6 62.4,78.5 62.8,79.4 63.2,78.4 63.6,79.1 64.0,78.9 64.4,79.2 64.8,78.7 65.2,79.6 65.6,78.5 66.0,79.0 66.4,79.3 66.8,79.5 67.2,79.3 67.6,79.2 68.0,79.3 68.4,79.5 68.8,78.8 69.2,79.2 69.6,79.5 70.0,79.4 70.4,78.9 70.8,79.3 71.2,79.4 71.6,79.1 72.0,79.1 72.4,78.8 72.8,79.1 73.2,79.1 73.6,78.5 74.0,79.2 74.4,79.6 74.8,79.5 75.2,79.3 75.6,78.9 76.0,79.3 76.4,79.1 76.8,78.9 77.2,79.4 77.6,78.5 78.0,79.3 78.4,78.4 78.8,79.1 79.2,79.0 79.6,78.7 80.0,79.2 80.4,79.0 80.8,79.1 81.2,79.5 81.6,78.7 82.0,78.4 82.4,78.8 82.8,79.2 83.2,78.7 83.6,78.6 84.0,79.5 84.4,79.2 84.8,78.9 85.2,79.5 85.6,78.8 86.0,79.2 86.4,78.7 86.8,78.9 87.2,79.4 87.6,79.5 88.0,79.5 88.4,78.9 88.8,79.1 89.2,78.8 89.6,78.6 90.0,79.0 90.4,79.4 90.8,79.4 91.2,79.1 91.6,79.1 92.0,77.6 92.4,76.3 92.8,75.3 93.2,74.0 93.6,73.7 94.0,74.6 94.4,76.2 94.8,77.3 95.2,78.0 95.6,79.1 96.0,79.5 96.4,78.9 96.8,78.5 97.2,78.3 97.6,79.0 98.0,77.3 98.4,77.0 98.8,75.4 99.2,74.1 99.6,74.4 100.0,74.2 100.4,75.6 100.8,77.2 101.2,77.6 101.6,79.1 102.0,78.6 102.4,78.5 102.8,78.4 103.2,79.1 103.6,78.9 104.0,79.1 104.4,79.2 104.8,79.3 105.2,79.5 105.6,79.2 106.0,78.6 106.4,78.9 106.8,78.6 107.2,78.4 107.6,78.9 108.0,79.2 108.4,78.5 108.8,78.7 109.2,78.7 109.6,79.2 110.0,78.9 110.4,79.0 110.8,79.2 111.2,78.8 111.6,79.2 112.0,79.4 112.4,78.4 112.8,79.4 113.2,79.1 113.6,78.4 114.0,78.8 114.4,79.0 114.8,79.3 115.2,78.7 115.6,78.9 116.0,79.3 116.4,79.2 116.8,79.3 117.2,78.7 117.6,79.0 118.0,78.4 118.4,79.0 118.8,79.1 119.2,78.9 119.6,78.8 120.0,77.8 120.4,77.8 120.8,76.8 121.2,75.8 121.6,75.1 122.0,76.0 122.4,76.5 122.8,78.2 123.2,78.7 123.6,78.3 124.0,78.1 124.4,78.5 124.8,78.6 125.2,78.6 125.6,77.7 126.0,76.0 126.4,75.0 126.8,71.8 127.2,70.8 127.6,69.7 128.0,71.0 128.4,73.8 128.8,75.1 129.2,76.7 129.6,78.0 130.0,78.5 130.4,78.8 130.8,78.5 131.2,78.5 131.6,77.3 132.0,77.1 132.4,75.5 132.8,75.9 133.2,76.9 133.6,77.4 134.0,78.3 134.4,78.4 134.8,78.3 135.2,78.7 135.6,78.3 136.0,78.0 136.4,77.8 136.8,77.2 137.2,73.8 137.6,66.2 138.0,58.2 138.4,52.7 138.8,54.1 139.2,61.9 139.6,69.5 140.0,74.8 140.4,76.5 140.8,76.9 141.2,75.9 141.6,76.5 142.0,75.4 142.4,74.8 142.8,74.7 143.2,73.9 143.6,73.4 144.0,73.4 144.4,72.5 144.8,73.0 145.2,73.0 145.6,73.7 146.0,73.5 146.4,72.0 146.8,70.8 147.2,67.6 147.6,63.9 148.0,59.0 148.4,53.3 148.8,47.6 149.2,44.1 149.6,43.4 150.0,46.2 150.4,51.0 150.8,55.2 151.2,59.8 151.6,59.7 152.0,57.1 152.4,52.3 152.8,49.2 153.2,48.9 153.6,52.1 154.0,55.1 154.4,53.9 154.8,53.3 155.2,54.6 155.6,61.5 156.0,68.4 156.4,73.0 156.8,75.3 157.2,75.5 157.6,75.2 158.0,75.0 158.4,75.0 158.8,74.6 159.2,74.9 159.6,75.7 160.0,76.1 160.4,76.4 160.8,77.2 161.2,77.3 161.6,77.9 162.0,77.4 162.4,78.2 162.8,78.4 163.2,78.5 163.6,77.9 164.0,77.9 164.4,78.7 164.8,77.7 165.2,78.4 165.6,77.7 166.0,75.3 166.4,73.2 166.8,71.0 167.2,68.3 167.6,67.6 168.0,69.9 168.4,72.1 168.8,75.2 169.2,76.2 169.6,77.6 170.0,78.3 170.4,77.6 170.8,77.7 171.2,77.6 171.6,76.5 172.0,74.7 172.4,72.6 172.8,73.5 173.2,75.4 173.6,76.8 174.0,78.0 174.4,77.7 174.8,76.9 175.2,74.9 175.6,70.6 176.0,65.7 176.4,62.2 176.8,63.5 177.2,67.9 177.6,73.2 178.0,76.4 178.4,78.4 178.8,79.0 179.2,79.0 179.6,77.9 180.0,77.6 180.4,77.7 180.8,75.0 181.2,73.0 181.6,71.9 182.0,73.8 182.4,76.2 182.8,77.7 183.2,78.3 183.6,77.0 184.0,75.5 184.4,69.8 184.8,59.4 185.2,50.6 185.6,48.6 186.0,54.6 186.4,64.5 186.8,72.4 187.2,76.8 187.6,77.4 188.0,78.3 188.4,76.6 188.8,73.2 189.2,69.6 189.6,68.3 190.0,70.6 190.4,74.2 190.8,75.0 191.2,72.9 191.6,66.9 192.0,59.7 192.4,56.7 192.8,57.8 193.2,63.5 193.6,70.1 194.0,74.5 194.4,77.6 194.8,78.5 195.2,78.5 195.6,78.6 196.0,78.5 196.4,77.6 196.8,76.5 197.2,72.5 197.6,67.4 198.0,61.6 198.4,57.6 198.8,59.2 199.2,64.7 199.6,70.5 200.0,74.1 200.4,76.2 200.8,74.4 201.2,69.8 201.6,64.0 202.0,57.7 202.4,54.2 202.8,55.2 203.2,61.1 203.6,67.0 204.0,72.1 204.4,74.7 204.8,75.2 205.2,72.6 205.6,71.2 206.0,69.4 206.4,67.8 206.8,68.3 207.2,69.5 207.6,71.9 208.0,74.3 208.4,75.3 208.8,75.4 209.2,74.1 209.6,69.6 210.0,64.9 210.4,62.7 210.8,63.2 211.2,67.9 211.6,72.2 212.0,75.9 212.4,76.4 212.8,76.6 213.2,74.3 213.6,69.2 214.0,65.4 214.4,61.7 214.8,63.0 215.2,66.7 215.6,71.6 216.0,74.9 216.4,75.4 216.8,76.4 217.2,74.9 217.6,74.1 218.0,73.5 218.4,72.9 218.8,72.9 219.2,73.9 219.6,74.7 220.0,75.4 220.4,76.9 220.8,77.2 221.2,77.4 221.6,78.0 222.0,77.9 222.4,77.9 222.8,77.5 223.2,73.7 223.6,67.3 224.0,58.2 224.4,51.7 224.8,54.9 225.2,62.9 225.6,70.3 226.0,76.3 226.4,77.1 226.8,75.7 227.2,72.6 227.6,67.6 228.0,66.0 228.4,68.4 228.8,72.1 229.2,74.9 229.6,75.7 230.0,72.3 230.4,65.7 230.8,57.3 231.2,51.8 231.6,50.1 232.0,54.0 232.4,61.2 232.8,69.3 233.2,74.0 233.6,76.8 234.0,76.8 234.4,73.2 234.8,67.1 235.2,61.7 235.6,60.1 236.0,64.6 236.4,70.7 236.8,76.3 237.2,78.7 237.6,79.3 238.0,78.9 238.4,78.8 238.8,79.7 239.2,79.6 239.6,79.4 240.0,79.1 240.4,79.0 240.8,79.5 241.2,79.4 241.6,79.4 242.0,79.5 242.4,79.6 242.8,78.9 243.2,79.0 243.6,79.9 244.0,79.8 244.4,79.8 244.8,78.8 245.2,78.8 245.6,79.1 246.0,79.3 246.4,79.5 246.8,78.9 247.2,79.4 247.6,78.9 248.0,78.9 248.4,79.6 248.8,79.5 249.2,79.6 249.6,79.3 250.0,79.4 250.4,79.1 250.8,79.2 251.2,79.7 251.6,79.8 252.0,78.9 252.4,79.0 252.8,79.8 253.2,79.6 253.6,79.8 254.0,79.1 254.4,79.4 254.8,79.2 255.2,79.8 255.6,79.3 256.0,79.6 256.4,80.0 256.8,79.3 257.2,79.5 257.6,79.8 258.0,80.0 258.4,79.4 258.8,79.3 259.2,79.0 259.6,79.9 260.0,79.0 260.4,79.0 260.8,79.6 261.2,79.5 261.6,79.7 262.0,79.2 262.4,79.8 262.8,79.0 263.2,79.1 263.6,79.7 264.0,79.0 264.4,79.3 264.8,79.8 265.2,79.7 265.6,79.2 266.0,79.1 266.4,79.3 266.8,79.7 267.2,79.2 267.6,78.7 268.0,79.1 268.4,78.2 268.8,77.5 269.2,76.1 269.6,74.5 270.0,72.6 270.4,72.4 270.8,72.0 271.2,73.1 271.6,74.6 272.0,76.8 272.4,78.1 272.8,78.2 273.2,78.9 273.6,79.2 274.0,79.3 274.4,79.4 274.8,79.4 275.2,79.2 275.6,79.6 276.0,79.9 276.4,79.6 276.8,79.9 277.2,79.6 277.6,79.1 278.0,79.8 278.4,80.0 278.8,79.3 279.2,79.0 279.6,79.6 280.0,79.6 280.4,79.6 280.8,80.1 281.2,79.7 281.6,79.8 282.0,78.7 282.4,79.0 282.8,78.6 283.2,76.9 283.6,75.9 284.0,75.8 284.4,75.5 284.8,74.7 285.2,76.1 285.6,76.5 286.0,78.2 286.4,78.8 286.8,78.8 287.2,79.0 287.6,79.8 288.0,79.6 288.4,79.9 288.8,79.4 289.2,79.4 289.6,80.1 290.0,79.8 290.4,79.6 290.8,79.6 291.2,79.8 291.6,79.7 292.0,79.8 292.4,78.8 292.8,78.7 293.2,77.6 293.6,76.8 294.0,75.8 294.4,75.4 294.8,75.6 295.2,76.4 295.6,77.1 296.0,77.9 296.4,78.9 296.8,79.5 297.2,79.3 297.6,79.4 298.0,79.1 298.4,79.9 298.8,80.2 299.2,79.4 299.6,79.2 300.0,79.2 300.4,79.5 300.8,79.3 301.2,80.2 301.6,79.1 302.0,79.4 302.4,79.1 302.8,79.8 303.2,79.9 303.6,79.2 304.0,79.1 304.4,79.6 304.8,79.7 305.2,80.1 305.6,79.0 306.0,79.1 306.4,79.2 306.8,79.3 307.2,79.3 307.6,79.9 308.0,79.7 308.4,79.3 308.8,79.2 309.2,79.4 309.6,79.2 310.0,79.9 310.4,79.4 310.8,79.7 311.2,80.0 311.6,79.6 312.0,79.3 312.4,80.1 312.8,80.1 313.2,79.4 313.6,79.7 314.0,80.2 314.4,79.6 314.8,79.3 315.2,79.1 315.6,80.2 316.0,80.0 316.4,79.5 316.8,79.7 317.2,79.7 317.6,79.4 318.0,80.2 318.4,79.8 318.8,79.3 319.2,79.1 319.6,79.6 320.0,79.5 320.4,80.0 320.8,79.9 321.2,79.8 321.6,79.2 322.0,79.2 322.4,79.4 322.8,79.4 323.2,80.1 323.6,79.7 324.0,79.8 324.4,80.2 324.8,79.4 325.2,79.7 325.6,79.2 326.0,80.0 326.4,79.1 326.8,80.0 327.2,80.1 327.6,80.0 328.0,79.1 328.4,79.2 328.8,78.9 329.2,75.9 329.6,71.8 330.0,65.9 330.4,62.7 330.8,63.6 331.2,69.3 331.6,74.1 332.0,78.0 332.4,78.3 332.8,77.5 333.2,72.4 333.6,66.5 334.0,58.3 334.4,54.3 334.8,55.8 335.2,61.8 335.6,70.2 336.0,75.1 336.4,78.0 336.8,78.8 337.2,79.4 337.6,79.6 338.0,79.9 338.4,79.3 338.8,78.8 339.2,75.6 339.6,70.8 340.0,64.3 340.4,60.8 340.8,62.1 341.2,67.8 341.6,73.2 342.0,77.5 342.4,79.4 342.8,79.3 343.2,79.8 343.6,79.7 344.0,79.1 344.4,80.3 344.8,80.1 345.2,79.4 345.6,79.9 346.0,79.5 346.4,79.6 346.8,79.8 347.2,79.5 347.6,79.5 348.0,79.6 348.4,79.9 348.8,79.4 349.2,79.4 349.6,80.0 350.0,79.4 350.4,79.9 350.8,78.9 351.2,78.1 351.6,76.1 352.0,75.2 352.4,73.5 352.8,73.9 353.2,75.1 353.6,77.3 354.0,78.6 354.4,78.8 354.8,79.4 355.2,80.1 355.6,79.7 356.0,78.7 356.4,77.6 356.8,74.6 357.2,69.2 357.6,61.9 358.0,53.9 358.4,50.7 358.8,51.5 359.2,57.4 359.6,64.0 360.0,67.2 360.4,66.2 360.8,63.5 361.2,64.1 361.6,68.6 362.0,73.4 362.4,77.4 362.8,79.4 363.2,80.2 363.6,80.1 364.0,79.9 364.4,79.6 364.8,77.6 365.2,74.4 365.6,67.2 366.0,58.3 366.4,51.8 366.8,54.2 367.2,62.8 367.6,71.8 368.0,77.2 368.4,79.2 368.8,79.2 369.2,80.1 369.6,80.3 370.0,79.8 370.4,79.6 370.8,79.8 371.2,79.2 371.6,79.4 372.0,77.9 372.4,72.7 372.8,65.5 373.2,58.4 373.6,55.9 374.0,61.8 374.4,69.4 374.8,75.0 375.2,78.0 375.6,79.2 376.0,79.8 376.4,80.0 376.8,79.6 377.2,80.3 377.6,79.6 378.0,79.7 378.4,79.1 378.8,79.6 379.2,77.7 379.6,77.4 380.0,75.8 380.4,75.1 380.8,75.3 381.2,76.0 381.6,78.1 382.0,79.3 382.4,79.7 382.8,79.8 383.2,79.3 383.6,80.2 384.0,79.6 384.4,80.3 384.8,79.5 385.2,79.9 385.6,80.2 386.0,79.3 386.4,79.4 386.8,77.7 387.2,75.1 387.6,71.1 388.0,67.4 388.4,64.7 388.8,65.3 389.2,68.9 389.6,73.9 390.0,77.4 390.4,78.8 390.8,79.7 391.2,80.1 391.6,79.2 392.0,79.5 392.4,79.8 392.8,79.4 393.2,79.7 393.6,79.9 394.0,79.4 394.4,79.8 394.8,79.2 395.2,78.7 395.6,76.6 396.0,74.7 396.4,72.5 396.8,73.8 397.2,75.2 397.6,78.4 398.0,79.2 398.4,79.6 398.8,79.7 399.2,79.7 399.6,79.0 400.0,77.1 400.4,73.3 400.8,67.7 401.2,63.8 401.6,62.5 402.0,65.6 402.4,70.3 402.8,75.1 403.2,78.0 403.6,79.3 404.0,77.9 404.4,74.5 404.8,68.8 405.2,64.0 405.6,62.0 406.0,65.4 406.4,72.2 406.8,77.1 407.2,79.2 407.6,79.8 408.0,80.1 408.4,79.6 408.8,79.8 409.2,78.9 409.6,78.4 410.0,78.0 410.4,77.0 410.8,75.8 411.2,74.7 411.6,75.3 412.0,75.5 412.4,76.2 412.8,77.4 413.2,78.4 413.6,78.9 414.0,79.1 414.4,80.3 414.8,80.4 415.2,80.1 415.6,80.3 416.0,79.8 416.4,80.2 416.8,79.5 417.2,79.9 417.6,79.0 418.0,78.0 418.4,74.9 418.8,73.0 419.2,70.1 419.6,70.1 420.0,72.0 420.4,73.4 420.8,76.2 421.2,78.1 421.6,79.1 422.0,79.2 422.4,80.3 422.8,80.3 423.2,79.8 423.6,79.7 424.0,80.0 424.4,79.4 424.8,79.4 425.2,80.4 425.6,79.7 426.0,79.9 426.4,80.4 426.8,80.5 427.2,79.9 427.6,79.6 428.0,79.7 428.4,80.4 428.8,80.4 429.2,79.6 429.6,80.3 430.0,79.7 430.4,79.9 430.8,79.4 431.2,80.2 431.6,80.1 432.0,78.7 432.4,78.7 432.8,77.4 433.2,77.3 433.6,75.5 434.0,74.9 434.4,75.3 434.8,74.9 435.2,76.1 435.6,76.9 436.0,77.6 436.4,77.7 436.8,79.1 437.2,79.8 437.6,79.5 438.0,79.3 438.4,79.5 438.8,79.7 439.2,80.2 439.6,79.6 440.0,79.5 440.4,79.6 440.8,80.1 441.2,80.3 441.6,79.7 442.0,79.9 442.4,79.6 442.8,77.4 443.2,72.8 443.6,66.0 444.0,59.2 444.4,54.4 444.8,55.5 445.2,62.5 445.6,69.4 446.0,76.1 446.4,78.3 446.8,79.5 447.2,79.8 447.6,79.3 448.0,80.0 448.4,79.6 448.8,79.5 449.2,80.1 449.6,78.9 450.0,78.2 450.4,77.1 450.8,74.2 451.2,72.3 451.6,72.1 452.0,73.0 452.4,76.1 452.8,78.3 453.2,78.4 453.6,79.4 454.0,80.0 454.4,79.6 454.8,80.2 455.2,79.7 455.6,79.3 456.0,79.7 456.4,79.8 456.8,79.4 457.2,79.5 457.6,78.9 458.0,76.6 458.4,72.8 458.8,68.1 459.2,63.4 459.6,62.2 460.0,65.7 460.4,69.8 460.8,75.1 461.2,77.2 461.6,78.8 462.0,78.6 462.4,78.7 462.8,78.7 463.2,78.1 463.6,77.3 464.0,75.6 464.4,74.7 464.8,73.2 465.2,72.3 465.6,71.2 466.0,69.8 466.4,70.1 466.8,70.4 467.2,70.8 467.6,72.0 468.0,72.4 468.4,73.5 468.8,74.5 469.2,75.8 469.6,75.6 470.0,74.3 470.4,71.2 470.8,67.6 471.2,62.4 471.6,60.0 472.0,57.3 472.4,55.3 472.8,53.0 473.2,49.1 473.6,46.3 474.0,45.5 474.4,46.9 474.8,51.3 475.2,57.2 475.6,63.0 476.0,67.8 476.4,71.4 476.8,71.4 477.2,69.8 477.6,64.1 478.0,58.8 478.4,55.6 478.8,57.5 479.2,62.6 479.6,68.7 480.0,72.9 480.4,76.0 480.8,76.4 481.2,74.8 481.6,73.0 482.0,69.1 482.4,68.1 482.8,68.9 483.2,71.6 483.6,73.6 484.0,76.5 484.4,78.2 484.8,77.3 485.2,75.6 485.6,72.0 486.0,65.4 486.4,62.0 486.8,63.3 487.2,68.6 487.6,73.7 488.0,77.0 488.4,79.5 488.8,79.6 489.2,79.7 489.6,79.1 490.0,79.2 490.4,79.5 490.8,79.2 491.2,79.4 491.6,79.9 492.0,78.9 492.4,77.8 492.8,76.1 493.2,71.0 493.6,63.8 494.0,57.7 494.4,54.3 494.8,54.9 495.2,60.7 495.6,68.1 496.0,74.0 496.4,77.2 496.8,79.1 497.2,78.8 497.6,78.2 498.0,77.7 498.4,75.7 498.8,74.7 499.2,72.9 499.6,72.9 500.0,73.4 500.4,75.2 500.8,76.3 501.2,77.7 501.6,78.6 502.0,79.5 502.4,79.5 502.8,79.8 503.2,80.4 503.6,79.7 504.0,78.5 504.4,74.3 504.8,68.8 505.2,63.0 505.6,62.4 506.0,65.8 506.4,71.7 506.8,76.1 507.2,78.7 507.6,79.5 508.0,79.9 508.4,80.6 508.8,80.3 509.2,79.8 509.6,79.9 510.0,79.7 510.4,80.6 510.8,79.9 511.2,80.4 511.6,80.4 512.0,80.6 512.4,79.5 512.8,79.8 513.2,79.8 513.6,79.2 514.0,79.9 514.4,78.7 514.8,78.6 515.2,77.6 515.6,76.3 516.0,76.2 516.4,75.7 516.8,75.6 517.2,76.1 517.6,77.3 518.0,77.4 518.4,78.4 518.8,79.1 519.2,79.7 519.6,79.5 520.0,80.3 520.4,79.8 520.8,80.4 521.2,80.4 521.6,79.7 522.0,79.8 522.4,79.9 522.8,80.4 523.2,80.1 523.6,80.0 524.0,80.6 524.4,79.8 524.8,79.9 525.2,80.0 525.6,79.8 526.0,79.6 526.4,79.6 526.8,80.3 527.2,80.2 527.6,80.3 528.0,79.7 528.4,76.9 528.8,74.2 529.2,71.4 529.6,69.8 530.0,72.5 530.4,75.9 530.8,78.9 531.2,80.0 531.6,79.3 532.0,78.6 532.4,74.9 532.8,70.2 533.2,65.3 533.6,63.6 534.0,67.4 534.4,72.8 534.8,77.2 535.2,79.0 535.6,79.6 536.0,80.1 536.4,80.2 536.8,79.8 537.2,80.4 537.6,79.9 538.0,79.7 538.4,80.0 538.8,80.1 539.2,79.8 539.6,80.3 540.0,80.5 540.4,80.3 540.8,80.5 541.2,79.7 541.6,80.1 542.0,80.1 542.4,79.7 542.8,80.1 543.2,79.7 543.6,80.2 544.0,80.3 544.4,80.2 544.8,80.0 545.2,79.9 545.6,79.7 546.0,80.1 546.4,80.7 546.8,80.3 547.2,80.0 547.6,80.4 548.0,79.9 548.4,80.2 548.8,80.4 549.2,80.8 549.6,80.1 550.0,80.3 550.4,80.8 550.8,80.6 551.2,80.4 551.6,80.4 552.0,80.1 552.4,80.2 552.8,80.0 553.2,80.7 553.6,80.7 554.0,80.1 554.4,80.8 554.8,79.7 555.2,79.8 555.6,80.3 556.0,80.0 556.4,80.1 556.8,80.8 557.2,79.8 557.6,79.9 558.0,79.9 558.4,80.5 558.8,80.0 559.2,79.7 559.6,80.3 560.0,80.1 560.4,80.0 560.8,80.3 561.2,80.5 561.6,80.3 562.0,80.4 562.4,80.4 562.8,80.7 563.2,80.8 563.6,80.1 564.0,80.1 564.4,80.8 564.8,80.1 565.2,80.5 565.6,80.5 566.0,80.5 566.4,80.8 566.8,80.7 567.2,79.9 567.6,80.4 568.0,80.3 568.4,80.4 568.8,80.1 569.2,80.0 569.5,0" fill="#f6f6f6"/><path d="M17.5 70.4H552.5" stroke="#cfcfcf" stroke-width="0.8"/><path d="M17.5 64.1H552.5" stroke="#e9e9e9" stroke-width="0.8"/><path d="M17.5 57.8H552.5" stroke="#cfcfcf" stroke-width="0.8"/><path d="M17.5 51.5H552.5" stroke="#cfcfcf" stroke-width="0.8"/><path d="M17.5 45.2H552.5" stroke="#e9e9e9" stroke-width="0.8"/><path d="M17.5 38.9H552.5" stroke="#cfcfcf" stroke-width="0.8"/><path d="M17.5 32.6H552.5" stroke="#e9e9e9" stroke-width="0.8"/><path d="M17.5 26.3H552.5" stroke="#cfcfcf" stroke-width="0.8"/><path d="M17.5 20.0H552.5" stroke="#e9e9e9" stroke-width="0.8"/><path d="M17.5 13.7H552.5" stroke="#cfcfcf" stroke-width="0.8"/><path d="M17.5 7.4H552.5" stroke="#e9e9e9" stroke-width="0.8"/><path d="M36.1 6V84" stroke="#dedede" stroke-width="0.6" stroke-dasharray="1.2 5"/><path d="M71.6 6V84" stroke="#dedede" stroke-width="0.6" stroke-dasharray="1.2 5"/><path d="M107.1 6V84" stroke="#dedede" stroke-width="0.6" stroke-dasharray="1.2 5"/><path d="M142.6 6V84" stroke="#dedede" stroke-width="0.6" stroke-dasharray="1.2 5"/><path d="M178.1 6V84" stroke="#dedede" stroke-width="0.6" stroke-dasharray="1.2 5"/><path d="M213.6 6V84" stroke="#dedede" stroke-width="0.6" stroke-dasharray="1.2 5"/><path d="M249.1 6V84" stroke="#dedede" stroke-width="0.6" stroke-dasharray="1.2 5"/><path d="M284.6 6V84" stroke="#dedede" stroke-width="0.6" stroke-dasharray="1.2 5"/><path d="M320.1 6V84" stroke="#dedede" stroke-width="0.6" stroke-dasharray="1.2 5"/><path d="M355.6 6V84" stroke="#dedede" stroke-width="0.6" stroke-dasharray="1.2 5"/><path d="M391.1 6V84" stroke="#dedede" stroke-width="0.6" stroke-dasharray="1.2 5"/><path d="M426.6 6V84" stroke="#dedede" stroke-width="0.6" stroke-dasharray="1.2 5"/><path d="M462.1 6V84" stroke="#dedede" stroke-width="0.6" stroke-dasharray="1.2 5"/><path d="M497.6 6V84" stroke="#dedede" stroke-width="0.6" stroke-dasharray="1.2 5"/><path d="M533.1 6V84" stroke="#dedede" stroke-width="0.6" stroke-dasharray="1.2 5"/><polygon points="0,89.5 0.0,77.6 0.4,77.7 0.8,78.1 1.2,77.5 1.6,77.5 2.0,77.6 2.4,77.1 2.8,77.5 3.2,77.6 3.6,77.8 4.0,76.9 4.4,77.1 4.8,76.8 5.2,77.7 5.6,77.5 6.0,76.7 6.4,77.8 6.8,77.8 7.2,77.4 7.6,77.3 8.0,76.7 8.4,76.2 8.8,75.8 9.2,72.3 9.6,66.4 10.0,58.8 10.4,53.7 10.8,55.9 11.2,62.8 11.6,70.4 12.0,74.4 12.4,76.3 12.8,76.7 13.2,76.9 13.6,76.7 14.0,76.4 14.4,77.3 14.8,77.2 15.2,77.0 15.6,76.5 16.0,74.8 16.4,71.9 16.8,67.4 17.2,62.7 17.6,62.5 18.0,65.1 18.4,70.5 18.8,73.7 19.2,76.2 19.6,76.7 20.0,75.8 20.4,76.1 20.8,77.0 21.2,76.4 21.6,77.8 22.0,77.1 22.4,76.8 22.8,77.4 23.2,77.6 23.6,77.0 24.0,76.8 24.4,77.1 24.8,77.9 25.2,77.6 25.6,76.9 26.0,77.1 26.4,76.9 26.8,76.9 27.2,77.8 27.6,77.1 28.0,77.5 28.4,77.4 28.8,77.1 29.2,77.8 29.6,77.1 30.0,77.8 30.4,77.2 30.8,77.6 31.2,77.3 31.6,77.4 32.0,78.3 32.4,78.1 32.8,77.6 33.2,78.3 33.6,77.5 34.0,77.8 34.4,78.4 34.8,78.1 35.2,77.5 35.6,78.6 36.0,77.7 36.4,77.8 36.8,78.4 37.2,77.9 37.6,77.9 38.0,77.7 38.4,77.7 38.8,78.4 39.2,78.0 39.6,78.4 40.0,78.2 40.4,78.3 40.8,79.0 41.2,78.4 41.6,78.5 42.0,78.9 42.4,78.1 42.8,78.1 43.2,79.0 43.6,78.9 44.0,78.3 44.4,78.2 44.8,78.9 45.2,79.2 45.6,78.3 46.0,79.2 46.4,79.1 46.8,78.8 47.2,78.4 47.6,77.6 48.0,76.2 48.4,74.3 48.8,68.2 49.2,61.5 49.6,53.4 50.0,48.7 50.4,46.1 50.8,45.5 51.2,45.2 51.6,44.6 52.0,41.9 52.4,41.2 52.8,42.7 53.2,46.7 53.6,51.8 54.0,57.6 54.4,64.4 54.8,68.7 55.2,72.4 55.6,75.3 56.0,77.1 56.4,77.6 56.8,78.2 57.2,78.6 57.6,78.9 58.0,78.4 58.4,78.4 58.8,77.9 59.2,74.5 59.6,67.1 60.0,58.2 60.4,52.4 60.8,53.9 61.2,61.9 61.6,70.3 62.0,76.6 62.4,78.5 62.8,79.4 63.2,78.4 63.6,79.1 64.0,78.9 64.4,79.2 64.8,78.7 65.2,79.6 65.6,78.5 66.0,79.0 66.4,79.3 66.8,79.5 67.2,79.3 67.6,79.2 68.0,79.3 68.4,79.5 68.8,78.8 69.2,79.2 69.6,79.5 70.0,79.4 70.4,78.9 70.8,79.3 71.2,79.4 71.6,79.1 72.0,79.1 72.4,78.8 72.8,79.1 73.2,79.1 73.6,78.5 74.0,79.2 74.4,79.6 74.8,79.5 75.2,79.3 75.6,78.9 76.0,79.3 76.4,79.1 76.8,78.9 77.2,79.4 77.6,78.5 78.0,79.3 78.4,78.4 78.8,79.1 79.2,79.0 79.6,78.7 80.0,79.2 80.4,79.0 80.8,79.1 81.2,79.5 81.6,78.7 82.0,78.4 82.4,78.8 82.8,79.2 83.2,78.7 83.6,78.6 84.0,79.5 84.4,79.2 84.8,78.9 85.2,79.5 85.6,78.8 86.0,79.2 86.4,78.7 86.8,78.9 87.2,79.4 87.6,79.5 88.0,79.5 88.4,78.9 88.8,79.1 89.2,78.8 89.6,78.6 90.0,79.0 90.4,79.4 90.8,79.4 91.2,79.1 91.6,79.1 92.0,77.6 92.4,76.3 92.8,75.3 93.2,74.0 93.6,73.7 94.0,74.6 94.4,76.2 94.8,77.3 95.2,78.0 95.6,79.1 96.0,79.5 96.4,78.9 96.8,78.5 97.2,78.3 97.6,79.0 98.0,77.3 98.4,77.0 98.8,75.4 99.2,74.1 99.6,74.4 100.0,74.2 100.4,75.6 100.8,77.2 101.2,77.6 101.6,79.1 102.0,78.6 102.4,78.5 102.8,78.4 103.2,79.1 103.6,78.9 104.0,79.1 104.4,79.2 104.8,79.3 105.2,79.5 105.6,79.2 106.0,78.6 106.4,78.9 106.8,78.6 107.2,78.4 107.6,78.9 108.0,79.2 108.4,78.5 108.8,78.7 109.2,78.7 109.6,79.2 110.0,78.9 110.4,79.0 110.8,79.2 111.2,78.8 111.6,79.2 112.0,79.4 112.4,78.4 112.8,79.4 113.2,79.1 113.6,78.4 114.0,78.8 114.4,79.0 114.8,79.3 115.2,78.7 115.6,78.9 116.0,79.3 116.4,79.2 116.8,79.3 117.2,78.7 117.6,79.0 118.0,78.4 118.4,79.0 118.8,79.1 119.2,78.9 119.6,78.8 120.0,77.8 120.4,77.8 120.8,76.8 121.2,75.8 121.6,75.1 122.0,76.0 122.4,76.5 122.8,78.2 123.2,78.7 123.6,78.3 124.0,78.1 124.4,78.5 124.8,78.6 125.2,78.6 125.6,77.7 126.0,76.0 126.4,75.0 126.8,71.8 127.2,70.8 127.6,69.7 128.0,71.0 128.4,73.8 128.8,75.1 129.2,76.7 129.6,78.0 130.0,78.5 130.4,78.8 130.8,78.5 131.2,78.5 131.6,77.3 132.0,77.1 132.4,75.5 132.8,75.9 133.2,76.9 133.6,77.4 134.0,78.3 134.4,78.4 134.8,78.3 135.2,78.7 135.6,78.3 136.0,78.0 136.4,77.8 136.8,77.2 137.2,73.8 137.6,66.2 138.0,58.2 138.4,52.7 138.8,54.1 139.2,61.9 139.6,69.5 140.0,74.8 140.4,76.5 140.8,76.9 141.2,75.9 141.6,76.5 142.0,75.4 142.4,74.8 142.8,74.7 143.2,73.9 143.6,73.4 144.0,73.4 144.4,72.5 144.8,73.0 145.2,73.0 145.6,73.7 146.0,73.5 146.4,72.0 146.8,70.8 147.2,67.6 147.6,63.9 148.0,59.0 148.4,53.3 148.8,47.6 149.2,44.1 149.6,43.4 150.0,46.2 150.4,51.0 150.8,55.2 151.2,59.8 151.6,59.7 152.0,57.1 152.4,52.3 152.8,49.2 153.2,48.9 153.6,52.1 154.0,55.1 154.4,53.9 154.8,53.3 155.2,54.6 155.6,61.5 156.0,68.4 156.4,73.0 156.8,75.3 157.2,75.5 157.6,75.2 158.0,75.0 158.4,75.0 158.8,74.6 159.2,74.9 159.6,75.7 160.0,76.1 160.4,76.4 160.8,77.2 161.2,77.3 161.6,77.9 162.0,77.4 162.4,78.2 162.8,78.4 163.2,78.5 163.6,77.9 164.0,77.9 164.4,78.7 164.8,77.7 165.2,78.4 165.6,77.7 166.0,75.3 166.4,73.2 166.8,71.0 167.2,68.3 167.6,67.6 168.0,69.9 168.4,72.1 168.8,75.2 169.2,76.2 169.6,77.6 170.0,78.3 170.4,77.6 170.8,77.7 171.2,77.6 171.6,76.5 172.0,74.7 172.4,72.6 172.8,73.5 173.2,75.4 173.6,76.8 174.0,78.0 174.4,77.7 174.8,76.9 175.2,74.9 175.6,70.6 176.0,65.7 176.4,62.2 176.8,63.5 177.2,67.9 177.6,73.2 178.0,76.4 178.4,78.4 178.8,79.0 179.2,79.0 179.6,77.9 180.0,77.6 180.4,77.7 180.8,75.0 181.2,73.0 181.6,71.9 182.0,73.8 182.4,76.2 182.8,77.7 183.2,78.3 183.6,77.0 184.0,75.5 184.4,69.8 184.8,59.4 185.2,50.6 185.6,48.6 186.0,54.6 186.4,64.5 186.8,72.4 187.2,76.8 187.6,77.4 188.0,78.3 188.4,76.6 188.8,73.2 189.2,69.6 189.6,68.3 190.0,70.6 190.4,74.2 190.8,75.0 191.2,72.9 191.6,66.9 192.0,59.7 192.4,56.7 192.8,57.8 193.2,63.5 193.6,70.1 194.0,74.5 194.4,77.6 194.8,78.5 195.2,78.5 195.6,78.6 196.0,78.5 196.4,77.6 196.8,76.5 197.2,72.5 197.6,67.4 198.0,61.6 198.4,57.6 198.8,59.2 199.2,64.7 199.6,70.5 200.0,74.1 200.4,76.2 200.8,74.4 201.2,69.8 201.6,64.0 202.0,57.7 202.4,54.2 202.8,55.2 203.2,61.1 203.6,67.0 204.0,72.1 204.4,74.7 204.8,75.2 205.2,72.6 205.6,71.2 206.0,69.4 206.4,67.8 206.8,68.3 207.2,69.5 207.6,71.9 208.0,74.3 208.4,75.3 208.8,75.4 209.2,74.1 209.6,69.6 210.0,64.9 210.4,62.7 210.8,63.2 211.2,67.9 211.6,72.2 212.0,75.9 212.4,76.4 212.8,76.6 213.2,74.3 213.6,69.2 214.0,65.4 214.4,61.7 214.8,63.0 215.2,66.7 215.6,71.6 216.0,74.9 216.4,75.4 216.8,76.4 217.2,74.9 217.6,74.1 218.0,73.5 218.4,72.9 218.8,72.9 219.2,73.9 219.6,74.7 220.0,75.4 220.4,76.9 220.8,77.2 221.2,77.4 221.6,78.0 222.0,77.9 222.4,77.9 222.8,77.5 223.2,73.7 223.6,67.3 224.0,58.2 224.4,51.7 224.8,54.9 225.2,62.9 225.6,70.3 226.0,76.3 226.4,77.1 226.8,75.7 227.2,72.6 227.6,67.6 228.0,66.0 228.4,68.4 228.8,72.1 229.2,74.9 229.6,75.7 230.0,72.3 230.4,65.7 230.8,57.3 231.2,51.8 231.6,50.1 232.0,54.0 232.4,61.2 232.8,69.3 233.2,74.0 233.6,76.8 234.0,76.8 234.4,73.2 234.8,67.1 235.2,61.7 235.6,60.1 236.0,64.6 236.4,70.7 236.8,76.3 237.2,78.7 237.6,79.3 238.0,78.9 238.4,78.8 238.8,79.7 239.2,79.6 239.6,79.4 240.0,79.1 240.4,79.0 240.8,79.5 241.2,79.4 241.6,79.4 242.0,79.5 242.4,79.6 242.8,78.9 243.2,79.0 243.6,79.9 244.0,79.8 244.4,79.8 244.8,78.8 245.2,78.8 245.6,79.1 246.0,79.3 246.4,79.5 246.8,78.9 247.2,79.4 247.6,78.9 248.0,78.9 248.4,79.6 248.8,79.5 249.2,79.6 249.6,79.3 250.0,79.4 250.4,79.1 250.8,79.2 251.2,79.7 251.6,79.8 252.0,78.9 252.4,79.0 252.8,79.8 253.2,79.6 253.6,79.8 254.0,79.1 254.4,79.4 254.8,79.2 255.2,79.8 255.6,79.3 256.0,79.6 256.4,80.0 256.8,79.3 257.2,79.5 257.6,79.8 258.0,80.0 258.4,79.4 258.8,79.3 259.2,79.0 259.6,79.9 260.0,79.0 260.4,79.0 260.8,79.6 261.2,79.5 261.6,79.7 262.0,79.2 262.4,79.8 262.8,79.0 263.2,79.1 263.6,79.7 264.0,79.0 264.4,79.3 264.8,79.8 265.2,79.7 265.6,79.2 266.0,79.1 266.4,79.3 266.8,79.7 267.2,79.2 267.6,78.7 268.0,79.1 268.4,78.2 268.8,77.5 269.2,76.1 269.6,74.5 270.0,72.6 270.4,72.4 270.8,72.0 271.2,73.1 271.6,74.6 272.0,76.8 272.4,78.1 272.8,78.2 273.2,78.9 273.6,79.2 274.0,79.3 274.4,79.4 274.8,79.4 275.2,79.2 275.6,79.6 276.0,79.9 276.4,79.6 276.8,79.9 277.2,79.6 277.6,79.1 278.0,79.8 278.4,80.0 278.8,79.3 279.2,79.0 279.6,79.6 280.0,79.6 280.4,79.6 280.8,80.1 281.2,79.7 281.6,79.8 282.0,78.7 282.4,79.0 282.8,78.6 283.2,76.9 283.6,75.9 284.0,75.8 284.4,75.5 284.8,74.7 285.2,76.1 285.6,76.5 286.0,78.2 286.4,78.8 286.8,78.8 287.2,79.0 287.6,79.8 288.0,79.6 288.4,79.9 288.8,79.4 289.2,79.4 289.6,80.1 290.0,79.8 290.4,79.6 290.8,79.6 291.2,79.8 291.6,79.7 292.0,79.8 292.4,78.8 292.8,78.7 293.2,77.6 293.6,76.8 294.0,75.8 294.4,75.4 294.8,75.6 295.2,76.4 295.6,77.1 296.0,77.9 296.4,78.9 296.8,79.5 297.2,79.3 297.6,79.4 298.0,79.1 298.4,79.9 298.8,80.2 299.2,79.4 299.6,79.2 300.0,79.2 300.4,79.5 300.8,79.3 301.2,80.2 301.6,79.1 302.0,79.4 302.4,79.1 302.8,79.8 303.2,79.9 303.6,79.2 304.0,79.1 304.4,79.6 304.8,79.7 305.2,80.1 305.6,79.0 306.0,79.1 306.4,79.2 306.8,79.3 307.2,79.3 307.6,79.9 308.0,79.7 308.4,79.3 308.8,79.2 309.2,79.4 309.6,79.2 310.0,79.9 310.4,79.4 310.8,79.7 311.2,80.0 311.6,79.6 312.0,79.3 312.4,80.1 312.8,80.1 313.2,79.4 313.6,79.7 314.0,80.2 314.4,79.6 314.8,79.3 315.2,79.1 315.6,80.2 316.0,80.0 316.4,79.5 316.8,79.7 317.2,79.7 317.6,79.4 318.0,80.2 318.4,79.8 318.8,79.3 319.2,79.1 319.6,79.6 320.0,79.5 320.4,80.0 320.8,79.9 321.2,79.8 321.6,79.2 322.0,79.2 322.4,79.4 322.8,79.4 323.2,80.1 323.6,79.7 324.0,79.8 324.4,80.2 324.8,79.4 325.2,79.7 325.6,79.2 326.0,80.0 326.4,79.1 326.8,80.0 327.2,80.1 327.6,80.0 328.0,79.1 328.4,79.2 328.8,78.9 329.2,75.9 329.6,71.8 330.0,65.9 330.4,62.7 330.8,63.6 331.2,69.3 331.6,74.1 332.0,78.0 332.4,78.3 332.8,77.5 333.2,72.4 333.6,66.5 334.0,58.3 334.4,54.3 334.8,55.8 335.2,61.8 335.6,70.2 336.0,75.1 336.4,78.0 336.8,78.8 337.2,79.4 337.6,79.6 338.0,79.9 338.4,79.3 338.8,78.8 339.2,75.6 339.6,70.8 340.0,64.3 340.4,60.8 340.8,62.1 341.2,67.8 341.6,73.2 342.0,77.5 342.4,79.4 342.8,79.3 343.2,79.8 343.6,79.7 344.0,79.1 344.4,80.3 344.8,80.1 345.2,79.4 345.6,79.9 346.0,79.5 346.4,79.6 346.8,79.8 347.2,79.5 347.6,79.5 348.0,79.6 348.4,79.9 348.8,79.4 349.2,79.4 349.6,80.0 350.0,79.4 350.4,79.9 350.8,78.9 351.2,78.1 351.6,76.1 352.0,75.2 352.4,73.5 352.8,73.9 353.2,75.1 353.6,77.3 354.0,78.6 354.4,78.8 354.8,79.4 355.2,80.1 355.6,79.7 356.0,78.7 356.4,77.6 356.8,74.6 357.2,69.2 357.6,61.9 358.0,53.9 358.4,50.7 358.8,51.5 359.2,57.4 359.6,64.0 360.0,67.2 360.4,66.2 360.8,63.5 361.2,64.1 361.6,68.6 362.0,73.4 362.4,77.4 362.8,79.4 363.2,80.2 363.6,80.1 364.0,79.9 364.4,79.6 364.8,77.6 365.2,74.4 365.6,67.2 366.0,58.3 366.4,51.8 366.8,54.2 367.2,62.8 367.6,71.8 368.0,77.2 368.4,79.2 368.8,79.2 369.2,80.1 369.6,80.3 370.0,79.8 370.4,79.6 370.8,79.8 371.2,79.2 371.6,79.4 372.0,77.9 372.4,72.7 372.8,65.5 373.2,58.4 373.6,55.9 374.0,61.8 374.4,69.4 374.8,75.0 375.2,78.0 375.6,79.2 376.0,79.8 376.4,80.0 376.8,79.6 377.2,80.3 377.6,79.6 378.0,79.7 378.4,79.1 378.8,79.6 379.2,77.7 379.6,77.4 380.0,75.8 380.4,75.1 380.8,75.3 381.2,76.0 381.6,78.1 382.0,79.3 382.4,79.7 382.8,79.8 383.2,79.3 383.6,80.2 384.0,79.6 384.4,80.3 384.8,79.5 385.2,79.9 385.6,80.2 386.0,79.3 386.4,79.4 386.8,77.7 387.2,75.1 387.6,71.1 388.0,67.4 388.4,64.7 388.8,65.3 389.2,68.9 389.6,73.9 390.0,77.4 390.4,78.8 390.8,79.7 391.2,80.1 391.6,79.2 392.0,79.5 392.4,79.8 392.8,79.4 393.2,79.7 393.6,79.9 394.0,79.4 394.4,79.8 394.8,79.2 395.2,78.7 395.6,76.6 396.0,74.7 396.4,72.5 396.8,73.8 397.2,75.2 397.6,78.4 398.0,79.2 398.4,79.6 398.8,79.7 399.2,79.7 399.6,79.0 400.0,77.1 400.4,73.3 400.8,67.7 401.2,63.8 401.6,62.5 402.0,65.6 402.4,70.3 402.8,75.1 403.2,78.0 403.6,79.3 404.0,77.9 404.4,74.5 404.8,68.8 405.2,64.0 405.6,62.0 406.0,65.4 406.4,72.2 406.8,77.1 407.2,79.2 407.6,79.8 408.0,80.1 408.4,79.6 408.8,79.8 409.2,78.9 409.6,78.4 410.0,78.0 410.4,77.0 410.8,75.8 411.2,74.7 411.6,75.3 412.0,75.5 412.4,76.2 412.8,77.4 413.2,78.4 413.6,78.9 414.0,79.1 414.4,80.3 414.8,80.4 415.2,80.1 415.6,80.3 416.0,79.8 416.4,80.2 416.8,79.5 417.2,79.9 417.6,79.0 418.0,78.0 418.4,74.9 418.8,73.0 419.2,70.1 419.6,70.1 420.0,72.0 420.4,73.4 420.8,76.2 421.2,78.1 421.6,79.1 422.0,79.2 422.4,80.3 422.8,80.3 423.2,79.8 423.6,79.7 424.0,80.0 424.4,79.4 424.8,79.4 425.2,80.4 425.6,79.7 426.0,79.9 426.4,80.4 426.8,80.5 427.2,79.9 427.6,79.6 428.0,79.7 428.4,80.4 428.8,80.4 429.2,79.6 429.6,80.3 430.0,79.7 430.4,79.9 430.8,79.4 431.2,80.2 431.6,80.1 432.0,78.7 432.4,78.7 432.8,77.4 433.2,77.3 433.6,75.5 434.0,74.9 434.4,75.3 434.8,74.9 435.2,76.1 435.6,76.9 436.0,77.6 436.4,77.7 436.8,79.1 437.2,79.8 437.6,79.5 438.0,79.3 438.4,79.5 438.8,79.7 439.2,80.2 439.6,79.6 440.0,79.5 440.4,79.6 440.8,80.1 441.2,80.3 441.6,79.7 442.0,79.9 442.4,79.6 442.8,77.4 443.2,72.8 443.6,66.0 444.0,59.2 444.4,54.4 444.8,55.5 445.2,62.5 445.6,69.4 446.0,76.1 446.4,78.3 446.8,79.5 447.2,79.8 447.6,79.3 448.0,80.0 448.4,79.6 448.8,79.5 449.2,80.1 449.6,78.9 450.0,78.2 450.4,77.1 450.8,74.2 451.2,72.3 451.6,72.1 452.0,73.0 452.4,76.1 452.8,78.3 453.2,78.4 453.6,79.4 454.0,80.0 454.4,79.6 454.8,80.2 455.2,79.7 455.6,79.3 456.0,79.7 456.4,79.8 456.8,79.4 457.2,79.5 457.6,78.9 458.0,76.6 458.4,72.8 458.8,68.1 459.2,63.4 459.6,62.2 460.0,65.7 460.4,69.8 460.8,75.1 461.2,77.2 461.6,78.8 462.0,78.6 462.4,78.7 462.8,78.7 463.2,78.1 463.6,77.3 464.0,75.6 464.4,74.7 464.8,73.2 465.2,72.3 465.6,71.2 466.0,69.8 466.4,70.1 466.8,70.4 467.2,70.8 467.6,72.0 468.0,72.4 468.4,73.5 468.8,74.5 469.2,75.8 469.6,75.6 470.0,74.3 470.4,71.2 470.8,67.6 471.2,62.4 471.6,60.0 472.0,57.3 472.4,55.3 472.8,53.0 473.2,49.1 473.6,46.3 474.0,45.5 474.4,46.9 474.8,51.3 475.2,57.2 475.6,63.0 476.0,67.8 476.4,71.4 476.8,71.4 477.2,69.8 477.6,64.1 478.0,58.8 478.4,55.6 478.8,57.5 479.2,62.6 479.6,68.7 480.0,72.9 480.4,76.0 480.8,76.4 481.2,74.8 481.6,73.0 482.0,69.1 482.4,68.1 482.8,68.9 483.2,71.6 483.6,73.6 484.0,76.5 484.4,78.2 484.8,77.3 485.2,75.6 485.6,72.0 486.0,65.4 486.4,62.0 486.8,63.3 487.2,68.6 487.6,73.7 488.0,77.0 488.4,79.5 488.8,79.6 489.2,79.7 489.6,79.1 490.0,79.2 490.4,79.5 490.8,79.2 491.2,79.4 491.6,79.9 492.0,78.9 492.4,77.8 492.8,76.1 493.2,71.0 493.6,63.8 494.0,57.7 494.4,54.3 494.8,54.9 495.2,60.7 495.6,68.1 496.0,74.0 496.4,77.2 496.8,79.1 497.2,78.8 497.6,78.2 498.0,77.7 498.4,75.7 498.8,74.7 499.2,72.9 499.6,72.9 500.0,73.4 500.4,75.2 500.8,76.3 501.2,77.7 501.6,78.6 502.0,79.5 502.4,79.5 502.8,79.8 503.2,80.4 503.6,79.7 504.0,78.5 504.4,74.3 504.8,68.8 505.2,63.0 505.6,62.4 506.0,65.8 506.4,71.7 506.8,76.1 507.2,78.7 507.6,79.5 508.0,79.9 508.4,80.6 508.8,80.3 509.2,79.8 509.6,79.9 510.0,79.7 510.4,80.6 510.8,79.9 511.2,80.4 511.6,80.4 512.0,80.6 512.4,79.5 512.8,79.8 513.2,79.8 513.6,79.2 514.0,79.9 514.4,78.7 514.8,78.6 515.2,77.6 515.6,76.3 516.0,76.2 516.4,75.7 516.8,75.6 517.2,76.1 517.6,77.3 518.0,77.4 518.4,78.4 518.8,79.1 519.2,79.7 519.6,79.5 520.0,80.3 520.4,79.8 520.8,80.4 521.2,80.4 521.6,79.7 522.0,79.8 522.4,79.9 522.8,80.4 523.2,80.1 523.6,80.0 524.0,80.6 524.4,79.8 524.8,79.9 525.2,80.0 525.6,79.8 526.0,79.6 526.4,79.6 526.8,80.3 527.2,80.2 527.6,80.3 528.0,79.7 528.4,76.9 528.8,74.2 529.2,71.4 529.6,69.8 530.0,72.5 530.4,75.9 530.8,78.9 531.2,80.0 531.6,79.3 532.0,78.6 532.4,74.9 532.8,70.2 533.2,65.3 533.6,63.6 534.0,67.4 534.4,72.8 534.8,77.2 535.2,79.0 535.6,79.6 536.0,80.1 536.4,80.2 536.8,79.8 537.2,80.4 537.6,79.9 538.0,79.7 538.4,80.0 538.8,80.1 539.2,79.8 539.6,80.3 540.0,80.5 540.4,80.3 540.8,80.5 541.2,79.7 541.6,80.1 542.0,80.1 542.4,79.7 542.8,80.1 543.2,79.7 543.6,80.2 544.0,80.3 544.4,80.2 544.8,80.0 545.2,79.9 545.6,79.7 546.0,80.1 546.4,80.7 546.8,80.3 547.2,80.0 547.6,80.4 548.0,79.9 548.4,80.2 548.8,80.4 549.2,80.8 549.6,80.1 550.0,80.3 550.4,80.8 550.8,80.6 551.2,80.4 551.6,80.4 552.0,80.1 552.4,80.2 552.8,80.0 553.2,80.7 553.6,80.7 554.0,80.1 554.4,80.8 554.8,79.7 555.2,79.8 555.6,80.3 556.0,80.0 556.4,80.1 556.8,80.8 557.2,79.8 557.6,79.9 558.0,79.9 558.4,80.5 558.8,80.0 559.2,79.7 559.6,80.3 560.0,80.1 560.4,80.0 560.8,80.3 561.2,80.5 561.6,80.3 562.0,80.4 562.4,80.4 562.8,80.7 563.2,80.8 563.6,80.1 564.0,80.1 564.4,80.8 564.8,80.1 565.2,80.5 565.6,80.5 566.0,80.5 566.4,80.8 566.8,80.7 567.2,79.9 567.6,80.4 568.0,80.3 568.4,80.4 568.8,80.1 569.2,80.0 569.5,89.5" fill="#c7cdc7"/><polyline points="0.0,77.6 0.4,77.7 0.8,78.1 1.2,77.5 1.6,77.5 2.0,77.6 2.4,77.1 2.8,77.5 3.2,77.6 3.6,77.8 4.0,76.9 4.4,77.1 4.8,76.8 5.2,77.7 5.6,77.5 6.0,76.7 6.4,77.8 6.8,77.8 7.2,77.4 7.6,77.3 8.0,76.7 8.4,76.2 8.8,75.8 9.2,72.3 9.6,66.4 10.0,58.8 10.4,53.7 10.8,55.9 11.2,62.8 11.6,70.4 12.0,74.4 12.4,76.3 12.8,76.7 13.2,76.9 13.6,76.7 14.0,76.4 14.4,77.3 14.8,77.2 15.2,77.0 15.6,76.5 16.0,74.8 16.4,71.9 16.8,67.4 17.2,62.7 17.6,62.5 18.0,65.1 18.4,70.5 18.8,73.7 19.2,76.2 19.6,76.7 20.0,75.8 20.4,76.1 20.8,77.0 21.2,76.4 21.6,77.8 22.0,77.1 22.4,76.8 22.8,77.4 23.2,77.6 23.6,77.0 24.0,76.8 24.4,77.1 24.8,77.9 25.2,77.6 25.6,76.9 26.0,77.1 26.4,76.9 26.8,76.9 27.2,77.8 27.6,77.1 28.0,77.5 28.4,77.4 28.8,77.1 29.2,77.8 29.6,77.1 30.0,77.8 30.4,77.2 30.8,77.6 31.2,77.3 31.6,77.4 32.0,78.3 32.4,78.1 32.8,77.6 33.2,78.3 33.6,77.5 34.0,77.8 34.4,78.4 34.8,78.1 35.2,77.5 35.6,78.6 36.0,77.7 36.4,77.8 36.8,78.4 37.2,77.9 37.6,77.9 38.0,77.7 38.4,77.7 38.8,78.4 39.2,78.0 39.6,78.4 40.0,78.2 40.4,78.3 40.8,79.0 41.2,78.4 41.6,78.5 42.0,78.9 42.4,78.1 42.8,78.1 43.2,79.0 43.6,78.9 44.0,78.3 44.4,78.2 44.8,78.9 45.2,79.2 45.6,78.3 46.0,79.2 46.4,79.1 46.8,78.8 47.2,78.4 47.6,77.6 48.0,76.2 48.4,74.3 48.8,68.2 49.2,61.5 49.6,53.4 50.0,48.7 50.4,46.1 50.8,45.5 51.2,45.2 51.6,44.6 52.0,41.9 52.4,41.2 52.8,42.7 53.2,46.7 53.6,51.8 54.0,57.6 54.4,64.4 54.8,68.7 55.2,72.4 55.6,75.3 56.0,77.1 56.4,77.6 56.8,78.2 57.2,78.6 57.6,78.9 58.0,78.4 58.4,78.4 58.8,77.9 59.2,74.5 59.6,67.1 60.0,58.2 60.4,52.4 60.8,53.9 61.2,61.9 61.6,70.3 62.0,76.6 62.4,78.5 62.8,79.4 63.2,78.4 63.6,79.1 64.0,78.9 64.4,79.2 64.8,78.7 65.2,79.6 65.6,78.5 66.0,79.0 66.4,79.3 66.8,79.5 67.2,79.3 67.6,79.2 68.0,79.3 68.4,79.5 68.8,78.8 69.2,79.2 69.6,79.5 70.0,79.4 70.4,78.9 70.8,79.3 71.2,79.4 71.6,79.1 72.0,79.1 72.4,78.8 72.8,79.1 73.2,79.1 73.6,78.5 74.0,79.2 74.4,79.6 74.8,79.5 75.2,79.3 75.6,78.9 76.0,79.3 76.4,79.1 76.8,78.9 77.2,79.4 77.6,78.5 78.0,79.3 78.4,78.4 78.8,79.1 79.2,79.0 79.6,78.7 80.0,79.2 80.4,79.0 80.8,79.1 81.2,79.5 81.6,78.7 82.0,78.4 82.4,78.8 82.8,79.2 83.2,78.7 83.6,78.6 84.0,79.5 84.4,79.2 84.8,78.9 85.2,79.5 85.6,78.8 86.0,79.2 86.4,78.7 86.8,78.9 87.2,79.4 87.6,79.5 88.0,79.5 88.4,78.9 88.8,79.1 89.2,78.8 89.6,78.6 90.0,79.0 90.4,79.4 90.8,79.4 91.2,79.1 91.6,79.1 92.0,77.6 92.4,76.3 92.8,75.3 93.2,74.0 93.6,73.7 94.0,74.6 94.4,76.2 94.8,77.3 95.2,78.0 95.6,79.1 96.0,79.5 96.4,78.9 96.8,78.5 97.2,78.3 97.6,79.0 98.0,77.3 98.4,77.0 98.8,75.4 99.2,74.1 99.6,74.4 100.0,74.2 100.4,75.6 100.8,77.2 101.2,77.6 101.6,79.1 102.0,78.6 102.4,78.5 102.8,78.4 103.2,79.1 103.6,78.9 104.0,79.1 104.4,79.2 104.8,79.3 105.2,79.5 105.6,79.2 106.0,78.6 106.4,78.9 106.8,78.6 107.2,78.4 107.6,78.9 108.0,79.2 108.4,78.5 108.8,78.7 109.2,78.7 109.6,79.2 110.0,78.9 110.4,79.0 110.8,79.2 111.2,78.8 111.6,79.2 112.0,79.4 112.4,78.4 112.8,79.4 113.2,79.1 113.6,78.4 114.0,78.8 114.4,79.0 114.8,79.3 115.2,78.7 115.6,78.9 116.0,79.3 116.4,79.2 116.8,79.3 117.2,78.7 117.6,79.0 118.0,78.4 118.4,79.0 118.8,79.1 119.2,78.9 119.6,78.8 120.0,77.8 120.4,77.8 120.8,76.8 121.2,75.8 121.6,75.1 122.0,76.0 122.4,76.5 122.8,78.2 123.2,78.7 123.6,78.3 124.0,78.1 124.4,78.5 124.8,78.6 125.2,78.6 125.6,77.7 126.0,76.0 126.4,75.0 126.8,71.8 127.2,70.8 127.6,69.7 128.0,71.0 128.4,73.8 128.8,75.1 129.2,76.7 129.6,78.0 130.0,78.5 130.4,78.8 130.8,78.5 131.2,78.5 131.6,77.3 132.0,77.1 132.4,75.5 132.8,75.9 133.2,76.9 133.6,77.4 134.0,78.3 134.4,78.4 134.8,78.3 135.2,78.7 135.6,78.3 136.0,78.0 136.4,77.8 136.8,77.2 137.2,73.8 137.6,66.2 138.0,58.2 138.4,52.7 138.8,54.1 139.2,61.9 139.6,69.5 140.0,74.8 140.4,76.5 140.8,76.9 141.2,75.9 141.6,76.5 142.0,75.4 142.4,74.8 142.8,74.7 143.2,73.9 143.6,73.4 144.0,73.4 144.4,72.5 144.8,73.0 145.2,73.0 145.6,73.7 146.0,73.5 146.4,72.0 146.8,70.8 147.2,67.6 147.6,63.9 148.0,59.0 148.4,53.3 148.8,47.6 149.2,44.1 149.6,43.4 150.0,46.2 150.4,51.0 150.8,55.2 151.2,59.8 151.6,59.7 152.0,57.1 152.4,52.3 152.8,49.2 153.2,48.9 153.6,52.1 154.0,55.1 154.4,53.9 154.8,53.3 155.2,54.6 155.6,61.5 156.0,68.4 156.4,73.0 156.8,75.3 157.2,75.5 157.6,75.2 158.0,75.0 158.4,75.0 158.8,74.6 159.2,74.9 159.6,75.7 160.0,76.1 160.4,76.4 160.8,77.2 161.2,77.3 161.6,77.9 162.0,77.4 162.4,78.2 162.8,78.4 163.2,78.5 163.6,77.9 164.0,77.9 164.4,78.7 164.8,77.7 165.2,78.4 165.6,77.7 166.0,75.3 166.4,73.2 166.8,71.0 167.2,68.3 167.6,67.6 168.0,69.9 168.4,72.1 168.8,75.2 169.2,76.2 169.6,77.6 170.0,78.3 170.4,77.6 170.8,77.7 171.2,77.6 171.6,76.5 172.0,74.7 172.4,72.6 172.8,73.5 173.2,75.4 173.6,76.8 174.0,78.0 174.4,77.7 174.8,76.9 175.2,74.9 175.6,70.6 176.0,65.7 176.4,62.2 176.8,63.5 177.2,67.9 177.6,73.2 178.0,76.4 178.4,78.4 178.8,79.0 179.2,79.0 179.6,77.9 180.0,77.6 180.4,77.7 180.8,75.0 181.2,73.0 181.6,71.9 182.0,73.8 182.4,76.2 182.8,77.7 183.2,78.3 183.6,77.0 184.0,75.5 184.4,69.8 184.8,59.4 185.2,50.6 185.6,48.6 186.0,54.6 186.4,64.5 186.8,72.4 187.2,76.8 187.6,77.4 188.0,78.3 188.4,76.6 188.8,73.2 189.2,69.6 189.6,68.3 190.0,70.6 190.4,74.2 190.8,75.0 191.2,72.9 191.6,66.9 192.0,59.7 192.4,56.7 192.8,57.8 193.2,63.5 193.6,70.1 194.0,74.5 194.4,77.6 194.8,78.5 195.2,78.5 195.6,78.6 196.0,78.5 196.4,77.6 196.8,76.5 197.2,72.5 197.6,67.4 198.0,61.6 198.4,57.6 198.8,59.2 199.2,64.7 199.6,70.5 200.0,74.1 200.4,76.2 200.8,74.4 201.2,69.8 201.6,64.0 202.0,57.7 202.4,54.2 202.8,55.2 203.2,61.1 203.6,67.0 204.0,72.1 204.4,74.7 204.8,75.2 205.2,72.6 205.6,71.2 206.0,69.4 206.4,67.8 206.8,68.3 207.2,69.5 207.6,71.9 208.0,74.3 208.4,75.3 208.8,75.4 209.2,74.1 209.6,69.6 210.0,64.9 210.4,62.7 210.8,63.2 211.2,67.9 211.6,72.2 212.0,75.9 212.4,76.4 212.8,76.6 213.2,74.3 213.6,69.2 214.0,65.4 214.4,61.7 214.8,63.0 215.2,66.7 215.6,71.6 216.0,74.9 216.4,75.4 216.8,76.4 217.2,74.9 217.6,74.1 218.0,73.5 218.4,72.9 218.8,72.9 219.2,73.9 219.6,74.7 220.0,75.4 220.4,76.9 220.8,77.2 221.2,77.4 221.6,78.0 222.0,77.9 222.4,77.9 222.8,77.5 223.2,73.7 223.6,67.3 224.0,58.2 224.4,51.7 224.8,54.9 225.2,62.9 225.6,70.3 226.0,76.3 226.4,77.1 226.8,75.7 227.2,72.6 227.6,67.6 228.0,66.0 228.4,68.4 228.8,72.1 229.2,74.9 229.6,75.7 230.0,72.3 230.4,65.7 230.8,57.3 231.2,51.8 231.6,50.1 232.0,54.0 232.4,61.2 232.8,69.3 233.2,74.0 233.6,76.8 234.0,76.8 234.4,73.2 234.8,67.1 235.2,61.7 235.6,60.1 236.0,64.6 236.4,70.7 236.8,76.3 237.2,78.7 237.6,79.3 238.0,78.9 238.4,78.8 238.8,79.7 239.2,79.6 239.6,79.4 240.0,79.1 240.4,79.0 240.8,79.5 241.2,79.4 241.6,79.4 242.0,79.5 242.4,79.6 242.8,78.9 243.2,79.0 243.6,79.9 244.0,79.8 244.4,79.8 244.8,78.8 245.2,78.8 245.6,79.1 246.0,79.3 246.4,79.5 246.8,78.9 247.2,79.4 247.6,78.9 248.0,78.9 248.4,79.6 248.8,79.5 249.2,79.6 249.6,79.3 250.0,79.4 250.4,79.1 250.8,79.2 251.2,79.7 251.6,79.8 252.0,78.9 252.4,79.0 252.8,79.8 253.2,79.6 253.6,79.8 254.0,79.1 254.4,79.4 254.8,79.2 255.2,79.8 255.6,79.3 256.0,79.6 256.4,80.0 256.8,79.3 257.2,79.5 257.6,79.8 258.0,80.0 258.4,79.4 258.8,79.3 259.2,79.0 259.6,79.9 260.0,79.0 260.4,79.0 260.8,79.6 261.2,79.5 261.6,79.7 262.0,79.2 262.4,79.8 262.8,79.0 263.2,79.1 263.6,79.7 264.0,79.0 264.4,79.3 264.8,79.8 265.2,79.7 265.6,79.2 266.0,79.1 266.4,79.3 266.8,79.7 267.2,79.2 267.6,78.7 268.0,79.1 268.4,78.2 268.8,77.5 269.2,76.1 269.6,74.5 270.0,72.6 270.4,72.4 270.8,72.0 271.2,73.1 271.6,74.6 272.0,76.8 272.4,78.1 272.8,78.2 273.2,78.9 273.6,79.2 274.0,79.3 274.4,79.4 274.8,79.4 275.2,79.2 275.6,79.6 276.0,79.9 276.4,79.6 276.8,79.9 277.2,79.6 277.6,79.1 278.0,79.8 278.4,80.0 278.8,79.3 279.2,79.0 279.6,79.6 280.0,79.6 280.4,79.6 280.8,80.1 281.2,79.7 281.6,79.8 282.0,78.7 282.4,79.0 282.8,78.6 283.2,76.9 283.6,75.9 284.0,75.8 284.4,75.5 284.8,74.7 285.2,76.1 285.6,76.5 286.0,78.2 286.4,78.8 286.8,78.8 287.2,79.0 287.6,79.8 288.0,79.6 288.4,79.9 288.8,79.4 289.2,79.4 289.6,80.1 290.0,79.8 290.4,79.6 290.8,79.6 291.2,79.8 291.6,79.7 292.0,79.8 292.4,78.8 292.8,78.7 293.2,77.6 293.6,76.8 294.0,75.8 294.4,75.4 294.8,75.6 295.2,76.4 295.6,77.1 296.0,77.9 296.4,78.9 296.8,79.5 297.2,79.3 297.6,79.4 298.0,79.1 298.4,79.9 298.8,80.2 299.2,79.4 299.6,79.2 300.0,79.2 300.4,79.5 300.8,79.3 301.2,80.2 301.6,79.1 302.0,79.4 302.4,79.1 302.8,79.8 303.2,79.9 303.6,79.2 304.0,79.1 304.4,79.6 304.8,79.7 305.2,80.1 305.6,79.0 306.0,79.1 306.4,79.2 306.8,79.3 307.2,79.3 307.6,79.9 308.0,79.7 308.4,79.3 308.8,79.2 309.2,79.4 309.6,79.2 310.0,79.9 310.4,79.4 310.8,79.7 311.2,80.0 311.6,79.6 312.0,79.3 312.4,80.1 312.8,80.1 313.2,79.4 313.6,79.7 314.0,80.2 314.4,79.6 314.8,79.3 315.2,79.1 315.6,80.2 316.0,80.0 316.4,79.5 316.8,79.7 317.2,79.7 317.6,79.4 318.0,80.2 318.4,79.8 318.8,79.3 319.2,79.1 319.6,79.6 320.0,79.5 320.4,80.0 320.8,79.9 321.2,79.8 321.6,79.2 322.0,79.2 322.4,79.4 322.8,79.4 323.2,80.1 323.6,79.7 324.0,79.8 324.4,80.2 324.8,79.4 325.2,79.7 325.6,79.2 326.0,80.0 326.4,79.1 326.8,80.0 327.2,80.1 327.6,80.0 328.0,79.1 328.4,79.2 328.8,78.9 329.2,75.9 329.6,71.8 330.0,65.9 330.4,62.7 330.8,63.6 331.2,69.3 331.6,74.1 332.0,78.0 332.4,78.3 332.8,77.5 333.2,72.4 333.6,66.5 334.0,58.3 334.4,54.3 334.8,55.8 335.2,61.8 335.6,70.2 336.0,75.1 336.4,78.0 336.8,78.8 337.2,79.4 337.6,79.6 338.0,79.9 338.4,79.3 338.8,78.8 339.2,75.6 339.6,70.8 340.0,64.3 340.4,60.8 340.8,62.1 341.2,67.8 341.6,73.2 342.0,77.5 342.4,79.4 342.8,79.3 343.2,79.8 343.6,79.7 344.0,79.1 344.4,80.3 344.8,80.1 345.2,79.4 345.6,79.9 346.0,79.5 346.4,79.6 346.8,79.8 347.2,79.5 347.6,79.5 348.0,79.6 348.4,79.9 348.8,79.4 349.2,79.4 349.6,80.0 350.0,79.4 350.4,79.9 350.8,78.9 351.2,78.1 351.6,76.1 352.0,75.2 352.4,73.5 352.8,73.9 353.2,75.1 353.6,77.3 354.0,78.6 354.4,78.8 354.8,79.4 355.2,80.1 355.6,79.7 356.0,78.7 356.4,77.6 356.8,74.6 357.2,69.2 357.6,61.9 358.0,53.9 358.4,50.7 358.8,51.5 359.2,57.4 359.6,64.0 360.0,67.2 360.4,66.2 360.8,63.5 361.2,64.1 361.6,68.6 362.0,73.4 362.4,77.4 362.8,79.4 363.2,80.2 363.6,80.1 364.0,79.9 364.4,79.6 364.8,77.6 365.2,74.4 365.6,67.2 366.0,58.3 366.4,51.8 366.8,54.2 367.2,62.8 367.6,71.8 368.0,77.2 368.4,79.2 368.8,79.2 369.2,80.1 369.6,80.3 370.0,79.8 370.4,79.6 370.8,79.8 371.2,79.2 371.6,79.4 372.0,77.9 372.4,72.7 372.8,65.5 373.2,58.4 373.6,55.9 374.0,61.8 374.4,69.4 374.8,75.0 375.2,78.0 375.6,79.2 376.0,79.8 376.4,80.0 376.8,79.6 377.2,80.3 377.6,79.6 378.0,79.7 378.4,79.1 378.8,79.6 379.2,77.7 379.6,77.4 380.0,75.8 380.4,75.1 380.8,75.3 381.2,76.0 381.6,78.1 382.0,79.3 382.4,79.7 382.8,79.8 383.2,79.3 383.6,80.2 384.0,79.6 384.4,80.3 384.8,79.5 385.2,79.9 385.6,80.2 386.0,79.3 386.4,79.4 386.8,77.7 387.2,75.1 387.6,71.1 388.0,67.4 388.4,64.7 388.8,65.3 389.2,68.9 389.6,73.9 390.0,77.4 390.4,78.8 390.8,79.7 391.2,80.1 391.6,79.2 392.0,79.5 392.4,79.8 392.8,79.4 393.2,79.7 393.6,79.9 394.0,79.4 394.4,79.8 394.8,79.2 395.2,78.7 395.6,76.6 396.0,74.7 396.4,72.5 396.8,73.8 397.2,75.2 397.6,78.4 398.0,79.2 398.4,79.6 398.8,79.7 399.2,79.7 399.6,79.0 400.0,77.1 400.4,73.3 400.8,67.7 401.2,63.8 401.6,62.5 402.0,65.6 402.4,70.3 402.8,75.1 403.2,78.0 403.6,79.3 404.0,77.9 404.4,74.5 404.8,68.8 405.2,64.0 405.6,62.0 406.0,65.4 406.4,72.2 406.8,77.1 407.2,79.2 407.6,79.8 408.0,80.1 408.4,79.6 408.8,79.8 409.2,78.9 409.6,78.4 410.0,78.0 410.4,77.0 410.8,75.8 411.2,74.7 411.6,75.3 412.0,75.5 412.4,76.2 412.8,77.4 413.2,78.4 413.6,78.9 414.0,79.1 414.4,80.3 414.8,80.4 415.2,80.1 415.6,80.3 416.0,79.8 416.4,80.2 416.8,79.5 417.2,79.9 417.6,79.0 418.0,78.0 418.4,74.9 418.8,73.0 419.2,70.1 419.6,70.1 420.0,72.0 420.4,73.4 420.8,76.2 421.2,78.1 421.6,79.1 422.0,79.2 422.4,80.3 422.8,80.3 423.2,79.8 423.6,79.7 424.0,80.0 424.4,79.4 424.8,79.4 425.2,80.4 425.6,79.7 426.0,79.9 426.4,80.4 426.8,80.5 427.2,79.9 427.6,79.6 428.0,79.7 428.4,80.4 428.8,80.4 429.2,79.6 429.6,80.3 430.0,79.7 430.4,79.9 430.8,79.4 431.2,80.2 431.6,80.1 432.0,78.7 432.4,78.7 432.8,77.4 433.2,77.3 433.6,75.5 434.0,74.9 434.4,75.3 434.8,74.9 435.2,76.1 435.6,76.9 436.0,77.6 436.4,77.7 436.8,79.1 437.2,79.8 437.6,79.5 438.0,79.3 438.4,79.5 438.8,79.7 439.2,80.2 439.6,79.6 440.0,79.5 440.4,79.6 440.8,80.1 441.2,80.3 441.6,79.7 442.0,79.9 442.4,79.6 442.8,77.4 443.2,72.8 443.6,66.0 444.0,59.2 444.4,54.4 444.8,55.5 445.2,62.5 445.6,69.4 446.0,76.1 446.4,78.3 446.8,79.5 447.2,79.8 447.6,79.3 448.0,80.0 448.4,79.6 448.8,79.5 449.2,80.1 449.6,78.9 450.0,78.2 450.4,77.1 450.8,74.2 451.2,72.3 451.6,72.1 452.0,73.0 452.4,76.1 452.8,78.3 453.2,78.4 453.6,79.4 454.0,80.0 454.4,79.6 454.8,80.2 455.2,79.7 455.6,79.3 456.0,79.7 456.4,79.8 456.8,79.4 457.2,79.5 457.6,78.9 458.0,76.6 458.4,72.8 458.8,68.1 459.2,63.4 459.6,62.2 460.0,65.7 460.4,69.8 460.8,75.1 461.2,77.2 461.6,78.8 462.0,78.6 462.4,78.7 462.8,78.7 463.2,78.1 463.6,77.3 464.0,75.6 464.4,74.7 464.8,73.2 465.2,72.3 465.6,71.2 466.0,69.8 466.4,70.1 466.8,70.4 467.2,70.8 467.6,72.0 468.0,72.4 468.4,73.5 468.8,74.5 469.2,75.8 469.6,75.6 470.0,74.3 470.4,71.2 470.8,67.6 471.2,62.4 471.6,60.0 472.0,57.3 472.4,55.3 472.8,53.0 473.2,49.1 473.6,46.3 474.0,45.5 474.4,46.9 474.8,51.3 475.2,57.2 475.6,63.0 476.0,67.8 476.4,71.4 476.8,71.4 477.2,69.8 477.6,64.1 478.0,58.8 478.4,55.6 478.8,57.5 479.2,62.6 479.6,68.7 480.0,72.9 480.4,76.0 480.8,76.4 481.2,74.8 481.6,73.0 482.0,69.1 482.4,68.1 482.8,68.9 483.2,71.6 483.6,73.6 484.0,76.5 484.4,78.2 484.8,77.3 485.2,75.6 485.6,72.0 486.0,65.4 486.4,62.0 486.8,63.3 487.2,68.6 487.6,73.7 488.0,77.0 488.4,79.5 488.8,79.6 489.2,79.7 489.6,79.1 490.0,79.2 490.4,79.5 490.8,79.2 491.2,79.4 491.6,79.9 492.0,78.9 492.4,77.8 492.8,76.1 493.2,71.0 493.6,63.8 494.0,57.7 494.4,54.3 494.8,54.9 495.2,60.7 495.6,68.1 496.0,74.0 496.4,77.2 496.8,79.1 497.2,78.8 497.6,78.2 498.0,77.7 498.4,75.7 498.8,74.7 499.2,72.9 499.6,72.9 500.0,73.4 500.4,75.2 500.8,76.3 501.2,77.7 501.6,78.6 502.0,79.5 502.4,79.5 502.8,79.8 503.2,80.4 503.6,79.7 504.0,78.5 504.4,74.3 504.8,68.8 505.2,63.0 505.6,62.4 506.0,65.8 506.4,71.7 506.8,76.1 507.2,78.7 507.6,79.5 508.0,79.9 508.4,80.6 508.8,80.3 509.2,79.8 509.6,79.9 510.0,79.7 510.4,80.6 510.8,79.9 511.2,80.4 511.6,80.4 512.0,80.6 512.4,79.5 512.8,79.8 513.2,79.8 513.6,79.2 514.0,79.9 514.4,78.7 514.8,78.6 515.2,77.6 515.6,76.3 516.0,76.2 516.4,75.7 516.8,75.6 517.2,76.1 517.6,77.3 518.0,77.4 518.4,78.4 518.8,79.1 519.2,79.7 519.6,79.5 520.0,80.3 520.4,79.8 520.8,80.4 521.2,80.4 521.6,79.7 522.0,79.8 522.4,79.9 522.8,80.4 523.2,80.1 523.6,80.0 524.0,80.6 524.4,79.8 524.8,79.9 525.2,80.0 525.6,79.8 526.0,79.6 526.4,79.6 526.8,80.3 527.2,80.2 527.6,80.3 528.0,79.7 528.4,76.9 528.8,74.2 529.2,71.4 529.6,69.8 530.0,72.5 530.4,75.9 530.8,78.9 531.2,80.0 531.6,79.3 532.0,78.6 532.4,74.9 532.8,70.2 533.2,65.3 533.6,63.6 534.0,67.4 534.4,72.8 534.8,77.2 535.2,79.0 535.6,79.6 536.0,80.1 536.4,80.2 536.8,79.8 537.2,80.4 537.6,79.9 538.0,79.7 538.4,80.0 538.8,80.1 539.2,79.8 539.6,80.3 540.0,80.5 540.4,80.3 540.8,80.5 541.2,79.7 541.6,80.1 542.0,80.1 542.4,79.7 542.8,80.1 543.2,79.7 543.6,80.2 544.0,80.3 544.4,80.2 544.8,80.0 545.2,79.9 545.6,79.7 546.0,80.1 546.4,80.7 546.8,80.3 547.2,80.0 547.6,80.4 548.0,79.9 548.4,80.2 548.8,80.4 549.2,80.8 549.6,80.1 550.0,80.3 550.4,80.8 550.8,80.6 551.2,80.4 551.6,80.4 552.0,80.1 552.4,80.2 552.8,80.0 553.2,80.7 553.6,80.7 554.0,80.1 554.4,80.8 554.8,79.7 555.2,79.8 555.6,80.3 556.0,80.0 556.4,80.1 556.8,80.8 557.2,79.8 557.6,79.9 558.0,79.9 558.4,80.5 558.8,80.0 559.2,79.7 559.6,80.3 560.0,80.1 560.4,80.0 560.8,80.3 561.2,80.5 561.6,80.3 562.0,80.4 562.4,80.4 562.8,80.7 563.2,80.8 563.6,80.1 564.0,80.1 564.4,80.8 564.8,80.1 565.2,80.5 565.6,80.5 566.0,80.5 566.4,80.8 566.8,80.7 567.2,79.9 567.6,80.4 568.0,80.3 568.4,80.4 568.8,80.1 569.2,80.0" fill="none" stroke="#3e3e3e" stroke-width="1.0" stroke-linejoin="round"/><path d="M185.3 0V89" stroke="#9a9292" stroke-width="1.5"/><path d="M0.6 89.5v1.6" stroke="#eee" stroke-width="0.6"/><path d="M36.1 89.5v1.6" stroke="#eee" stroke-width="0.6"/><path d="M71.6 89.5v1.6" stroke="#eee" stroke-width="0.6"/><path d="M107.1 89.5v1.6" stroke="#eee" stroke-width="0.6"/><path d="M142.6 89.5v1.6" stroke="#eee" stroke-width="0.6"/><path d="M178.1 89.5v1.6" stroke="#eee" stroke-width="0.6"/><path d="M213.6 89.5v1.6" stroke="#eee" stroke-width="0.6"/><path d="M249.1 89.5v1.6" stroke="#eee" stroke-width="0.6"/><path d="M284.6 89.5v1.6" stroke="#eee" stroke-width="0.6"/><path d="M320.1 89.5v1.6" stroke="#eee" stroke-width="0.6"/><path d="M355.6 89.5v1.6" stroke="#eee" stroke-width="0.6"/><path d="M391.1 89.5v1.6" stroke="#eee" stroke-width="0.6"/><path d="M426.6 89.5v1.6" stroke="#eee" stroke-width="0.6"/><path d="M462.1 89.5v1.6" stroke="#eee" stroke-width="0.6"/><path d="M497.6 89.5v1.6" stroke="#eee" stroke-width="0.6"/><path d="M533.1 89.5v1.6" stroke="#eee" stroke-width="0.6"/><path d="M568.6 89.5v1.6" stroke="#eee" stroke-width="0.6"/></svg>
<div class="l" style="left:196.5px;top:429.6px;font-size:3.6px;color:#aaa">-55 dBm</div>
<div class="l" style="left:747.5px;top:429.6px;font-size:3.6px;color:#aaa">-55 dBm</div>
<div class="l" style="left:196.5px;top:435.9px;font-size:3.6px;color:#aaa">-60 dBm</div>
<div class="l" style="left:747.5px;top:435.9px;font-size:3.6px;color:#aaa">-60 dBm</div>
<div class="l" style="left:196.5px;top:442.2px;font-size:3.6px;color:#aaa">-65 dBm</div>
<div class="l" style="left:747.5px;top:442.2px;font-size:3.6px;color:#aaa">-65 dBm</div>
<div class="l" style="left:196.5px;top:448.5px;font-size:3.6px;color:#aaa">-70 dBm</div>
<div class="l" style="left:747.5px;top:448.5px;font-size:3.6px;color:#aaa">-70 dBm</div>
<div class="l" style="left:196.5px;top:454.8px;font-size:3.6px;color:#aaa">-75 dBm</div>
<div class="l" style="left:747.5px;top:454.8px;font-size:3.6px;color:#aaa">-75 dBm</div>
<div class="l" style="left:196.5px;top:461.1px;font-size:3.6px;color:#aaa">-80 dBm</div>
<div class="l" style="left:747.5px;top:461.1px;font-size:3.6px;color:#aaa">-80 dBm</div>
<div class="l" style="left:196.5px;top:467.4px;font-size:3.6px;color:#aaa">-85 dBm</div>
<div class="l" style="left:747.5px;top:467.4px;font-size:3.6px;color:#aaa">-85 dBm</div>
<div class="l" style="left:196.5px;top:473.7px;font-size:3.6px;color:#aaa">-90 dBm</div>
<div class="l" style="left:747.5px;top:473.7px;font-size:3.6px;color:#aaa">-90 dBm</div>
<div class="l" style="left:196.5px;top:480.0px;font-size:3.6px;color:#aaa">-95 dBm</div>
<div class="l" style="left:747.5px;top:480.0px;font-size:3.6px;color:#aaa">-95 dBm</div>
<div class="l" style="left:196.5px;top:486.3px;font-size:3.6px;color:#aaa">-100 dBm</div>
<div class="l" style="left:747.5px;top:486.3px;font-size:3.6px;color:#aaa">-100 dBm</div>
<div class="l" style="left:196.5px;top:492.6px;font-size:3.6px;color:#aaa">-105 dBm</div>
<div class="l" style="left:747.5px;top:492.6px;font-size:3.6px;color:#aaa">-105 dBm</div>
<div class="l" style="left:747.5px;top:498.9px;font-size:3.6px;color:#aaa">-110 dBm</div>
<div class="t b" style="left:336px;top:516.6px;font-size:8.20px;color:#fff;transform:translateX(-50%) scaleX(1.15)">415.500</div>
<div class="t b" style="left:478px;top:516.6px;font-size:8.20px;color:#fff;transform:translateX(-50%) scaleX(1.15)">416.000</div>
<div class="t b" style="left:620px;top:516.6px;font-size:8.20px;color:#fff;transform:translateX(-50%) scaleX(1.15)">416.500</div>
<div class="a" style="left:193.5px;top:525.8px;width:569.5px;height:3.7px;background:#f4f6fb"></div>
<svg class="a" style="left:193.5px;top:529.5px" width="569.5" height="140" viewBox="0 0 569.5 140"><defs><linearGradient id="wbg" x1="0" y1="0" x2="1" y2="0"><stop offset="0" stop-color="#030308"/><stop offset="0.085" stop-color="#03030c"/><stop offset="0.115" stop-color="#04042a"/><stop offset="0.2" stop-color="#06063e"/><stop offset="0.32" stop-color="#080852"/><stop offset="0.62" stop-color="#08084e"/><stop offset="0.9" stop-color="#060640"/><stop offset="0.925" stop-color="#050538"/><stop offset="0.945" stop-color="#030314"/><stop offset="1" stop-color="#030308"/></linearGradient><filter id="wglow" x="-60%" y="-5%" width="220%" height="110%"><feGaussianBlur stdDeviation="4 0.1"/></filter><filter id="wb" x="-5%" y="-5%" width="110%" height="110%"><feGaussianBlur stdDeviation="0.45 0.3"/></filter></defs><rect width="569.5" height="140" fill="url(#wbg)"/><rect x="44" y="0" width="20" height="140" fill="#0a1688" opacity="0.75" filter="url(#wglow)"/><g filter="url(#wb)"><rect x="251.9" y="0.0" width="0.6" height="140.0" fill="#2424c8" opacity="0.24"/><rect x="104.7" y="47.8" width="0.9" height="92.2" fill="#1c1cb0" opacity="0.48"/><rect x="291.5" y="0.0" width="0.8" height="140.0" fill="#2424c8" opacity="0.44"/><rect x="430.3" y="77.5" width="0.6" height="62.5" fill="#101080" opacity="0.40"/><rect x="458.9" y="0.0" width="1.0" height="140.0" fill="#1c1cb0" opacity="0.34"/><rect x="251.3" y="0.0" width="0.5" height="140.0" fill="#2424c8" opacity="0.31"/><rect x="497.5" y="0.0" width="0.8" height="140.0" fill="#2424c8" opacity="0.38"/><rect x="517.7" y="0.0" width="0.6" height="140.0" fill="#2424c8" opacity="0.42"/><rect x="269.5" y="16.0" width="0.8" height="124.0" fill="#2424c8" opacity="0.21"/><rect x="75.3" y="0.0" width="0.9" height="140.0" fill="#1c1cb0" opacity="0.48"/><rect x="357.8" y="0.0" width="0.8" height="140.0" fill="#101080" opacity="0.30"/><rect x="307.4" y="0.0" width="0.9" height="140.0" fill="#1c1cb0" opacity="0.39"/><rect x="270.0" y="0.0" width="0.9" height="140.0" fill="#2424c8" opacity="0.31"/><rect x="387.0" y="11.8" width="0.9" height="128.2" fill="#2424c8" opacity="0.38"/><rect x="254.0" y="0.0" width="0.6" height="140.0" fill="#2424c8" opacity="0.50"/><rect x="254.7" y="79.2" width="0.7" height="60.8" fill="#101080" opacity="0.44"/><rect x="457.1" y="0.0" width="0.9" height="140.0" fill="#2424c8" opacity="0.40"/><rect x="297.1" y="0.0" width="0.9" height="140.0" fill="#1a2a9a" opacity="0.26"/><rect x="249.7" y="35.9" width="0.7" height="104.1" fill="#1a2a9a" opacity="0.36"/><rect x="148.6" y="0.0" width="0.7" height="140.0" fill="#101080" opacity="0.43"/><rect x="171.3" y="20.3" width="0.9" height="119.7" fill="#1c1cb0" opacity="0.46"/><rect x="398.9" y="0.0" width="0.9" height="140.0" fill="#2424c8" opacity="0.32"/><rect x="267.8" y="79.4" width="0.7" height="60.6" fill="#1a2a9a" opacity="0.22"/><rect x="200.5" y="28.9" width="0.7" height="111.1" fill="#2424c8" opacity="0.48"/><rect x="183.7" y="36.8" width="0.8" height="103.2" fill="#2424c8" opacity="0.28"/><rect x="379.2" y="88.9" width="0.8" height="51.1" fill="#101080" opacity="0.26"/><rect x="220.8" y="0.0" width="0.5" height="140.0" fill="#1a2a9a" opacity="0.41"/><rect x="512.1" y="0.0" width="0.8" height="140.0" fill="#2424c8" opacity="0.44"/><rect x="185.6" y="0.0" width="0.9" height="140.0" fill="#2424c8" opacity="0.32"/><rect x="464.4" y="0.3" width="0.8" height="139.7" fill="#2424c8" opacity="0.20"/><rect x="208.6" y="67.3" width="0.6" height="72.7" fill="#101080" opacity="0.48"/><rect x="187.0" y="37.5" width="0.8" height="102.5" fill="#1a2a9a" opacity="0.26"/><rect x="74.1" y="0.0" width="0.7" height="140.0" fill="#1c1cb0" opacity="0.49"/><rect x="257.9" y="0.0" width="0.8" height="140.0" fill="#1a2a9a" opacity="0.26"/><rect x="111.0" y="35.5" width="0.9" height="104.5" fill="#1a2a9a" opacity="0.34"/><rect x="124.1" y="0.0" width="0.7" height="140.0" fill="#101080" opacity="0.33"/><rect x="507.3" y="0.0" width="0.6" height="140.0" fill="#1a2a9a" opacity="0.34"/><rect x="456.3" y="16.5" width="1.0" height="123.5" fill="#101080" opacity="0.37"/><rect x="354.9" y="59.9" width="1.0" height="80.1" fill="#2424c8" opacity="0.50"/><rect x="307.3" y="0.0" width="0.9" height="140.0" fill="#1c1cb0" opacity="0.30"/><rect x="404.9" y="0.0" width="0.8" height="140.0" fill="#1c1cb0" opacity="0.37"/><rect x="256.6" y="0.0" width="0.8" height="140.0" fill="#1c1cb0" opacity="0.32"/><rect x="86.7" y="0.0" width="0.8" height="140.0" fill="#1a2a9a" opacity="0.25"/><rect x="268.2" y="37.6" width="0.9" height="102.4" fill="#1c1cb0" opacity="0.35"/><rect x="191.1" y="6.4" width="1.0" height="133.6" fill="#2424c8" opacity="0.41"/><rect x="367.3" y="7.3" width="0.8" height="132.7" fill="#2424c8" opacity="0.45"/><rect x="134.2" y="0.0" width="0.9" height="140.0" fill="#101080" opacity="0.25"/><rect x="468.6" y="55.3" width="0.9" height="84.7" fill="#2424c8" opacity="0.30"/><rect x="89.0" y="0.0" width="0.8" height="140.0" fill="#2424c8" opacity="0.29"/><rect x="407.3" y="0.0" width="0.8" height="140.0" fill="#1c1cb0" opacity="0.27"/><rect x="489.9" y="70.4" width="1.0" height="69.6" fill="#101080" opacity="0.42"/><rect x="344.0" y="78.9" width="0.6" height="61.1" fill="#2424c8" opacity="0.43"/><rect x="237.6" y="0.0" width="0.5" height="140.0" fill="#101080" opacity="0.21"/><rect x="504.6" y="0.0" width="0.5" height="140.0" fill="#1a2a9a" opacity="0.44"/><rect x="201.7" y="0.0" width="0.7" height="140.0" fill="#1c1cb0" opacity="0.21"/><rect x="140.6" y="76.2" width="0.8" height="63.8" fill="#1c1cb0" opacity="0.31"/><rect x="190.1" y="0.0" width="0.6" height="140.0" fill="#1c1cb0" opacity="0.43"/><rect x="500.1" y="37.7" width="0.9" height="102.3" fill="#2424c8" opacity="0.25"/><rect x="253.0" y="0.0" width="0.6" height="140.0" fill="#1a2a9a" opacity="0.25"/><rect x="327.7" y="0.0" width="0.8" height="140.0" fill="#1c1cb0" opacity="0.45"/><rect x="125.6" y="56.6" width="0.5" height="83.4" fill="#1a2a9a" opacity="0.25"/><rect x="419.1" y="0.0" width="1.0" height="140.0" fill="#1c1cb0" opacity="0.35"/><rect x="499.2" y="6.7" width="0.8" height="133.3" fill="#1a2a9a" opacity="0.33"/><rect x="286.4" y="33.3" width="0.6" height="106.7" fill="#101080" opacity="0.26"/><rect x="461.1" y="0.0" width="0.6" height="140.0" fill="#2424c8" opacity="0.24"/><rect x="407.0" y="0.0" width="0.9" height="140.0" fill="#1a2a9a" opacity="0.25"/><rect x="303.8" y="82.5" width="0.9" height="57.5" fill="#1c1cb0" opacity="0.27"/><rect x="307.9" y="37.9" width="0.8" height="102.1" fill="#1c1cb0" opacity="0.27"/><rect x="214.9" y="0.0" width="0.7" height="140.0" fill="#1c1cb0" opacity="0.44"/><rect x="78.2" y="0.0" width="0.5" height="140.0" fill="#2424c8" opacity="0.48"/><rect x="3.0" y="11.5" width="0.9" height="128.5" fill="#8a7f98" opacity="1.0"/><rect x="2.2" y="19.5" width="2.6" height="10.0" rx="1" fill="#6fe6b0"/><rect x="10.4" y="0.0" width="1.1" height="140.0" fill="#c29c52" opacity="1.0"/><rect x="17.9" y="0.0" width="1.2" height="140.0" fill="#3fae52" opacity="1.0"/><rect x="49.0" y="0.0" width="0.9" height="140.0" fill="#b8844e" opacity="1.0"/><rect x="52.2" y="0.0" width="2.6" height="140.0" fill="#2a58c8" opacity="0.8"/><rect x="52.8" y="9.3" width="2.2" height="0.9" fill="#62d4d8" opacity="1.0"/><rect x="52.4" y="11.2" width="2.2" height="3.7" fill="#62d4d8" opacity="1.0"/><rect x="52.0" y="15.5" width="2.2" height="2.5" fill="#62d4d8" opacity="1.0"/><rect x="52.0" y="23.3" width="2.2" height="2.8" fill="#62d4d8" opacity="1.0"/><rect x="52.8" y="27.4" width="2.2" height="1.5" fill="#62d4d8" opacity="1.0"/><rect x="52.8" y="32.9" width="2.2" height="3.0" fill="#62d4d8" opacity="1.0"/><rect x="52.1" y="41.6" width="2.2" height="2.0" fill="#62d4d8" opacity="1.0"/><rect x="52.0" y="43.9" width="2.2" height="1.8" fill="#62d4d8" opacity="1.0"/><rect x="52.7" y="46.8" width="2.2" height="1.9" fill="#62d4d8" opacity="1.0"/><rect x="52.6" y="49.5" width="2.2" height="1.8" fill="#62d4d8" opacity="1.0"/><rect x="52.6" y="51.7" width="2.2" height="3.9" fill="#62d4d8" opacity="1.0"/><rect x="52.0" y="58.6" width="2.2" height="2.7" fill="#62d4d8" opacity="1.0"/><rect x="52.6" y="61.7" width="2.2" height="3.9" fill="#62d4d8" opacity="1.0"/><rect x="52.3" y="67.0" width="2.2" height="3.8" fill="#62d4d8" opacity="1.0"/><rect x="52.6" y="71.7" width="2.2" height="3.3" fill="#62d4d8" opacity="1.0"/><rect x="52.8" y="76.3" width="2.2" height="3.6" fill="#62d4d8" opacity="1.0"/><rect x="52.7" y="80.2" width="2.2" height="1.9" fill="#62d4d8" opacity="1.0"/><rect x="52.2" y="82.8" width="2.2" height="3.8" fill="#62d4d8" opacity="1.0"/><rect x="52.1" y="87.3" width="2.2" height="1.4" fill="#62d4d8" opacity="1.0"/><rect x="52.0" y="89.8" width="2.2" height="4.0" fill="#62d4d8" opacity="1.0"/><rect x="52.2" y="95.2" width="2.2" height="2.5" fill="#62d4d8" opacity="1.0"/><rect x="52.3" y="98.8" width="2.2" height="3.4" fill="#62d4d8" opacity="1.0"/><rect x="52.4" y="102.6" width="2.2" height="3.7" fill="#62d4d8" opacity="1.0"/><rect x="52.7" y="113.5" width="2.2" height="2.2" fill="#62d4d8" opacity="1.0"/><rect x="52.4" y="119.9" width="2.2" height="3.9" fill="#62d4d8" opacity="1.0"/><rect x="52.3" y="125.0" width="2.2" height="2.3" fill="#62d4d8" opacity="1.0"/><rect x="52.3" y="131.3" width="2.2" height="2.8" fill="#62d4d8" opacity="1.0"/><rect x="52.5" y="13.1" width="1.2" height="2.7" fill="#8ff0a8" opacity="1.0"/><rect x="52.5" y="58.3" width="1.2" height="0.9" fill="#8ff0a8" opacity="1.0"/><rect x="52.4" y="64.4" width="1.2" height="1.0" fill="#8ff0a8" opacity="1.0"/><rect x="52.5" y="65.9" width="1.2" height="1.4" fill="#8ff0a8" opacity="1.0"/><rect x="52.4" y="71.4" width="1.2" height="3.7" fill="#8ff0a8" opacity="1.0"/><rect x="52.8" y="75.7" width="1.2" height="2.1" fill="#8ff0a8" opacity="1.0"/><rect x="52.5" y="122.5" width="1.2" height="2.4" fill="#8ff0a8" opacity="1.0"/><rect x="52.8" y="132.4" width="1.2" height="2.5" fill="#8ff0a8" opacity="1.0"/><rect x="52.2" y="136.1" width="1.2" height="1.6" fill="#8ff0a8" opacity="1.0"/><rect x="60.5" y="0.0" width="0.9" height="140.0" fill="#b98478" opacity="1.0"/><rect x="92.1" y="0.0" width="0.8" height="140.0" fill="#2020b0" opacity="1.0"/><rect x="100.1" y="0.0" width="0.8" height="140.0" fill="#2020b0" opacity="1.0"/><rect x="113.6" y="85.5" width="0.8" height="54.5" fill="#2020b0" opacity="1.0"/><rect x="120.9" y="5.9" width="0.8" height="2.5" fill="#2020b0" opacity="1.0"/><rect x="121.3" y="9.3" width="0.8" height="2.3" fill="#2020b0" opacity="1.0"/><rect x="121.1" y="12.6" width="0.8" height="0.9" fill="#2020b0" opacity="1.0"/><rect x="121.2" y="18.9" width="0.8" height="3.3" fill="#2020b0" opacity="1.0"/><rect x="121.4" y="23.3" width="0.8" height="2.8" fill="#2020b0" opacity="1.0"/><rect x="121.1" y="39.1" width="0.8" height="1.3" fill="#2020b0" opacity="1.0"/><rect x="121.2" y="41.2" width="0.8" height="1.9" fill="#2020b0" opacity="1.0"/><rect x="121.4" y="44.3" width="0.8" height="1.0" fill="#2020b0" opacity="1.0"/><rect x="121.3" y="46.6" width="0.8" height="2.9" fill="#2020b0" opacity="1.0"/><rect x="121.2" y="55.4" width="0.8" height="3.5" fill="#2020b0" opacity="1.0"/><rect x="120.9" y="60.3" width="0.8" height="3.1" fill="#2020b0" opacity="1.0"/><rect x="120.8" y="68.5" width="0.8" height="1.1" fill="#2020b0" opacity="1.0"/><rect x="121.0" y="74.0" width="0.8" height="1.2" fill="#2020b0" opacity="1.0"/><rect x="121.3" y="88.3" width="0.8" height="2.6" fill="#2020b0" opacity="1.0"/><rect x="121.0" y="91.8" width="0.8" height="1.2" fill="#2020b0" opacity="1.0"/><rect x="121.0" y="99.9" width="0.8" height="3.6" fill="#2020b0" opacity="1.0"/><rect x="121.5" y="108.4" width="0.8" height="1.5" fill="#2020b0" opacity="1.0"/><rect x="121.2" y="111.0" width="0.8" height="3.4" fill="#2020b0" opacity="1.0"/><rect x="121.2" y="115.2" width="0.8" height="1.6" fill="#2020b0" opacity="1.0"/><rect x="121.4" y="117.4" width="0.8" height="2.0" fill="#2020b0" opacity="1.0"/><rect x="121.4" y="120.6" width="0.8" height="3.4" fill="#2020b0" opacity="1.0"/><rect x="120.7" y="128.7" width="0.8" height="2.1" fill="#2020b0" opacity="1.0"/><rect x="121.1" y="133.1" width="0.8" height="3.2" fill="#2020b0" opacity="1.0"/><rect x="121.1" y="137.8" width="0.8" height="2.2" fill="#2020b0" opacity="1.0"/><rect x="128.0" y="0.0" width="0.8" height="1.3" fill="#2a2ac8" opacity="1.0"/><rect x="127.9" y="2.1" width="0.8" height="3.6" fill="#2a2ac8" opacity="1.0"/><rect x="127.9" y="6.3" width="0.8" height="1.3" fill="#2a2ac8" opacity="1.0"/><rect x="128.2" y="17.8" width="0.8" height="2.9" fill="#2a2ac8" opacity="1.0"/><rect x="127.7" y="21.9" width="0.8" height="1.3" fill="#2a2ac8" opacity="1.0"/><rect x="128.5" y="23.8" width="0.8" height="1.1" fill="#2a2ac8" opacity="1.0"/><rect x="127.9" y="25.6" width="0.8" height="1.8" fill="#2a2ac8" opacity="1.0"/><rect x="127.9" y="28.6" width="0.8" height="3.1" fill="#2a2ac8" opacity="1.0"/><rect x="127.7" y="37.4" width="0.8" height="3.9" fill="#2a2ac8" opacity="1.0"/><rect x="128.1" y="42.6" width="0.8" height="2.1" fill="#2a2ac8" opacity="1.0"/><rect x="127.8" y="46.2" width="0.8" height="2.5" fill="#2a2ac8" opacity="1.0"/><rect x="128.4" y="49.0" width="0.8" height="3.7" fill="#2a2ac8" opacity="1.0"/><rect x="128.0" y="53.1" width="0.8" height="1.6" fill="#2a2ac8" opacity="1.0"/><rect x="127.9" y="55.0" width="0.8" height="1.6" fill="#2a2ac8" opacity="1.0"/><rect x="128.1" y="58.4" width="0.8" height="2.4" fill="#2a2ac8" opacity="1.0"/><rect x="128.1" y="61.3" width="0.8" height="1.8" fill="#2a2ac8" opacity="1.0"/><rect x="128.1" y="67.7" width="0.8" height="0.9" fill="#2a2ac8" opacity="1.0"/><rect x="128.1" y="72.8" width="0.8" height="3.7" fill="#2a2ac8" opacity="1.0"/><rect x="127.9" y="77.8" width="0.8" height="1.5" fill="#2a2ac8" opacity="1.0"/><rect x="127.9" y="83.6" width="0.8" height="1.2" fill="#2a2ac8" opacity="1.0"/><rect x="127.9" y="85.3" width="0.8" height="2.2" fill="#2a2ac8" opacity="1.0"/><rect x="127.9" y="87.8" width="0.8" height="3.0" fill="#2a2ac8" opacity="1.0"/><rect x="128.0" y="91.5" width="0.8" height="2.0" fill="#2a2ac8" opacity="1.0"/><rect x="128.4" y="94.2" width="0.8" height="3.2" fill="#2a2ac8" opacity="1.0"/><rect x="128.1" y="98.4" width="0.8" height="3.2" fill="#2a2ac8" opacity="1.0"/><rect x="128.3" y="107.0" width="0.8" height="3.0" fill="#2a2ac8" opacity="1.0"/><rect x="127.8" y="110.8" width="0.8" height="1.2" fill="#2a2ac8" opacity="1.0"/><rect x="127.8" y="112.7" width="0.8" height="3.0" fill="#2a2ac8" opacity="1.0"/><rect x="127.7" y="116.8" width="0.8" height="2.6" fill="#2a2ac8" opacity="1.0"/><rect x="128.0" y="123.3" width="0.8" height="2.8" fill="#2a2ac8" opacity="1.0"/><rect x="128.2" y="126.8" width="0.8" height="1.9" fill="#2a2ac8" opacity="1.0"/><rect x="128.1" y="129.9" width="0.8" height="3.1" fill="#2a2ac8" opacity="1.0"/><rect x="128.5" y="133.5" width="0.8" height="3.1" fill="#2a2ac8" opacity="1.0"/><rect x="128.4" y="137.9" width="0.8" height="1.2" fill="#2a2ac8" opacity="1.0"/><rect x="128.3" y="139.9" width="0.8" height="0.1" fill="#2a2ac8" opacity="1.0"/><rect x="138.6" y="0.0" width="0.9" height="140.0" fill="#b98478" opacity="1.0"/><rect x="138.4" y="87.3" width="1.2" height="2.6" fill="#62d4d8" opacity="1.0"/><rect x="137.9" y="90.7" width="1.2" height="1.5" fill="#62d4d8" opacity="1.0"/><rect x="138.5" y="95.7" width="1.2" height="1.9" fill="#62d4d8" opacity="1.0"/><rect x="141.6" y="0.0" width="0.8" height="140.0" fill="#2020b0" opacity="1.0"/><rect x="146.1" y="65.5" width="0.9" height="74.5" fill="#7a5a8a" opacity="1.0"/><rect x="145.4" y="76.5" width="2.2" height="19.0" rx="1" fill="#c8d86a"/><rect x="148.2" y="88.5" width="1.6" height="14.0" rx="1" fill="#d8c46a"/><rect x="148.8" y="6.4" width="1.4" height="0.9" fill="#62d4d8" opacity="1.0"/><rect x="149.3" y="8.5" width="1.4" height="3.7" fill="#62d4d8" opacity="1.0"/><rect x="148.7" y="16.9" width="1.4" height="3.4" fill="#62d4d8" opacity="1.0"/><rect x="149.0" y="21.2" width="1.4" height="2.7" fill="#62d4d8" opacity="1.0"/><rect x="149.0" y="24.6" width="1.4" height="0.9" fill="#62d4d8" opacity="1.0"/><rect x="149.5" y="26.3" width="1.4" height="3.1" fill="#62d4d8" opacity="1.0"/><rect x="148.8" y="42.4" width="1.4" height="1.7" fill="#62d4d8" opacity="1.0"/><rect x="149.3" y="51.1" width="1.4" height="3.1" fill="#62d4d8" opacity="1.0"/><rect x="149.4" y="64.8" width="1.4" height="1.5" fill="#62d4d8" opacity="1.0"/><rect x="149.0" y="66.8" width="1.4" height="3.9" fill="#62d4d8" opacity="1.0"/><rect x="149.2" y="71.0" width="1.4" height="2.0" fill="#62d4d8" opacity="1.0"/><rect x="149.4" y="81.0" width="1.4" height="3.1" fill="#62d4d8" opacity="1.0"/><rect x="149.2" y="84.7" width="1.4" height="1.8" fill="#62d4d8" opacity="1.0"/><rect x="149.2" y="90.4" width="1.4" height="1.5" fill="#62d4d8" opacity="1.0"/><rect x="149.4" y="97.6" width="1.4" height="2.2" fill="#62d4d8" opacity="1.0"/><rect x="148.8" y="103.6" width="1.4" height="1.4" fill="#62d4d8" opacity="1.0"/><rect x="148.9" y="106.0" width="1.4" height="2.7" fill="#62d4d8" opacity="1.0"/><rect x="149.4" y="113.8" width="1.4" height="1.0" fill="#62d4d8" opacity="1.0"/><rect x="149.3" y="119.1" width="1.4" height="3.8" fill="#62d4d8" opacity="1.0"/><rect x="148.9" y="124.2" width="1.4" height="2.3" fill="#62d4d8" opacity="1.0"/><rect x="149.2" y="127.0" width="1.4" height="1.1" fill="#62d4d8" opacity="1.0"/><rect x="152.2" y="0.0" width="2.6" height="140.0" fill="#56e286" opacity="1.0"/><rect x="151.2" y="0.0" width="1.0" height="140.0" fill="#2a7ad0" opacity="1.0"/><rect x="166.4" y="0.0" width="1.2" height="140.0" fill="#2b49d8" opacity="1.0"/><rect x="175.1" y="0.0" width="0.9" height="140.0" fill="#2020b0" opacity="1.0"/><rect x="178.0" y="0.0" width="1.0" height="140.0" fill="#b8844e" opacity="1.0"/><rect x="184.5" y="8.5" width="1.3" height="1.1" fill="#62d4d8" opacity="1.0"/><rect x="185.0" y="10.2" width="1.3" height="2.0" fill="#62d4d8" opacity="1.0"/><rect x="184.9" y="13.4" width="1.3" height="1.1" fill="#62d4d8" opacity="1.0"/><rect x="184.7" y="15.2" width="1.3" height="1.2" fill="#62d4d8" opacity="1.0"/><rect x="184.8" y="23.5" width="1.3" height="1.7" fill="#62d4d8" opacity="1.0"/><rect x="185.0" y="29.9" width="1.3" height="1.7" fill="#62d4d8" opacity="1.0"/><rect x="184.7" y="32.9" width="1.3" height="2.6" fill="#62d4d8" opacity="1.0"/><rect x="184.8" y="36.8" width="1.3" height="2.5" fill="#62d4d8" opacity="1.0"/><rect x="184.7" y="39.9" width="1.3" height="2.9" fill="#62d4d8" opacity="1.0"/><rect x="184.5" y="51.2" width="1.3" height="3.3" fill="#62d4d8" opacity="1.0"/><rect x="184.9" y="55.0" width="1.3" height="2.3" fill="#62d4d8" opacity="1.0"/><rect x="184.7" y="60.0" width="1.3" height="2.3" fill="#62d4d8" opacity="1.0"/><rect x="185.1" y="8.5" width="0.8" height="62.0" fill="#7a4a5a" opacity="1.0"/><rect x="188.5" y="0.0" width="1.0" height="140.0" fill="#2b49d8" opacity="1.0"/><rect x="191.5" y="30.5" width="1.2" height="2.8" fill="#62d4d8" opacity="1.0"/><rect x="192.3" y="38.0" width="1.2" height="3.7" fill="#62d4d8" opacity="1.0"/><rect x="192.1" y="42.9" width="1.2" height="3.7" fill="#62d4d8" opacity="1.0"/><rect x="191.9" y="51.9" width="1.2" height="2.1" fill="#62d4d8" opacity="1.0"/><rect x="191.6" y="54.6" width="1.2" height="2.9" fill="#62d4d8" opacity="1.0"/><rect x="192.2" y="58.4" width="1.2" height="1.0" fill="#62d4d8" opacity="1.0"/><rect x="192.2" y="60.8" width="1.2" height="1.4" fill="#62d4d8" opacity="1.0"/><rect x="191.7" y="63.7" width="1.2" height="2.7" fill="#62d4d8" opacity="1.0"/><rect x="191.6" y="67.8" width="1.2" height="3.8" fill="#62d4d8" opacity="1.0"/><rect x="191.9" y="74.8" width="1.2" height="3.3" fill="#62d4d8" opacity="1.0"/><rect x="191.6" y="79.6" width="1.2" height="3.0" fill="#62d4d8" opacity="1.0"/><rect x="191.9" y="83.7" width="1.2" height="2.0" fill="#62d4d8" opacity="1.0"/><rect x="192.0" y="86.7" width="1.2" height="3.9" fill="#62d4d8" opacity="1.0"/><rect x="191.9" y="96.9" width="1.2" height="3.3" fill="#62d4d8" opacity="1.0"/><rect x="191.9" y="101.2" width="1.2" height="3.3" fill="#62d4d8" opacity="1.0"/><rect x="191.5" y="104.9" width="1.2" height="2.0" fill="#62d4d8" opacity="1.0"/><rect x="191.6" y="20.5" width="0.8" height="91.0" fill="#b8844e" opacity="1.0"/><rect x="187.1" y="0.0" width="0.9" height="140.0" fill="#3f8fe4" opacity="1.0"/><rect x="197.7" y="0.0" width="1.6" height="140.0" fill="#3fc09a" opacity="1.0"/><rect x="201.3" y="0.0" width="2.4" height="140.0" fill="#56e286" opacity="1.0"/><rect x="208.6" y="0.0" width="1.8" height="140.0" fill="#3a78e0" opacity="1.0"/><rect x="212.6" y="0.0" width="1.8" height="140.0" fill="#4a98e8" opacity="1.0"/><rect x="223.5" y="0.0" width="1.0" height="140.0" fill="#b86450" opacity="1.0"/><rect x="222.7" y="7.5" width="2.6" height="9.0" rx="1" fill="#58d8a0"/><rect x="231.0" y="8.8" width="1.6" height="1.8" fill="#62d4d8" opacity="1.0"/><rect x="230.7" y="10.9" width="1.6" height="2.2" fill="#62d4d8" opacity="1.0"/><rect x="230.7" y="13.9" width="1.6" height="3.8" fill="#62d4d8" opacity="1.0"/><rect x="230.7" y="19.0" width="1.6" height="1.2" fill="#62d4d8" opacity="1.0"/><rect x="230.3" y="21.2" width="1.6" height="1.5" fill="#62d4d8" opacity="1.0"/><rect x="231.1" y="23.1" width="1.6" height="1.9" fill="#62d4d8" opacity="1.0"/><rect x="230.5" y="31.2" width="1.6" height="2.0" fill="#62d4d8" opacity="1.0"/><rect x="231.0" y="33.8" width="1.6" height="3.6" fill="#62d4d8" opacity="1.0"/><rect x="230.9" y="37.9" width="1.6" height="1.2" fill="#62d4d8" opacity="1.0"/><rect x="231.0" y="40.2" width="1.6" height="0.8" fill="#62d4d8" opacity="1.0"/><rect x="230.8" y="41.9" width="1.6" height="3.6" fill="#62d4d8" opacity="1.0"/><rect x="230.8" y="45.9" width="1.6" height="3.1" fill="#62d4d8" opacity="1.0"/><rect x="230.4" y="49.6" width="1.6" height="3.8" fill="#62d4d8" opacity="1.0"/><rect x="230.7" y="54.5" width="1.6" height="1.1" fill="#62d4d8" opacity="1.0"/><rect x="230.4" y="56.7" width="1.6" height="3.7" fill="#62d4d8" opacity="1.0"/><rect x="230.9" y="61.4" width="1.6" height="3.5" fill="#62d4d8" opacity="1.0"/><rect x="230.9" y="65.5" width="1.6" height="1.8" fill="#62d4d8" opacity="1.0"/><rect x="230.4" y="68.2" width="1.6" height="0.3" fill="#62d4d8" opacity="1.0"/><rect x="231.1" y="66.5" width="0.9" height="48.0" fill="#b98478" opacity="1.0"/><rect x="230.3" y="112.5" width="2.4" height="4.0" rx="1" fill="#9ff0e0"/><rect x="234.1" y="0.0" width="0.8" height="140.0" fill="#2f9c94" opacity="1.0"/><rect x="262.1" y="65.5" width="0.8" height="74.5" fill="#2020b0" opacity="1.0"/><rect x="271.1" y="0.0" width="0.9" height="140.0" fill="#2626c0" opacity="1.0"/><rect x="285.1" y="0.0" width="0.8" height="140.0" fill="#2020b0" opacity="1.0"/><rect x="250.2" y="0.0" width="0.7" height="140.0" fill="#2020b0" opacity="0.7"/><rect x="295.0" y="12.5" width="1.0" height="119.0" fill="#b86450" opacity="1.0"/><rect x="294.2" y="19.5" width="2.6" height="8.0" rx="1" fill="#58d8a0"/><rect x="294.6" y="30.5" width="1.8" height="2.0" rx="1" fill="#d0f0f0"/><rect x="294.6" y="101.5" width="1.8" height="3.0" rx="1" fill="#d0f0f0"/><rect x="294.6" y="118.5" width="1.8" height="4.0" rx="1" fill="#c0e8f0"/><rect x="309.1" y="0.0" width="0.9" height="48.5" fill="#2b49d8" opacity="1.0"/><rect x="308.9" y="46.5" width="1.1" height="93.5" fill="#3f9a6a" opacity="1.0"/><rect x="308.6" y="54.7" width="1.2" height="1.1" fill="#3f8fe4" opacity="1.0"/><rect x="308.6" y="56.6" width="1.2" height="2.8" fill="#3f8fe4" opacity="1.0"/><rect x="308.9" y="59.8" width="1.2" height="2.4" fill="#3f8fe4" opacity="1.0"/><rect x="308.7" y="63.2" width="1.2" height="3.3" fill="#3f8fe4" opacity="1.0"/><rect x="330.4" y="0.0" width="1.3" height="140.0" fill="#2f9c94" opacity="1.0"/><rect x="334.1" y="0.0" width="0.8" height="140.0" fill="#b8844e" opacity="1.0"/><rect x="334.0" y="3.5" width="1.4" height="2.9" fill="#62d4d8" opacity="1.0"/><rect x="333.6" y="7.7" width="1.4" height="1.7" fill="#62d4d8" opacity="1.0"/><rect x="333.9" y="10.2" width="1.4" height="3.6" fill="#62d4d8" opacity="1.0"/><rect x="334.0" y="14.9" width="1.4" height="3.9" fill="#62d4d8" opacity="1.0"/><rect x="334.2" y="21.9" width="1.4" height="2.7" fill="#62d4d8" opacity="1.0"/><rect x="333.5" y="28.8" width="1.4" height="2.1" fill="#62d4d8" opacity="1.0"/><rect x="334.1" y="31.3" width="1.4" height="3.1" fill="#62d4d8" opacity="1.0"/><rect x="334.2" y="34.7" width="1.4" height="1.8" fill="#62d4d8" opacity="1.0"/><rect x="333.5" y="37.7" width="1.4" height="3.7" fill="#62d4d8" opacity="1.0"/><rect x="333.9" y="42.2" width="1.4" height="1.5" fill="#62d4d8" opacity="1.0"/><rect x="334.1" y="44.4" width="1.4" height="1.1" fill="#62d4d8" opacity="1.0"/><rect x="334.0" y="47.0" width="1.4" height="2.3" fill="#62d4d8" opacity="1.0"/><rect x="334.2" y="49.7" width="1.4" height="2.5" fill="#62d4d8" opacity="1.0"/><rect x="333.8" y="53.2" width="1.4" height="2.2" fill="#62d4d8" opacity="1.0"/><rect x="333.8" y="56.8" width="1.4" height="2.2" fill="#62d4d8" opacity="1.0"/><rect x="334.2" y="66.6" width="1.4" height="1.2" fill="#62d4d8" opacity="1.0"/><rect x="334.0" y="71.9" width="1.4" height="2.4" fill="#62d4d8" opacity="1.0"/><rect x="334.0" y="78.2" width="1.4" height="1.2" fill="#62d4d8" opacity="1.0"/><rect x="333.8" y="82.2" width="1.4" height="1.3" fill="#62d4d8" opacity="1.0"/><rect x="334.0" y="84.6" width="1.4" height="3.5" fill="#62d4d8" opacity="1.0"/><rect x="333.7" y="88.6" width="1.4" height="2.7" fill="#62d4d8" opacity="1.0"/><rect x="334.0" y="91.6" width="1.4" height="3.1" fill="#62d4d8" opacity="1.0"/><rect x="334.2" y="105.6" width="1.4" height="2.1" fill="#62d4d8" opacity="1.0"/><rect x="334.0" y="122.2" width="1.4" height="3.1" fill="#62d4d8" opacity="1.0"/><rect x="333.8" y="126.4" width="1.4" height="3.3" fill="#62d4d8" opacity="1.0"/><rect x="333.8" y="134.7" width="1.4" height="0.9" fill="#62d4d8" opacity="1.0"/><rect x="341.4" y="0.0" width="1.1" height="50.5" fill="#2f9c94" opacity="1.0"/><rect x="341.2" y="40.5" width="1.1" height="2.0" fill="#2b49d8" opacity="1.0"/><rect x="341.5" y="43.2" width="1.1" height="0.8" fill="#2b49d8" opacity="1.0"/><rect x="341.3" y="45.2" width="1.1" height="2.4" fill="#2b49d8" opacity="1.0"/><rect x="341.7" y="48.8" width="1.1" height="2.0" fill="#2b49d8" opacity="1.0"/><rect x="341.3" y="51.6" width="1.1" height="3.0" fill="#2b49d8" opacity="1.0"/><rect x="344.9" y="117.5" width="1.2" height="22.5" fill="#3f8fe4" opacity="1.0"/><rect x="358.6" y="0.0" width="0.8" height="140.0" fill="#b98478" opacity="1.0"/><rect x="357.7" y="0.0" width="1.8" height="1.3" fill="#62d4d8" opacity="1.0"/><rect x="358.1" y="2.5" width="1.8" height="1.1" fill="#62d4d8" opacity="1.0"/><rect x="357.7" y="4.9" width="1.8" height="2.3" fill="#62d4d8" opacity="1.0"/><rect x="358.4" y="8.5" width="1.8" height="3.3" fill="#62d4d8" opacity="1.0"/><rect x="358.0" y="19.3" width="1.8" height="1.4" fill="#62d4d8" opacity="1.0"/><rect x="357.9" y="21.1" width="1.8" height="2.0" fill="#62d4d8" opacity="1.0"/><rect x="358.3" y="23.4" width="1.8" height="2.2" fill="#62d4d8" opacity="1.0"/><rect x="358.0" y="29.0" width="1.8" height="3.0" fill="#62d4d8" opacity="1.0"/><rect x="358.1" y="32.9" width="1.8" height="2.1" fill="#62d4d8" opacity="1.0"/><rect x="358.2" y="45.0" width="1.8" height="3.3" fill="#62d4d8" opacity="1.0"/><rect x="358.1" y="49.4" width="1.8" height="3.6" fill="#62d4d8" opacity="1.0"/><rect x="358.2" y="53.6" width="1.8" height="1.8" fill="#62d4d8" opacity="1.0"/><rect x="358.4" y="56.7" width="1.8" height="1.4" fill="#62d4d8" opacity="1.0"/><rect x="358.0" y="58.8" width="1.8" height="1.1" fill="#62d4d8" opacity="1.0"/><rect x="357.8" y="60.4" width="1.8" height="1.7" fill="#62d4d8" opacity="1.0"/><rect x="358.1" y="62.9" width="1.8" height="1.1" fill="#62d4d8" opacity="1.0"/><rect x="358.4" y="65.5" width="1.8" height="3.5" fill="#62d4d8" opacity="1.0"/><rect x="357.7" y="69.4" width="1.8" height="1.3" fill="#62d4d8" opacity="1.0"/><rect x="358.3" y="71.7" width="1.8" height="3.2" fill="#62d4d8" opacity="1.0"/><rect x="358.1" y="75.7" width="1.8" height="3.7" fill="#62d4d8" opacity="1.0"/><rect x="358.4" y="80.0" width="1.8" height="2.2" fill="#62d4d8" opacity="1.0"/><rect x="358.2" y="84.8" width="1.8" height="2.5" fill="#62d4d8" opacity="1.0"/><rect x="358.0" y="88.4" width="1.8" height="1.1" fill="#62d4d8" opacity="1.0"/><rect x="358.1" y="94.4" width="1.8" height="3.0" fill="#62d4d8" opacity="1.0"/><rect x="358.1" y="101.7" width="1.8" height="0.9" fill="#62d4d8" opacity="1.0"/><rect x="358.1" y="103.4" width="1.8" height="1.3" fill="#62d4d8" opacity="1.0"/><rect x="357.9" y="105.1" width="1.8" height="3.0" fill="#62d4d8" opacity="1.0"/><rect x="358.5" y="110.9" width="1.8" height="1.1" fill="#62d4d8" opacity="1.0"/><rect x="358.2" y="112.4" width="1.8" height="1.9" fill="#62d4d8" opacity="1.0"/><rect x="358.4" y="116.9" width="1.8" height="3.0" fill="#62d4d8" opacity="1.0"/><rect x="357.9" y="120.3" width="1.8" height="1.5" fill="#62d4d8" opacity="1.0"/><rect x="358.1" y="123.1" width="1.8" height="2.4" fill="#62d4d8" opacity="1.0"/><rect x="358.2" y="126.8" width="1.8" height="2.6" fill="#62d4d8" opacity="1.0"/><rect x="357.8" y="130.5" width="1.8" height="2.1" fill="#62d4d8" opacity="1.0"/><rect x="358.0" y="133.4" width="1.8" height="3.6" fill="#62d4d8" opacity="1.0"/><rect x="358.1" y="138.1" width="1.8" height="1.9" fill="#62d4d8" opacity="1.0"/><rect x="366.0" y="0.0" width="1.0" height="130.5" fill="#b86450" opacity="1.0"/><rect x="366.0" y="0.0" width="1.4" height="0.9" fill="#62d4d8" opacity="1.0"/><rect x="365.9" y="2.3" width="1.4" height="1.0" fill="#62d4d8" opacity="1.0"/><rect x="365.8" y="4.0" width="1.4" height="2.9" fill="#62d4d8" opacity="1.0"/><rect x="365.8" y="14.7" width="1.4" height="3.5" fill="#62d4d8" opacity="1.0"/><rect x="366.1" y="18.9" width="1.4" height="2.8" fill="#62d4d8" opacity="1.0"/><rect x="365.5" y="33.1" width="1.4" height="2.3" fill="#62d4d8" opacity="1.0"/><rect x="365.6" y="36.2" width="1.4" height="3.8" fill="#62d4d8" opacity="1.0"/><rect x="366.1" y="44.1" width="1.4" height="1.7" fill="#62d4d8" opacity="1.0"/><rect x="365.9" y="46.9" width="1.4" height="1.6" fill="#62d4d8" opacity="1.0"/><rect x="365.8" y="56.1" width="1.4" height="3.8" fill="#62d4d8" opacity="1.0"/><rect x="365.6" y="60.5" width="1.4" height="2.5" fill="#62d4d8" opacity="1.0"/><rect x="365.8" y="64.5" width="1.4" height="3.3" fill="#62d4d8" opacity="1.0"/><rect x="366.2" y="68.1" width="1.4" height="1.2" fill="#62d4d8" opacity="1.0"/><rect x="365.5" y="70.0" width="1.4" height="1.6" fill="#62d4d8" opacity="1.0"/><rect x="365.5" y="77.6" width="1.4" height="3.3" fill="#62d4d8" opacity="1.0"/><rect x="366.0" y="81.5" width="1.4" height="1.0" fill="#62d4d8" opacity="1.0"/><rect x="366.1" y="83.4" width="1.4" height="0.8" fill="#62d4d8" opacity="1.0"/><rect x="365.9" y="90.1" width="1.4" height="2.6" fill="#62d4d8" opacity="1.0"/><rect x="365.8" y="93.3" width="1.4" height="0.9" fill="#62d4d8" opacity="1.0"/><rect x="365.7" y="94.6" width="1.4" height="1.1" fill="#62d4d8" opacity="1.0"/><rect x="365.7" y="100.7" width="1.4" height="2.7" fill="#62d4d8" opacity="1.0"/><rect x="365.4" y="108.2" width="1.4" height="1.7" fill="#62d4d8" opacity="1.0"/><rect x="365.6" y="110.9" width="1.4" height="1.5" fill="#62d4d8" opacity="1.0"/><rect x="365.9" y="117.7" width="1.4" height="3.7" fill="#62d4d8" opacity="1.0"/><rect x="366.1" y="122.6" width="1.4" height="3.1" fill="#62d4d8" opacity="1.0"/><rect x="365.5" y="126.8" width="1.4" height="3.0" fill="#62d4d8" opacity="1.0"/><rect x="365.2" y="127.5" width="2.6" height="4.0" rx="1" fill="#a8f0d0"/><rect x="373.0" y="0.5" width="1.0" height="52.0" fill="#b86450" opacity="1.0"/><rect x="372.0" y="10.5" width="3" height="8.0" rx="1" fill="#58d8a0"/><rect x="372.4" y="23.5" width="2.2" height="7.0" rx="1" fill="#58d8a0"/><rect x="372.4" y="50.5" width="2.2" height="3.0" rx="1" fill="#d8f4f4"/><rect x="386.9" y="0.0" width="1.2" height="140.0" fill="#2f9c94" opacity="1.0"/><rect x="400.9" y="0.0" width="1.2" height="140.0" fill="#2a58c8" opacity="1.0"/><rect x="400.9" y="0.0" width="1.5" height="2.5" fill="#4ab0e0" opacity="1.0"/><rect x="401.0" y="3.3" width="1.5" height="2.3" fill="#4ab0e0" opacity="1.0"/><rect x="400.7" y="9.9" width="1.5" height="1.8" fill="#4ab0e0" opacity="1.0"/><rect x="400.7" y="12.7" width="1.5" height="2.9" fill="#4ab0e0" opacity="1.0"/><rect x="401.1" y="16.6" width="1.5" height="1.4" fill="#4ab0e0" opacity="1.0"/><rect x="400.4" y="18.3" width="1.5" height="2.4" fill="#4ab0e0" opacity="1.0"/><rect x="401.1" y="21.3" width="1.5" height="1.3" fill="#4ab0e0" opacity="1.0"/><rect x="400.6" y="26.0" width="1.5" height="0.9" fill="#4ab0e0" opacity="1.0"/><rect x="400.7" y="28.3" width="1.5" height="2.2" fill="#4ab0e0" opacity="1.0"/><rect x="401.0" y="33.8" width="1.5" height="2.3" fill="#4ab0e0" opacity="1.0"/><rect x="400.8" y="37.6" width="1.5" height="2.8" fill="#4ab0e0" opacity="1.0"/><rect x="400.8" y="52.8" width="1.5" height="3.1" fill="#4ab0e0" opacity="1.0"/><rect x="400.9" y="58.5" width="1.5" height="2.4" fill="#4ab0e0" opacity="1.0"/><rect x="401.1" y="88.7" width="1.5" height="1.0" fill="#4ab0e0" opacity="1.0"/><rect x="401.0" y="91.1" width="1.5" height="3.2" fill="#4ab0e0" opacity="1.0"/><rect x="400.5" y="108.5" width="1.5" height="2.4" fill="#4ab0e0" opacity="1.0"/><rect x="401.0" y="112.4" width="1.5" height="1.7" fill="#4ab0e0" opacity="1.0"/><rect x="401.1" y="114.6" width="1.5" height="2.9" fill="#4ab0e0" opacity="1.0"/><rect x="400.6" y="118.4" width="1.5" height="1.9" fill="#4ab0e0" opacity="1.0"/><rect x="400.6" y="120.6" width="1.5" height="1.2" fill="#4ab0e0" opacity="1.0"/><rect x="400.5" y="123.0" width="1.5" height="3.8" fill="#4ab0e0" opacity="1.0"/><rect x="400.4" y="127.5" width="1.5" height="2.8" fill="#4ab0e0" opacity="1.0"/><rect x="401.0" y="131.2" width="1.5" height="1.7" fill="#4ab0e0" opacity="1.0"/><rect x="401.1" y="136.5" width="1.5" height="3.5" fill="#4ab0e0" opacity="1.0"/><rect x="405.1" y="5.5" width="0.9" height="48.0" fill="#b8844e" opacity="1.0"/><rect x="404.2" y="7.5" width="2.6" height="9.0" rx="1" fill="#6adce0"/><rect x="404.4" y="20.5" width="2.2" height="6.0" rx="1" fill="#6adce0"/><rect x="404.5" y="51.5" width="2" height="3.0" rx="1" fill="#d8f4f4"/><rect x="412.0" y="76.5" width="1.0" height="63.5" fill="#a86a6a" opacity="1.0"/><rect x="411.3" y="82.5" width="2.4" height="9.0" rx="1" fill="#e0cc70"/><rect x="411.5" y="94.5" width="2" height="3.0" rx="1" fill="#f0ecd0"/><rect x="419.0" y="0.0" width="1.0" height="140.0" fill="#2020b0" opacity="1.0"/><rect x="437.0" y="25.5" width="1.0" height="114.5" fill="#b88488" opacity="1.0"/><rect x="436.1" y="25.5" width="2.8" height="10.0" rx="1" fill="#58e090"/><rect x="442.9" y="0.0" width="3.2" height="140.0" fill="#56e286" opacity="1.0"/><rect x="451.1" y="0.0" width="0.9" height="140.0" fill="#2020b0" opacity="1.0"/><rect x="457.9" y="0.0" width="2.2" height="140.0" fill="#3a98e0" opacity="1.0"/><rect x="476.4" y="0.0" width="2.2" height="140.0" fill="#c8b85a" opacity="1.0"/><rect x="476.1" y="0.0" width="2.0" height="3.7" fill="#e8dc80" opacity="1.0"/><rect x="476.3" y="9.4" width="2.0" height="3.4" fill="#e8dc80" opacity="1.0"/><rect x="476.5" y="22.5" width="2.0" height="1.1" fill="#e8dc80" opacity="1.0"/><rect x="476.3" y="29.4" width="2.0" height="2.2" fill="#e8dc80" opacity="1.0"/><rect x="476.2" y="40.7" width="2.0" height="1.3" fill="#e8dc80" opacity="1.0"/><rect x="476.5" y="44.3" width="2.0" height="1.5" fill="#e8dc80" opacity="1.0"/><rect x="476.2" y="46.4" width="2.0" height="3.5" fill="#e8dc80" opacity="1.0"/><rect x="476.8" y="54.6" width="2.0" height="3.1" fill="#e8dc80" opacity="1.0"/><rect x="476.4" y="59.1" width="2.0" height="2.9" fill="#e8dc80" opacity="1.0"/><rect x="476.3" y="63.3" width="2.0" height="2.7" fill="#e8dc80" opacity="1.0"/><rect x="476.5" y="66.4" width="2.0" height="2.5" fill="#e8dc80" opacity="1.0"/><rect x="476.7" y="70.3" width="2.0" height="3.7" fill="#e8dc80" opacity="1.0"/><rect x="476.9" y="79.1" width="2.0" height="3.6" fill="#e8dc80" opacity="1.0"/><rect x="476.3" y="88.6" width="2.0" height="3.1" fill="#e8dc80" opacity="1.0"/><rect x="476.2" y="96.9" width="2.0" height="1.9" fill="#e8dc80" opacity="1.0"/><rect x="476.3" y="99.4" width="2.0" height="2.5" fill="#e8dc80" opacity="1.0"/><rect x="476.8" y="107.6" width="2.0" height="3.8" fill="#e8dc80" opacity="1.0"/><rect x="476.7" y="114.5" width="2.0" height="2.8" fill="#e8dc80" opacity="1.0"/><rect x="476.2" y="118.1" width="2.0" height="1.4" fill="#e8dc80" opacity="1.0"/><rect x="476.7" y="124.4" width="2.0" height="2.1" fill="#e8dc80" opacity="1.0"/><rect x="476.3" y="130.2" width="2.0" height="0.9" fill="#e8dc80" opacity="1.0"/><rect x="476.3" y="132.2" width="2.0" height="1.9" fill="#e8dc80" opacity="1.0"/><rect x="476.6" y="135.2" width="2.0" height="2.4" fill="#e8dc80" opacity="1.0"/><rect x="476.7" y="138.4" width="2.0" height="1.6" fill="#e8dc80" opacity="1.0"/><rect x="480.1" y="0.0" width="1.2" height="2.8" fill="#2b49d8" opacity="1.0"/><rect x="479.6" y="3.9" width="1.2" height="1.4" fill="#2b49d8" opacity="1.0"/><rect x="479.7" y="5.7" width="1.2" height="3.0" fill="#2b49d8" opacity="1.0"/><rect x="479.8" y="9.0" width="1.2" height="0.9" fill="#2b49d8" opacity="1.0"/><rect x="479.7" y="16.8" width="1.2" height="2.7" fill="#2b49d8" opacity="1.0"/><rect x="480.0" y="24.1" width="1.2" height="3.5" fill="#2b49d8" opacity="1.0"/><rect x="479.8" y="28.7" width="1.2" height="1.8" fill="#2b49d8" opacity="1.0"/><rect x="479.9" y="32.0" width="1.2" height="2.9" fill="#2b49d8" opacity="1.0"/><rect x="479.6" y="36.0" width="1.2" height="1.6" fill="#2b49d8" opacity="1.0"/><rect x="479.8" y="46.9" width="1.2" height="2.1" fill="#2b49d8" opacity="1.0"/><rect x="480.3" y="50.2" width="1.2" height="2.6" fill="#2b49d8" opacity="1.0"/><rect x="480.0" y="53.8" width="1.2" height="3.2" fill="#2b49d8" opacity="1.0"/><rect x="480.1" y="58.0" width="1.2" height="1.2" fill="#2b49d8" opacity="1.0"/><rect x="486.6" y="0.0" width="1.8" height="140.0" fill="#2aa49a" opacity="1.0"/><rect x="493.1" y="0.0" width="2.8" height="140.0" fill="#56e286" opacity="1.0"/><rect x="504.9" y="0.0" width="1.2" height="140.0" fill="#2a7a6a" opacity="1.0"/><rect x="508.5" y="20.5" width="1.0" height="119.5" fill="#b0787a" opacity="1.0"/><rect x="507.6" y="25.5" width="2.8" height="9.0" rx="1" fill="#70e8a0"/><rect x="528.6" y="0.0" width="1.2" height="3.2" fill="#2b49d8" opacity="1.0"/><rect x="529.1" y="4.5" width="1.2" height="1.5" fill="#2b49d8" opacity="1.0"/><rect x="529.1" y="6.6" width="1.2" height="0.8" fill="#2b49d8" opacity="1.0"/><rect x="529.1" y="8.4" width="1.2" height="4.0" fill="#2b49d8" opacity="1.0"/><rect x="528.7" y="13.2" width="1.2" height="2.7" fill="#2b49d8" opacity="1.0"/><rect x="529.0" y="20.5" width="1.2" height="2.4" fill="#2b49d8" opacity="1.0"/><rect x="528.8" y="23.7" width="1.2" height="1.7" fill="#2b49d8" opacity="1.0"/><rect x="529.0" y="25.7" width="1.2" height="1.3" fill="#2b49d8" opacity="1.0"/><rect x="529.0" y="43.0" width="1.2" height="3.8" fill="#2b49d8" opacity="1.0"/><rect x="528.8" y="47.8" width="1.2" height="4.0" fill="#2b49d8" opacity="1.0"/><rect x="529.2" y="52.3" width="1.2" height="3.0" fill="#2b49d8" opacity="1.0"/><rect x="528.7" y="58.0" width="1.2" height="0.5" fill="#2b49d8" opacity="1.0"/><rect x="532.6" y="0.0" width="1.8" height="140.0" fill="#3fae6a" opacity="1.0"/><rect x="536.4" y="82.5" width="1.3" height="57.5" fill="#2a70d0" opacity="1.0"/><rect x="547.0" y="116.5" width="0.9" height="23.5" fill="#b04a3a" opacity="1.0"/><rect x="546.2" y="125.5" width="2.6" height="7.0" rx="1" fill="#70e870"/><rect x="558.5" y="46.5" width="1.0" height="93.5" fill="#2424a8" opacity="1.0"/></g></svg>
<div class="a" style="left:193.5px;top:669.5px;width:569.5px;height:12px;background:linear-gradient(#a2a2a2,#7a7a7a 38%,#2a2a2a 50%,#000 57%)"></div>
<div class="t b" style="left:336px;top:671.8px;font-size:8.40px;color:#fff;transform:translateX(-50%) scaleX(1.17)">415.500</div>
<div class="t b" style="left:478px;top:671.8px;font-size:8.40px;color:#fff;transform:translateX(-50%) scaleX(1.17)">416.000</div>
<div class="t b" style="left:620px;top:671.8px;font-size:8.40px;color:#fff;transform:translateX(-50%) scaleX(1.17)">416.500</div>
<div class="a" style="left:193.5px;top:681.5px;width:569.5px;height:3px;background:#fafafa"></div>
<div class="a" style="left:193.5px;top:684.5px;width:569.5px;height:20.5px;background:#f1f1f1"></div>
<div class="a" style="left:195.5px;top:685.5px;width:21.5px;height:19px;background:linear-gradient(#f6f6f6,#dadada);border:1px solid #cfcfcf;border-radius:2px"></div>
<div class="a" style="left:742px;top:685.5px;width:21.5px;height:19px;background:linear-gradient(#f6f6f6,#dadada);border:1px solid #cfcfcf;border-radius:2px"></div>
<svg class="a" style="left:195.5px;top:685.5px" width="22" height="19" viewBox="0 0 22 19"><path d="M15.5 3L5 9.5l10.5 6.5z" fill="#2f86dc"/></svg>
<svg class="a" style="left:742px;top:685.5px" width="22" height="19" viewBox="0 0 22 19"><path d="M6.5 3L17 9.5L6.5 16z" fill="#2f86dc"/></svg>
<div class="a" style="left:218.5px;top:684.5px;width:521.5px;height:20px;background:#060606"></div>
<div class="a" style="left:413px;top:684.5px;width:131px;height:20px;background:linear-gradient(#8a3a34,#8e1d16 35%,#7c1711)"></div>
<div class="a" style="left:413px;top:684.5px;width:131px;height:3.5px;background:#9a6a64"></div>
<svg class="a" style="left:218.5px;top:684.5px" width="521.5" height="20" viewBox="0 0 521.5 20"><path d="M8.1 1v3.4" stroke="#ddd" stroke-width="0.6"/><path d="M21.1 1v2.4" stroke="#ddd" stroke-width="0.6"/><path d="M34.1 1v2.4" stroke="#ddd" stroke-width="0.6"/><path d="M47.1 1v2.4" stroke="#ddd" stroke-width="0.6"/><path d="M60.1 1v2.4" stroke="#ddd" stroke-width="0.6"/><path d="M73.1 1v3.4" stroke="#ddd" stroke-width="0.6"/><path d="M86.1 1v2.4" stroke="#ddd" stroke-width="0.6"/><path d="M99.1 1v2.4" stroke="#ddd" stroke-width="0.6"/><path d="M112.1 1v2.4" stroke="#ddd" stroke-width="0.6"/><path d="M125.1 1v2.4" stroke="#ddd" stroke-width="0.6"/><path d="M138.1 1v3.4" stroke="#ddd" stroke-width="0.6"/><path d="M151.1 1v2.4" stroke="#ddd" stroke-width="0.6"/><path d="M164.1 1v2.4" stroke="#ddd" stroke-width="0.6"/><path d="M177.1 1v2.4" stroke="#ddd" stroke-width="0.6"/><path d="M190.1 1v2.4" stroke="#ddd" stroke-width="0.6"/><path d="M203.1 1v3.4" stroke="#ddd" stroke-width="0.6"/><path d="M216.1 1v2.4" stroke="#ddd" stroke-width="0.6"/><path d="M229.1 1v2.4" stroke="#ddd" stroke-width="0.6"/><path d="M242.1 1v2.4" stroke="#ddd" stroke-width="0.6"/><path d="M255.1 1v2.4" stroke="#ddd" stroke-width="0.6"/><path d="M268.1 1v3.4" stroke="#ddd" stroke-width="0.6"/><path d="M281.1 1v2.4" stroke="#ddd" stroke-width="0.6"/><path d="M294.1 1v2.4" stroke="#ddd" stroke-width="0.6"/><path d="M307.1 1v2.4" stroke="#ddd" stroke-width="0.6"/><path d="M320.1 1v2.4" stroke="#ddd" stroke-width="0.6"/><path d="M333.1 1v3.4" stroke="#ddd" stroke-width="0.6"/><path d="M346.1 1v2.4" stroke="#ddd" stroke-width="0.6"/><path d="M359.1 1v2.4" stroke="#ddd" stroke-width="0.6"/><path d="M372.1 1v2.4" stroke="#ddd" stroke-width="0.6"/><path d="M385.1 1v2.4" stroke="#ddd" stroke-width="0.6"/><path d="M398.1 1v3.4" stroke="#ddd" stroke-width="0.6"/><path d="M411.1 1v2.4" stroke="#ddd" stroke-width="0.6"/><path d="M424.1 1v2.4" stroke="#ddd" stroke-width="0.6"/><path d="M437.1 1v2.4" stroke="#ddd" stroke-width="0.6"/><path d="M450.1 1v2.4" stroke="#ddd" stroke-width="0.6"/><path d="M463.1 1v3.4" stroke="#ddd" stroke-width="0.6"/><path d="M476.1 1v2.4" stroke="#ddd" stroke-width="0.6"/><path d="M489.1 1v2.4" stroke="#ddd" stroke-width="0.6"/><path d="M502.1 1v2.4" stroke="#ddd" stroke-width="0.6"/><path d="M515.1 1v2.4" stroke="#ddd" stroke-width="0.6"/><path d="M259.5 0v20" stroke="#e0b030" stroke-width="1.2"/></svg>
<div class="t" style="left:348px;top:691.5px;font-size:9.00px;color:#d8d8d8;transform:translateX(-50%) scaleX(1.12)">414.000</div>
<div class="t" style="left:478px;top:691.5px;font-size:9.00px;color:#d8d8d8;transform:translateX(-50%) scaleX(1.12)">416.000</div>
<div class="t" style="left:608px;top:691.5px;font-size:9.00px;color:#d8d8d8;transform:translateX(-50%) scaleX(1.12)">418.000</div>
<div class="a" style="left:765.5px;top:408.5px;width:21px;height:298px;background:#d2d2d2"></div>
<div class="a" style="left:767px;top:410px;width:18px;height:9px;background:#f6f6f6;border:1px solid #c4c4c4"></div>
<div class="a" style="left:767px;top:421.5px;width:18px;height:9px;background:#f6f6f6;border:1px solid #c4c4c4"></div>
<div class="l" style="left:774px;top:410.5px;font-size:5.25px;color:#444;letter-spacing:0.22px;">▴</div>
<div class="l" style="left:774px;top:423px;font-size:5.25px;color:#444;letter-spacing:0.22px;">▾</div>
<div class="a" style="left:767px;top:435px;width:18px;height:14.5px;background:linear-gradient(#f4f4f4,#dcdcdc);border:1px solid #bdbdbd;border-radius:2px"></div>
<svg class="a" style="left:767px;top:435px" width="18" height="15" viewBox="0 0 18 15"><path d="M3.5 10.5l2.5-3 2 1.5 2.5-4 2 1.5 2-3v7z" fill="#444"/><path d="M3.5 12.3h11" stroke="#444" stroke-width="1.1"/></svg>
<div class="a" style="left:765.5px;top:453px;width:21px;height:227.5px;background:linear-gradient(#050505 0,#050505 33.8%,#7a1a10 34.6%,#a32a18 40%,#a83a1c 46%,#a8982c 50%,#6aa82e 53%,#35a035 58%,#2a9e6a 62.5%,#2a90b0 65%,#1f5fc8 68%,#1838b0 71.5%,#0c1660 75%,#050510 78%,#040404 100%)"></div>
<div class="t" style="left:776px;top:477.4px;font-size:7.00px;color:#e8e8e8;">-20</div>
<div class="t" style="left:776px;top:505.4px;font-size:7.00px;color:#e8e8e8;">-40</div>
<div class="t" style="left:776px;top:533.9px;font-size:7.00px;color:#e8e8e8;">-60</div>
<div class="t" style="left:776px;top:562.4px;font-size:7.00px;color:#e8e8e8;">-80</div>
<div class="t" style="left:776px;top:591.4px;font-size:7.00px;color:#e8e8e8;">-100</div>
<div class="t" style="left:776px;top:619.4px;font-size:7.00px;color:#e8e8e8;">-120</div>
<div class="t" style="left:776px;top:648.4px;font-size:7.00px;color:#e8e8e8;">-140</div>
<div class="a" style="left:767px;top:682.5px;width:18px;height:8px;background:#f2f2f2;border:1px solid #c4c4c4"></div>
<div class="a" style="left:767px;top:693.5px;width:18px;height:8px;background:#f2f2f2;border:1px solid #c4c4c4"></div>
<div class="l" style="left:774px;top:682.5px;font-size:5.25px;color:#444;letter-spacing:0.22px;">▴</div>
<div class="l" style="left:774px;top:694.5px;font-size:5.25px;color:#444;letter-spacing:0.22px;">▾</div>
<div class="a" style="left:9px;top:706.5px;width:779px;height:11.5px;background:linear-gradient(#f4f4f4,#ececec)"></div>
<div class="l" style="left:12px;top:710.3px;font-size:6.30px;color:#666;letter-spacing:0.22px;">ezcap USB 2.0 DVB-T/DAB/FM dongle, 00000001</div>
<div class="l b" style="left:436.6px;top:710.3px;font-size:6.09px;color:#222;letter-spacing:0.15px;">416.000 MHz</div>
<div class="l" style="left:487.5px;top:710.3px;font-size:6.09px;color:#8c8c8c;letter-spacing:0.22px;">2 MHz</div>
<div class="l" style="left:517.4px;top:710.3px;font-size:6.09px;color:#8c8c8c;letter-spacing:0.22px;">RBW: 15.26 Hz</div>
<div class="l b" style="left:575.8px;top:710.3px;font-size:6.09px;color:#222;letter-spacing:0.15px;">CPU: 12%</div>
<div class="a" style="left:612px;top:710.3px;width:57px;height:6px;background:linear-gradient(#fdfdfd,#e4e4e4);border:1px solid #bcbcbc;border-radius:2px"></div>
<div class="a" style="left:613.5px;top:711.5px;width:4px;height:3.6px;background:#7fc77f"></div>
<div class="l b" style="left:677.5px;top:710.3px;font-size:6.09px;color:#222;letter-spacing:0.15px;">Size: 580.1 MB</div>
<div class="a" style="left:731px;top:710.3px;width:55.5px;height:6px;background:linear-gradient(#fdfdfd,#e4e4e4);border:1px solid #bcbcbc;border-radius:2px"></div>
</div><svg width="0" height="0" style="position:absolute"><defs><filter id="softblur" x="0" y="0" width="100%" height="100%" color-interpolation-filters="sRGB"><feConvolveMatrix order="3" kernelMatrix="0.0439 0.1217 0.0439 0.1217 0.3377 0.1217 0.0439 0.1217 0.0439" divisor="1" edgeMode="duplicate" preserveAlpha="true"/></filter></defs></svg></body></html>
